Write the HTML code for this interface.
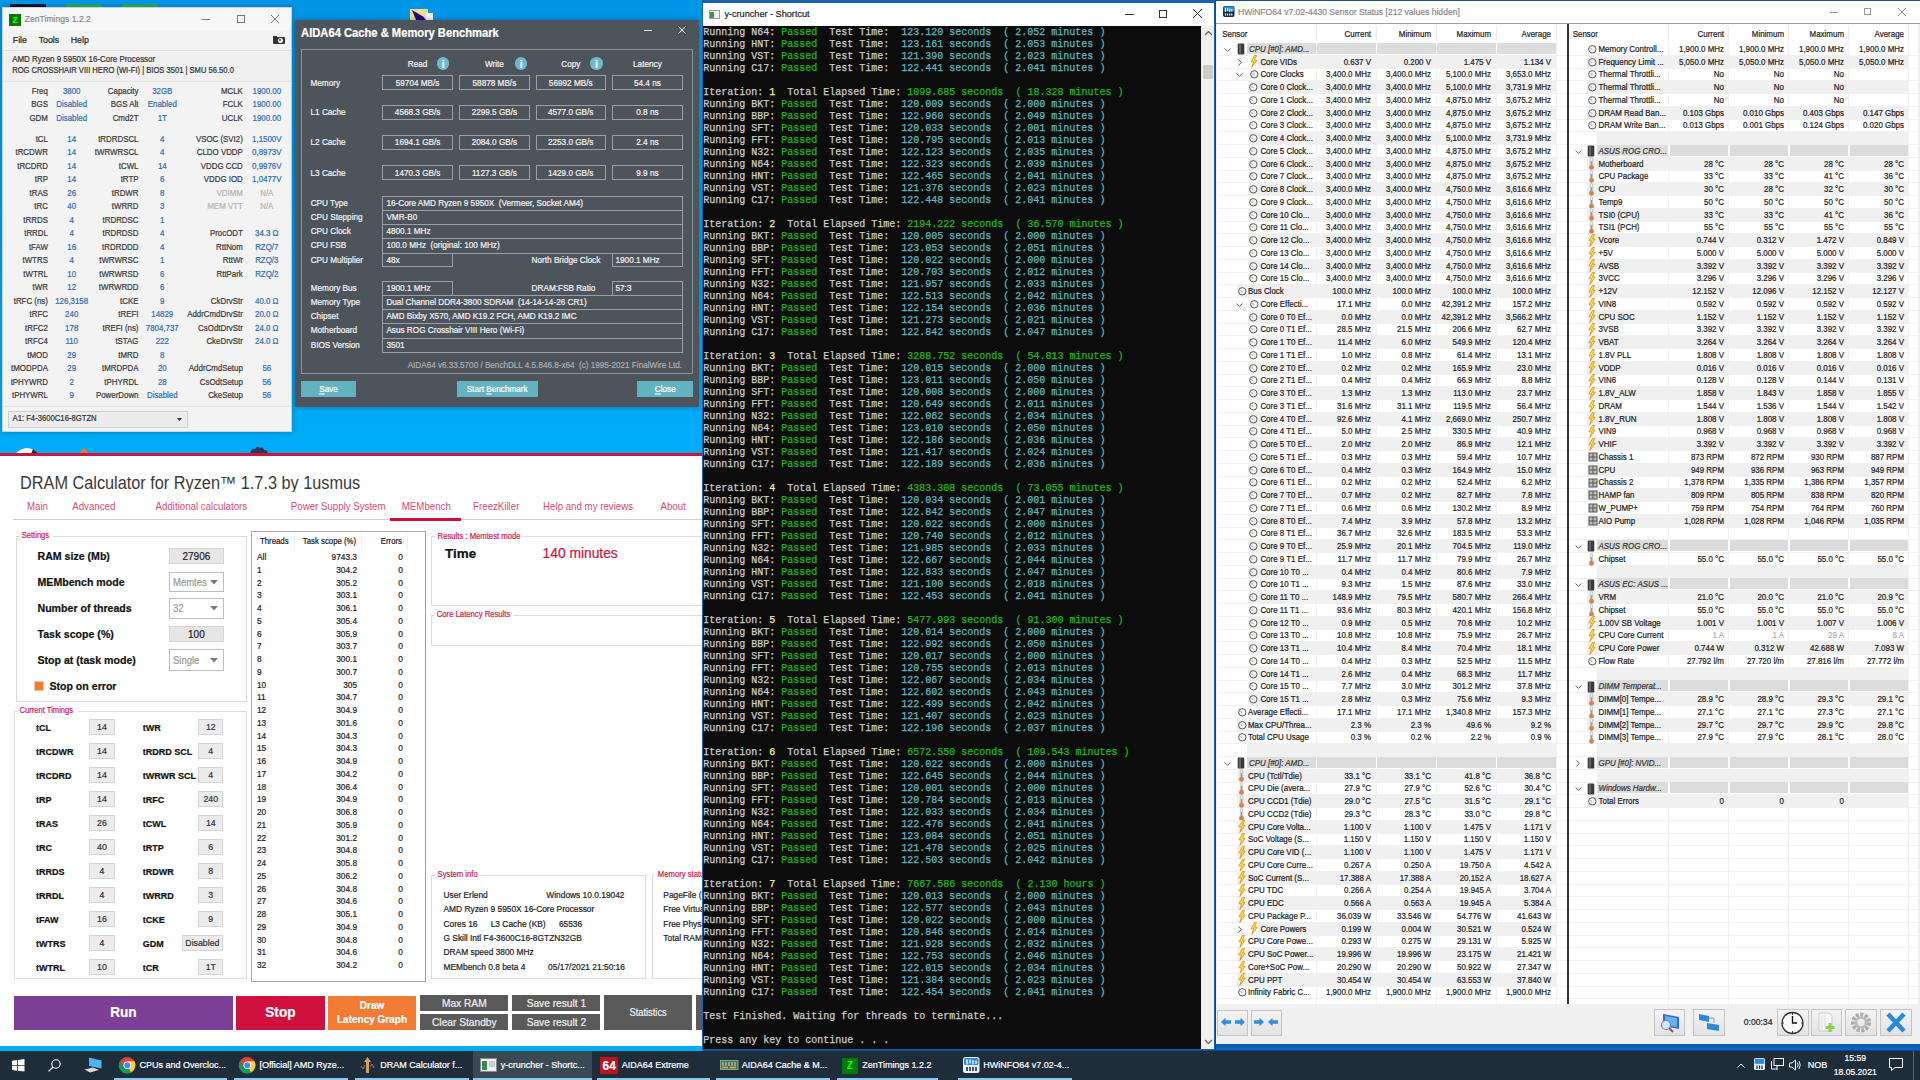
<!DOCTYPE html>
<html><head><meta charset="utf-8"><title>Desktop</title>
<style>
html,body{margin:0;padding:0;}
body{width:1920px;height:1080px;overflow:hidden;position:relative;background:#0a95e6;font-family:"Liberation Sans",sans-serif;}
.a{position:absolute;box-sizing:border-box;}
.t{position:absolute;white-space:pre;line-height:0;-webkit-text-stroke:0.2px currentColor;}
.m{-webkit-text-stroke:0.25px currentColor;}
.m{font-family:"Liberation Mono",monospace;}
svg{position:absolute;overflow:visible;}
</style></head><body>

<div class="a" style="left:0.00px;top:0.00px;width:1920.00px;height:1080.00px;background:#0b4a88;"></div>
<div class="a" style="left:0.00px;top:0.00px;width:702.50px;height:1080.00px;background:linear-gradient(180deg,#0096e8 0%,#00a2f2 25%,#00acf8 42%,#00acf8 100%);"></div>
<div class="a" style="left:1210.00px;top:0.00px;width:10.00px;height:1080.00px;background:#0a4a82;"></div>
<div class="a" style="left:9.50px;top:4.30px;width:36.30px;height:2.30px;background:#0a1838;"></div>
<div class="a" style="left:66.00px;top:4.00px;width:36.00px;height:2.60px;background:#22b060;"></div>
<div class="a" style="left:122.00px;top:4.00px;width:36.00px;height:2.60px;background:#22b060;"></div>
<svg style="left:410px;top:9px" width="23" height="11"><rect x="0" y="0" width="18" height="11" fill="#f6dc8c"/><rect x="16" y="4" width="7" height="7" fill="#f2f6fa"/><path d="M2 1L13 7.5L16 11H6Z" fill="#1a0a8a"/></svg>
<svg style="left:15px;top:446px" width="24" height="8"><path d="M0 8Q12 -4 24 8Z" fill="#ffffff"/><path d="M18 3L24 8H16Z" fill="#223"/></svg>
<svg style="left:79px;top:447px" width="10" height="7"><path d="M5 0L10 7H0Z" fill="#e07a30"/></svg>
<svg style="left:250px;top:445px" width="18" height="9"><path d="M0 9Q1 3 5 4Q7 0 10 3Q13 1 14 5Q18 5 18 9Z" fill="#2a3a5a"/></svg>
<div class="a" style="left:2.00px;top:7.00px;width:290.00px;height:425.00px;background:#f3f3f3;border:1px solid #c9d3dc;box-shadow:0 0 6px rgba(0,0,0,0.25);"></div>
<div class="a" style="left:3.00px;top:8.00px;width:288.00px;height:22.00px;background:#f7f7f7;"></div>
<div class="a" style="left:9.00px;top:13.50px;width:12.00px;height:12.00px;background:#037a03;"></div>
<div class="t" style="top:19.60px;font-size:8.5px;color:#22f022;left:15.00px;transform:translateX(-50%) scaleY(1.13);font-weight:bold;">Z</div>
<div class="t" style="top:19.30px;font-size:8.6px;color:#8a8a8a;left:24.80px;transform:scaleY(1.13);">ZenTimings 1.2.2</div>
<div class="a" style="left:202.00px;top:18.50px;width:8.00px;height:0.80px;background:#777;"></div>
<div class="a" style="left:237.00px;top:15.00px;width:7.50px;height:7.50px;border:1px solid #777;"></div>
<svg style="left:271px;top:15px" width="8" height="8"><path d="M0 0L8 8M8 0L0 8" stroke="#666" stroke-width="0.9"/></svg>
<div class="t" style="top:40.30px;font-size:8.8px;color:#222;left:12.80px;transform:scaleY(1.13);">File</div>
<div class="t" style="top:40.30px;font-size:8.8px;color:#222;left:38.70px;transform:scaleY(1.13);">Tools</div>
<div class="t" style="top:40.30px;font-size:8.8px;color:#222;left:70.70px;transform:scaleY(1.13);">Help</div>
<div class="a" style="left:273.00px;top:36.50px;width:12.00px;height:7.50px;background:#333;border-radius:1px;"></div>
<div class="a" style="left:277.50px;top:37.50px;width:5.00px;height:5.00px;background:#fff;border-radius:50%;"></div>
<div class="a" style="left:278.80px;top:38.80px;width:2.50px;height:2.50px;background:#333;border-radius:50%;"></div>
<div class="a" style="left:273.00px;top:36.00px;width:4.00px;height:1.50px;background:#333;"></div>
<div class="a" style="left:3.00px;top:49.50px;width:288.00px;height:1.00px;background:#e2e2e2;"></div>
<div class="a" style="left:3.00px;top:50.50px;width:288.00px;height:30.00px;background:#f0f0f0;"></div>
<div class="a" style="left:3.00px;top:80.50px;width:288.00px;height:1.00px;background:#e4e4e4;"></div>
<div class="t" style="top:59.50px;font-size:7.95px;color:#333;left:12.20px;transform:scaleY(1.13);">AMD Ryzen 9 5950X 16-Core Processor</div>
<div class="t" style="top:70.80px;font-size:7.6px;color:#333;left:12.20px;transform:scaleY(1.13);">ROG CROSSHAIR VIII HERO (WI-FI) | BIOS 3501 | SMU 56.50.0</div>
<div class="t" style="top:91.60px;font-size:7.9px;color:#3a3a3a;right:1872.10px;transform:scaleY(1.13);">Freq</div>
<div class="t" style="top:91.60px;font-size:7.9px;color:#2f6eb5;left:71.70px;transform:translateX(-50%) scaleY(1.13);">3800</div>
<div class="t" style="top:91.60px;font-size:7.9px;color:#3a3a3a;right:1781.50px;transform:scaleY(1.13);">Capacity</div>
<div class="t" style="top:91.60px;font-size:7.9px;color:#2f6eb5;left:162.30px;transform:translateX(-50%) scaleY(1.13);">32GB</div>
<div class="t" style="top:91.60px;font-size:7.9px;color:#3a3a3a;right:1677.20px;transform:scaleY(1.13);">MCLK</div>
<div class="t" style="top:91.60px;font-size:7.9px;color:#2f6eb5;left:266.80px;transform:translateX(-50%) scaleY(1.13);">1900.00</div>
<div class="t" style="top:105.10px;font-size:7.9px;color:#3a3a3a;right:1872.10px;transform:scaleY(1.13);">BGS</div>
<div class="t" style="top:105.10px;font-size:7.9px;color:#2f6eb5;left:71.70px;transform:translateX(-50%) scaleY(1.13);">Disabled</div>
<div class="t" style="top:105.10px;font-size:7.9px;color:#3a3a3a;right:1781.50px;transform:scaleY(1.13);">BGS Alt</div>
<div class="t" style="top:105.10px;font-size:7.9px;color:#2f6eb5;left:162.30px;transform:translateX(-50%) scaleY(1.13);">Enabled</div>
<div class="t" style="top:105.10px;font-size:7.9px;color:#3a3a3a;right:1677.20px;transform:scaleY(1.13);">FCLK</div>
<div class="t" style="top:105.10px;font-size:7.9px;color:#2f6eb5;left:266.80px;transform:translateX(-50%) scaleY(1.13);">1900.00</div>
<div class="t" style="top:118.60px;font-size:7.9px;color:#3a3a3a;right:1872.10px;transform:scaleY(1.13);">GDM</div>
<div class="t" style="top:118.60px;font-size:7.9px;color:#2f6eb5;left:71.70px;transform:translateX(-50%) scaleY(1.13);">Disabled</div>
<div class="t" style="top:118.60px;font-size:7.9px;color:#3a3a3a;right:1781.50px;transform:scaleY(1.13);">Cmd2T</div>
<div class="t" style="top:118.60px;font-size:7.9px;color:#2f6eb5;left:162.30px;transform:translateX(-50%) scaleY(1.13);">1T</div>
<div class="t" style="top:118.60px;font-size:7.9px;color:#3a3a3a;right:1677.20px;transform:scaleY(1.13);">UCLK</div>
<div class="t" style="top:118.60px;font-size:7.9px;color:#2f6eb5;left:266.80px;transform:translateX(-50%) scaleY(1.13);">1900.00</div>
<div class="t" style="top:139.50px;font-size:7.9px;color:#3a3a3a;right:1872.10px;transform:scaleY(1.13);">tCL</div>
<div class="t" style="top:139.50px;font-size:7.9px;color:#2f6eb5;left:71.70px;transform:translateX(-50%) scaleY(1.13);">14</div>
<div class="t" style="top:139.50px;font-size:7.9px;color:#3a3a3a;right:1781.50px;transform:scaleY(1.13);">tRDRDSCL</div>
<div class="t" style="top:139.50px;font-size:7.9px;color:#2f6eb5;left:162.30px;transform:translateX(-50%) scaleY(1.13);">4</div>
<div class="t" style="top:139.50px;font-size:7.9px;color:#3a3a3a;right:1677.20px;transform:scaleY(1.13);">VSOC (SVI2)</div>
<div class="t" style="top:139.50px;font-size:7.9px;color:#2f6eb5;left:266.80px;transform:translateX(-50%) scaleY(1.13);">1,1500V</div>
<div class="t" style="top:153.00px;font-size:7.9px;color:#3a3a3a;right:1872.10px;transform:scaleY(1.13);">tRCDWR</div>
<div class="t" style="top:153.00px;font-size:7.9px;color:#2f6eb5;left:71.70px;transform:translateX(-50%) scaleY(1.13);">14</div>
<div class="t" style="top:153.00px;font-size:7.9px;color:#3a3a3a;right:1781.50px;transform:scaleY(1.13);">tWRWRSCL</div>
<div class="t" style="top:153.00px;font-size:7.9px;color:#2f6eb5;left:162.30px;transform:translateX(-50%) scaleY(1.13);">4</div>
<div class="t" style="top:153.00px;font-size:7.9px;color:#3a3a3a;right:1677.20px;transform:scaleY(1.13);">CLDO VDDP</div>
<div class="t" style="top:153.00px;font-size:7.9px;color:#2f6eb5;left:266.80px;transform:translateX(-50%) scaleY(1.13);">0,8973V</div>
<div class="t" style="top:166.50px;font-size:7.9px;color:#3a3a3a;right:1872.10px;transform:scaleY(1.13);">tRCDRD</div>
<div class="t" style="top:166.50px;font-size:7.9px;color:#2f6eb5;left:71.70px;transform:translateX(-50%) scaleY(1.13);">14</div>
<div class="t" style="top:166.50px;font-size:7.9px;color:#3a3a3a;right:1781.50px;transform:scaleY(1.13);">tCWL</div>
<div class="t" style="top:166.50px;font-size:7.9px;color:#2f6eb5;left:162.30px;transform:translateX(-50%) scaleY(1.13);">14</div>
<div class="t" style="top:166.50px;font-size:7.9px;color:#3a3a3a;right:1677.20px;transform:scaleY(1.13);">VDDG CCD</div>
<div class="t" style="top:166.50px;font-size:7.9px;color:#2f6eb5;left:266.80px;transform:translateX(-50%) scaleY(1.13);">0,9976V</div>
<div class="t" style="top:180.00px;font-size:7.9px;color:#3a3a3a;right:1872.10px;transform:scaleY(1.13);">tRP</div>
<div class="t" style="top:180.00px;font-size:7.9px;color:#2f6eb5;left:71.70px;transform:translateX(-50%) scaleY(1.13);">14</div>
<div class="t" style="top:180.00px;font-size:7.9px;color:#3a3a3a;right:1781.50px;transform:scaleY(1.13);">tRTP</div>
<div class="t" style="top:180.00px;font-size:7.9px;color:#2f6eb5;left:162.30px;transform:translateX(-50%) scaleY(1.13);">6</div>
<div class="t" style="top:180.00px;font-size:7.9px;color:#3a3a3a;right:1677.20px;transform:scaleY(1.13);">VDDG IOD</div>
<div class="t" style="top:180.00px;font-size:7.9px;color:#2f6eb5;left:266.80px;transform:translateX(-50%) scaleY(1.13);">1,0477V</div>
<div class="t" style="top:193.50px;font-size:7.9px;color:#3a3a3a;right:1872.10px;transform:scaleY(1.13);">tRAS</div>
<div class="t" style="top:193.50px;font-size:7.9px;color:#2f6eb5;left:71.70px;transform:translateX(-50%) scaleY(1.13);">26</div>
<div class="t" style="top:193.50px;font-size:7.9px;color:#3a3a3a;right:1781.50px;transform:scaleY(1.13);">tRDWR</div>
<div class="t" style="top:193.50px;font-size:7.9px;color:#2f6eb5;left:162.30px;transform:translateX(-50%) scaleY(1.13);">8</div>
<div class="t" style="top:193.50px;font-size:7.9px;color:#b4b4b4;right:1677.20px;transform:scaleY(1.13);">VDIMM</div>
<div class="t" style="top:193.50px;font-size:7.9px;color:#b4b4b4;left:266.80px;transform:translateX(-50%) scaleY(1.13);">N/A</div>
<div class="t" style="top:207.00px;font-size:7.9px;color:#3a3a3a;right:1872.10px;transform:scaleY(1.13);">tRC</div>
<div class="t" style="top:207.00px;font-size:7.9px;color:#2f6eb5;left:71.70px;transform:translateX(-50%) scaleY(1.13);">40</div>
<div class="t" style="top:207.00px;font-size:7.9px;color:#3a3a3a;right:1781.50px;transform:scaleY(1.13);">tWRRD</div>
<div class="t" style="top:207.00px;font-size:7.9px;color:#2f6eb5;left:162.30px;transform:translateX(-50%) scaleY(1.13);">3</div>
<div class="t" style="top:207.00px;font-size:7.9px;color:#b4b4b4;right:1677.20px;transform:scaleY(1.13);">MEM VTT</div>
<div class="t" style="top:207.00px;font-size:7.9px;color:#b4b4b4;left:266.80px;transform:translateX(-50%) scaleY(1.13);">N/A</div>
<div class="t" style="top:220.50px;font-size:7.9px;color:#3a3a3a;right:1872.10px;transform:scaleY(1.13);">tRRDS</div>
<div class="t" style="top:220.50px;font-size:7.9px;color:#2f6eb5;left:71.70px;transform:translateX(-50%) scaleY(1.13);">4</div>
<div class="t" style="top:220.50px;font-size:7.9px;color:#3a3a3a;right:1781.50px;transform:scaleY(1.13);">tRDRDSC</div>
<div class="t" style="top:220.50px;font-size:7.9px;color:#2f6eb5;left:162.30px;transform:translateX(-50%) scaleY(1.13);">1</div>
<div class="t" style="top:234.00px;font-size:7.9px;color:#3a3a3a;right:1872.10px;transform:scaleY(1.13);">tRRDL</div>
<div class="t" style="top:234.00px;font-size:7.9px;color:#2f6eb5;left:71.70px;transform:translateX(-50%) scaleY(1.13);">4</div>
<div class="t" style="top:234.00px;font-size:7.9px;color:#3a3a3a;right:1781.50px;transform:scaleY(1.13);">tRDRDSD</div>
<div class="t" style="top:234.00px;font-size:7.9px;color:#2f6eb5;left:162.30px;transform:translateX(-50%) scaleY(1.13);">4</div>
<div class="t" style="top:234.00px;font-size:7.9px;color:#3a3a3a;right:1677.20px;transform:scaleY(1.13);">ProcODT</div>
<div class="t" style="top:234.00px;font-size:7.9px;color:#2f6eb5;left:266.80px;transform:translateX(-50%) scaleY(1.13);">34.3 Ω</div>
<div class="t" style="top:247.50px;font-size:7.9px;color:#3a3a3a;right:1872.10px;transform:scaleY(1.13);">tFAW</div>
<div class="t" style="top:247.50px;font-size:7.9px;color:#2f6eb5;left:71.70px;transform:translateX(-50%) scaleY(1.13);">16</div>
<div class="t" style="top:247.50px;font-size:7.9px;color:#3a3a3a;right:1781.50px;transform:scaleY(1.13);">tRDRDDD</div>
<div class="t" style="top:247.50px;font-size:7.9px;color:#2f6eb5;left:162.30px;transform:translateX(-50%) scaleY(1.13);">4</div>
<div class="t" style="top:247.50px;font-size:7.9px;color:#3a3a3a;right:1677.20px;transform:scaleY(1.13);">RttNom</div>
<div class="t" style="top:247.50px;font-size:7.9px;color:#2f6eb5;left:266.80px;transform:translateX(-50%) scaleY(1.13);">RZQ/7</div>
<div class="t" style="top:261.00px;font-size:7.9px;color:#3a3a3a;right:1872.10px;transform:scaleY(1.13);">tWTRS</div>
<div class="t" style="top:261.00px;font-size:7.9px;color:#2f6eb5;left:71.70px;transform:translateX(-50%) scaleY(1.13);">4</div>
<div class="t" style="top:261.00px;font-size:7.9px;color:#3a3a3a;right:1781.50px;transform:scaleY(1.13);">tWRWRSC</div>
<div class="t" style="top:261.00px;font-size:7.9px;color:#2f6eb5;left:162.30px;transform:translateX(-50%) scaleY(1.13);">1</div>
<div class="t" style="top:261.00px;font-size:7.9px;color:#3a3a3a;right:1677.20px;transform:scaleY(1.13);">RttWr</div>
<div class="t" style="top:261.00px;font-size:7.9px;color:#2f6eb5;left:266.80px;transform:translateX(-50%) scaleY(1.13);">RZQ/3</div>
<div class="t" style="top:274.50px;font-size:7.9px;color:#3a3a3a;right:1872.10px;transform:scaleY(1.13);">tWTRL</div>
<div class="t" style="top:274.50px;font-size:7.9px;color:#2f6eb5;left:71.70px;transform:translateX(-50%) scaleY(1.13);">10</div>
<div class="t" style="top:274.50px;font-size:7.9px;color:#3a3a3a;right:1781.50px;transform:scaleY(1.13);">tWRWRSD</div>
<div class="t" style="top:274.50px;font-size:7.9px;color:#2f6eb5;left:162.30px;transform:translateX(-50%) scaleY(1.13);">6</div>
<div class="t" style="top:274.50px;font-size:7.9px;color:#3a3a3a;right:1677.20px;transform:scaleY(1.13);">RttPark</div>
<div class="t" style="top:274.50px;font-size:7.9px;color:#2f6eb5;left:266.80px;transform:translateX(-50%) scaleY(1.13);">RZQ/2</div>
<div class="t" style="top:288.00px;font-size:7.9px;color:#3a3a3a;right:1872.10px;transform:scaleY(1.13);">tWR</div>
<div class="t" style="top:288.00px;font-size:7.9px;color:#2f6eb5;left:71.70px;transform:translateX(-50%) scaleY(1.13);">12</div>
<div class="t" style="top:288.00px;font-size:7.9px;color:#3a3a3a;right:1781.50px;transform:scaleY(1.13);">tWRWRDD</div>
<div class="t" style="top:288.00px;font-size:7.9px;color:#2f6eb5;left:162.30px;transform:translateX(-50%) scaleY(1.13);">6</div>
<div class="t" style="top:301.50px;font-size:7.9px;color:#3a3a3a;right:1872.10px;transform:scaleY(1.13);">tRFC (ns)</div>
<div class="t" style="top:301.50px;font-size:7.9px;color:#2f6eb5;left:71.70px;transform:translateX(-50%) scaleY(1.13);">126,3158</div>
<div class="t" style="top:301.50px;font-size:7.9px;color:#3a3a3a;right:1781.50px;transform:scaleY(1.13);">tCKE</div>
<div class="t" style="top:301.50px;font-size:7.9px;color:#2f6eb5;left:162.30px;transform:translateX(-50%) scaleY(1.13);">9</div>
<div class="t" style="top:301.50px;font-size:7.9px;color:#3a3a3a;right:1677.20px;transform:scaleY(1.13);">CkDrvStr</div>
<div class="t" style="top:301.50px;font-size:7.9px;color:#2f6eb5;left:266.80px;transform:translateX(-50%) scaleY(1.13);">40.0 Ω</div>
<div class="t" style="top:315.00px;font-size:7.9px;color:#3a3a3a;right:1872.10px;transform:scaleY(1.13);">tRFC</div>
<div class="t" style="top:315.00px;font-size:7.9px;color:#2f6eb5;left:71.70px;transform:translateX(-50%) scaleY(1.13);">240</div>
<div class="t" style="top:315.00px;font-size:7.9px;color:#3a3a3a;right:1781.50px;transform:scaleY(1.13);">tREFI</div>
<div class="t" style="top:315.00px;font-size:7.9px;color:#2f6eb5;left:162.30px;transform:translateX(-50%) scaleY(1.13);">14829</div>
<div class="t" style="top:315.00px;font-size:7.9px;color:#3a3a3a;right:1677.20px;transform:scaleY(1.13);">AddrCmdDrvStr</div>
<div class="t" style="top:315.00px;font-size:7.9px;color:#2f6eb5;left:266.80px;transform:translateX(-50%) scaleY(1.13);">20.0 Ω</div>
<div class="t" style="top:328.50px;font-size:7.9px;color:#3a3a3a;right:1872.10px;transform:scaleY(1.13);">tRFC2</div>
<div class="t" style="top:328.50px;font-size:7.9px;color:#2f6eb5;left:71.70px;transform:translateX(-50%) scaleY(1.13);">178</div>
<div class="t" style="top:328.50px;font-size:7.9px;color:#3a3a3a;right:1781.50px;transform:scaleY(1.13);">tREFI (ns)</div>
<div class="t" style="top:328.50px;font-size:7.9px;color:#2f6eb5;left:162.30px;transform:translateX(-50%) scaleY(1.13);">7804,737</div>
<div class="t" style="top:328.50px;font-size:7.9px;color:#3a3a3a;right:1677.20px;transform:scaleY(1.13);">CsOdtDrvStr</div>
<div class="t" style="top:328.50px;font-size:7.9px;color:#2f6eb5;left:266.80px;transform:translateX(-50%) scaleY(1.13);">24.0 Ω</div>
<div class="t" style="top:342.00px;font-size:7.9px;color:#3a3a3a;right:1872.10px;transform:scaleY(1.13);">tRFC4</div>
<div class="t" style="top:342.00px;font-size:7.9px;color:#2f6eb5;left:71.70px;transform:translateX(-50%) scaleY(1.13);">110</div>
<div class="t" style="top:342.00px;font-size:7.9px;color:#3a3a3a;right:1781.50px;transform:scaleY(1.13);">tSTAG</div>
<div class="t" style="top:342.00px;font-size:7.9px;color:#2f6eb5;left:162.30px;transform:translateX(-50%) scaleY(1.13);">222</div>
<div class="t" style="top:342.00px;font-size:7.9px;color:#3a3a3a;right:1677.20px;transform:scaleY(1.13);">CkeDrvStr</div>
<div class="t" style="top:342.00px;font-size:7.9px;color:#2f6eb5;left:266.80px;transform:translateX(-50%) scaleY(1.13);">24.0 Ω</div>
<div class="t" style="top:355.50px;font-size:7.9px;color:#3a3a3a;right:1872.10px;transform:scaleY(1.13);">tMOD</div>
<div class="t" style="top:355.50px;font-size:7.9px;color:#2f6eb5;left:71.70px;transform:translateX(-50%) scaleY(1.13);">29</div>
<div class="t" style="top:355.50px;font-size:7.9px;color:#3a3a3a;right:1781.50px;transform:scaleY(1.13);">tMRD</div>
<div class="t" style="top:355.50px;font-size:7.9px;color:#2f6eb5;left:162.30px;transform:translateX(-50%) scaleY(1.13);">8</div>
<div class="t" style="top:369.00px;font-size:7.9px;color:#3a3a3a;right:1872.10px;transform:scaleY(1.13);">tMODPDA</div>
<div class="t" style="top:369.00px;font-size:7.9px;color:#2f6eb5;left:71.70px;transform:translateX(-50%) scaleY(1.13);">29</div>
<div class="t" style="top:369.00px;font-size:7.9px;color:#3a3a3a;right:1781.50px;transform:scaleY(1.13);">tMRDPDA</div>
<div class="t" style="top:369.00px;font-size:7.9px;color:#2f6eb5;left:162.30px;transform:translateX(-50%) scaleY(1.13);">20</div>
<div class="t" style="top:369.00px;font-size:7.9px;color:#3a3a3a;right:1677.20px;transform:scaleY(1.13);">AddrCmdSetup</div>
<div class="t" style="top:369.00px;font-size:7.9px;color:#2f6eb5;left:266.80px;transform:translateX(-50%) scaleY(1.13);">56</div>
<div class="t" style="top:382.50px;font-size:7.9px;color:#3a3a3a;right:1872.10px;transform:scaleY(1.13);">tPHYWRD</div>
<div class="t" style="top:382.50px;font-size:7.9px;color:#2f6eb5;left:71.70px;transform:translateX(-50%) scaleY(1.13);">2</div>
<div class="t" style="top:382.50px;font-size:7.9px;color:#3a3a3a;right:1781.50px;transform:scaleY(1.13);">tPHYRDL</div>
<div class="t" style="top:382.50px;font-size:7.9px;color:#2f6eb5;left:162.30px;transform:translateX(-50%) scaleY(1.13);">28</div>
<div class="t" style="top:382.50px;font-size:7.9px;color:#3a3a3a;right:1677.20px;transform:scaleY(1.13);">CsOdtSetup</div>
<div class="t" style="top:382.50px;font-size:7.9px;color:#2f6eb5;left:266.80px;transform:translateX(-50%) scaleY(1.13);">56</div>
<div class="t" style="top:396.00px;font-size:7.9px;color:#3a3a3a;right:1872.10px;transform:scaleY(1.13);">tPHYWRL</div>
<div class="t" style="top:396.00px;font-size:7.9px;color:#2f6eb5;left:71.70px;transform:translateX(-50%) scaleY(1.13);">9</div>
<div class="t" style="top:396.00px;font-size:7.9px;color:#3a3a3a;right:1781.50px;transform:scaleY(1.13);">PowerDown</div>
<div class="t" style="top:396.00px;font-size:7.9px;color:#2f6eb5;left:162.30px;transform:translateX(-50%) scaleY(1.13);">Disabled</div>
<div class="t" style="top:396.00px;font-size:7.9px;color:#3a3a3a;right:1677.20px;transform:scaleY(1.13);">CkeSetup</div>
<div class="t" style="top:396.00px;font-size:7.9px;color:#2f6eb5;left:266.80px;transform:translateX(-50%) scaleY(1.13);">56</div>
<div class="a" style="left:3.00px;top:405.50px;width:288.00px;height:1.00px;background:#e6e6e6;"></div>
<div class="a" style="left:7.50px;top:410.50px;width:180.00px;height:17.00px;background:#ececec;border:1px solid #cfcfcf;"></div>
<div class="t" style="top:419.20px;font-size:7.7px;color:#333;left:12.50px;transform:scaleY(1.13);">A1: F4-3600C16-8GTZN</div>
<svg style="left:177px;top:417.5px" width="5" height="3"><path d="M0 0H5L2.5 3Z" fill="#333"/></svg>
<div class="a" style="left:295.00px;top:19.50px;width:404.00px;height:387.40px;background:#4e545c;box-shadow:0 0 6px rgba(0,0,0,0.3);"></div>
<div class="t" style="top:32.90px;font-size:11.2px;color:#ffffff;left:301.10px;transform:scaleY(1.12);font-weight:bold;">AIDA64 Cache &amp; Memory Benchmark</div>
<div class="a" style="left:643.50px;top:30.00px;width:8.00px;height:1.00px;background:#e0e0e0;"></div>
<svg style="left:677.5px;top:26px" width="8" height="8"><path d="M0 0L8 8M8 0L0 8" stroke="#eee" stroke-width="1"/></svg>
<div class="a" style="left:301.30px;top:48.50px;width:391.50px;height:325.50px;border:1px solid #8d9399;"></div>
<div class="t" style="top:64.70px;font-size:8.2px;color:#f2f2f2;left:417.60px;transform:translateX(-50%) scaleY(1.12);">Read</div>
<div class="t" style="top:64.70px;font-size:8.2px;color:#f2f2f2;left:494.40px;transform:translateX(-50%) scaleY(1.12);">Write</div>
<div class="t" style="top:64.70px;font-size:8.2px;color:#f2f2f2;left:570.80px;transform:translateX(-50%) scaleY(1.12);">Copy</div>
<div class="t" style="top:64.70px;font-size:8.2px;color:#f2f2f2;left:647.40px;transform:translateX(-50%) scaleY(1.12);">Latency</div>
<div class="a" style="left:437.10px;top:57.40px;width:12.40px;height:12.40px;background:#6fb9c8;border-radius:50%;"></div>
<div class="t" style="top:65.20px;font-size:9px;color:#ffffff;left:443.30px;transform:translateX(-50%) scaleY(1.12);font-weight:bold;">i</div>
<div class="a" style="left:515.10px;top:57.40px;width:12.40px;height:12.40px;background:#6fb9c8;border-radius:50%;"></div>
<div class="t" style="top:65.20px;font-size:9px;color:#ffffff;left:521.30px;transform:translateX(-50%) scaleY(1.12);font-weight:bold;">i</div>
<div class="a" style="left:590.30px;top:57.40px;width:12.40px;height:12.40px;background:#6fb9c8;border-radius:50%;"></div>
<div class="t" style="top:65.20px;font-size:9px;color:#ffffff;left:596.50px;transform:translateX(-50%) scaleY(1.12);font-weight:bold;">i</div>
<div class="t" style="top:83.60px;font-size:8.2px;color:#f2f2f2;left:310.50px;transform:scaleY(1.12);">Memory</div>
<div class="a" style="left:382.30px;top:75.30px;width:70.60px;height:14.60px;border:1px solid #9aa0a6;"></div>
<div class="t" style="top:83.60px;font-size:8.2px;color:#f2f2f2;left:417.60px;transform:translateX(-50%) scaleY(1.12);">59704 MB/s</div>
<div class="a" style="left:459.10px;top:75.30px;width:70.60px;height:14.60px;border:1px solid #9aa0a6;"></div>
<div class="t" style="top:83.60px;font-size:8.2px;color:#f2f2f2;left:494.40px;transform:translateX(-50%) scaleY(1.12);">58878 MB/s</div>
<div class="a" style="left:535.50px;top:75.30px;width:70.40px;height:14.60px;border:1px solid #9aa0a6;"></div>
<div class="t" style="top:83.60px;font-size:8.2px;color:#f2f2f2;left:570.70px;transform:translateX(-50%) scaleY(1.12);">56992 MB/s</div>
<div class="a" style="left:612.10px;top:75.30px;width:70.60px;height:14.60px;border:1px solid #9aa0a6;"></div>
<div class="t" style="top:83.60px;font-size:8.2px;color:#f2f2f2;left:647.40px;transform:translateX(-50%) scaleY(1.12);">54.4 ns</div>
<div class="t" style="top:113.40px;font-size:8.2px;color:#f2f2f2;left:310.50px;transform:scaleY(1.12);">L1 Cache</div>
<div class="a" style="left:382.30px;top:105.10px;width:70.60px;height:14.60px;border:1px solid #9aa0a6;"></div>
<div class="t" style="top:113.40px;font-size:8.2px;color:#f2f2f2;left:417.60px;transform:translateX(-50%) scaleY(1.12);">4568.3 GB/s</div>
<div class="a" style="left:459.10px;top:105.10px;width:70.60px;height:14.60px;border:1px solid #9aa0a6;"></div>
<div class="t" style="top:113.40px;font-size:8.2px;color:#f2f2f2;left:494.40px;transform:translateX(-50%) scaleY(1.12);">2299.5 GB/s</div>
<div class="a" style="left:535.50px;top:105.10px;width:70.40px;height:14.60px;border:1px solid #9aa0a6;"></div>
<div class="t" style="top:113.40px;font-size:8.2px;color:#f2f2f2;left:570.70px;transform:translateX(-50%) scaleY(1.12);">4577.0 GB/s</div>
<div class="a" style="left:612.10px;top:105.10px;width:70.60px;height:14.60px;border:1px solid #9aa0a6;"></div>
<div class="t" style="top:113.40px;font-size:8.2px;color:#f2f2f2;left:647.40px;transform:translateX(-50%) scaleY(1.12);">0.8 ns</div>
<div class="t" style="top:143.40px;font-size:8.2px;color:#f2f2f2;left:310.50px;transform:scaleY(1.12);">L2 Cache</div>
<div class="a" style="left:382.30px;top:135.10px;width:70.60px;height:14.60px;border:1px solid #9aa0a6;"></div>
<div class="t" style="top:143.40px;font-size:8.2px;color:#f2f2f2;left:417.60px;transform:translateX(-50%) scaleY(1.12);">1694.1 GB/s</div>
<div class="a" style="left:459.10px;top:135.10px;width:70.60px;height:14.60px;border:1px solid #9aa0a6;"></div>
<div class="t" style="top:143.40px;font-size:8.2px;color:#f2f2f2;left:494.40px;transform:translateX(-50%) scaleY(1.12);">2084.0 GB/s</div>
<div class="a" style="left:535.50px;top:135.10px;width:70.40px;height:14.60px;border:1px solid #9aa0a6;"></div>
<div class="t" style="top:143.40px;font-size:8.2px;color:#f2f2f2;left:570.70px;transform:translateX(-50%) scaleY(1.12);">2253.0 GB/s</div>
<div class="a" style="left:612.10px;top:135.10px;width:70.60px;height:14.60px;border:1px solid #9aa0a6;"></div>
<div class="t" style="top:143.40px;font-size:8.2px;color:#f2f2f2;left:647.40px;transform:translateX(-50%) scaleY(1.12);">2.4 ns</div>
<div class="t" style="top:173.50px;font-size:8.2px;color:#f2f2f2;left:310.50px;transform:scaleY(1.12);">L3 Cache</div>
<div class="a" style="left:382.30px;top:165.20px;width:70.60px;height:14.60px;border:1px solid #9aa0a6;"></div>
<div class="t" style="top:173.50px;font-size:8.2px;color:#f2f2f2;left:417.60px;transform:translateX(-50%) scaleY(1.12);">1470.3 GB/s</div>
<div class="a" style="left:459.10px;top:165.20px;width:70.60px;height:14.60px;border:1px solid #9aa0a6;"></div>
<div class="t" style="top:173.50px;font-size:8.2px;color:#f2f2f2;left:494.40px;transform:translateX(-50%) scaleY(1.12);">1127.3 GB/s</div>
<div class="a" style="left:535.50px;top:165.20px;width:70.40px;height:14.60px;border:1px solid #9aa0a6;"></div>
<div class="t" style="top:173.50px;font-size:8.2px;color:#f2f2f2;left:570.70px;transform:translateX(-50%) scaleY(1.12);">1429.0 GB/s</div>
<div class="a" style="left:612.10px;top:165.20px;width:70.60px;height:14.60px;border:1px solid #9aa0a6;"></div>
<div class="t" style="top:173.50px;font-size:8.2px;color:#f2f2f2;left:647.40px;transform:translateX(-50%) scaleY(1.12);">9.9 ns</div>
<div class="t" style="top:203.72px;font-size:8.2px;color:#f2f2f2;left:310.70px;transform:scaleY(1.12);">CPU Type</div>
<div class="a" style="left:382.00px;top:195.60px;width:300.50px;height:15.25px;border:1px solid #9aa0a6;"></div>
<div class="t" style="top:203.72px;font-size:8.2px;color:#f2f2f2;left:386.40px;transform:scaleY(1.12);">16-Core AMD Ryzen 9 5950X  (Vermeer, Socket AM4)</div>
<div class="t" style="top:217.97px;font-size:8.2px;color:#f2f2f2;left:310.70px;transform:scaleY(1.12);">CPU Stepping</div>
<div class="a" style="left:382.00px;top:209.85px;width:300.50px;height:15.25px;border:1px solid #9aa0a6;"></div>
<div class="t" style="top:217.97px;font-size:8.2px;color:#f2f2f2;left:386.40px;transform:scaleY(1.12);">VMR-B0</div>
<div class="t" style="top:232.22px;font-size:8.2px;color:#f2f2f2;left:310.70px;transform:scaleY(1.12);">CPU Clock</div>
<div class="a" style="left:382.00px;top:224.10px;width:300.50px;height:15.25px;border:1px solid #9aa0a6;"></div>
<div class="t" style="top:232.22px;font-size:8.2px;color:#f2f2f2;left:386.40px;transform:scaleY(1.12);">4800.1 MHz</div>
<div class="t" style="top:246.47px;font-size:8.2px;color:#f2f2f2;left:310.70px;transform:scaleY(1.12);">CPU FSB</div>
<div class="a" style="left:382.00px;top:238.35px;width:300.50px;height:15.25px;border:1px solid #9aa0a6;"></div>
<div class="t" style="top:246.47px;font-size:8.2px;color:#f2f2f2;left:386.40px;transform:scaleY(1.12);">100.0 MHz  (original: 100 MHz)</div>
<div class="t" style="top:260.73px;font-size:8.2px;color:#f2f2f2;left:310.70px;transform:scaleY(1.12);">CPU Multiplier</div>
<div class="a" style="left:382.00px;top:252.60px;width:70.80px;height:14.25px;border:1px solid #9aa0a6;"></div>
<div class="a" style="left:612.00px;top:252.60px;width:70.50px;height:14.25px;border:1px solid #9aa0a6;"></div>
<div class="t" style="top:260.73px;font-size:8.2px;color:#f2f2f2;left:531.60px;transform:scaleY(1.12);">North Bridge Clock</div>
<div class="t" style="top:260.73px;font-size:8.2px;color:#f2f2f2;left:615.50px;transform:scaleY(1.12);">1900.1 MHz</div>
<div class="t" style="top:260.73px;font-size:8.2px;color:#f2f2f2;left:386.40px;transform:scaleY(1.12);">48x</div>
<div class="t" style="top:288.73px;font-size:8.2px;color:#f2f2f2;left:310.70px;transform:scaleY(1.12);">Memory Bus</div>
<div class="a" style="left:382.00px;top:280.60px;width:70.80px;height:15.25px;border:1px solid #9aa0a6;"></div>
<div class="a" style="left:612.00px;top:280.60px;width:70.50px;height:15.25px;border:1px solid #9aa0a6;"></div>
<div class="t" style="top:288.73px;font-size:8.2px;color:#f2f2f2;left:531.60px;transform:scaleY(1.12);">DRAM:FSB Ratio</div>
<div class="t" style="top:288.73px;font-size:8.2px;color:#f2f2f2;left:615.50px;transform:scaleY(1.12);">57:3</div>
<div class="t" style="top:288.73px;font-size:8.2px;color:#f2f2f2;left:386.40px;transform:scaleY(1.12);">1900.1 MHz</div>
<div class="t" style="top:302.98px;font-size:8.2px;color:#f2f2f2;left:310.70px;transform:scaleY(1.12);">Memory Type</div>
<div class="a" style="left:382.00px;top:294.85px;width:300.50px;height:15.25px;border:1px solid #9aa0a6;"></div>
<div class="t" style="top:302.98px;font-size:8.2px;color:#f2f2f2;left:386.40px;transform:scaleY(1.12);">Dual Channel DDR4-3800 SDRAM  (14-14-14-26 CR1)</div>
<div class="t" style="top:317.23px;font-size:8.2px;color:#f2f2f2;left:310.70px;transform:scaleY(1.12);">Chipset</div>
<div class="a" style="left:382.00px;top:309.10px;width:300.50px;height:15.25px;border:1px solid #9aa0a6;"></div>
<div class="t" style="top:317.23px;font-size:8.2px;color:#f2f2f2;left:386.40px;transform:scaleY(1.12);">AMD Bixby X570, AMD K19.2 FCH, AMD K19.2 IMC</div>
<div class="t" style="top:331.48px;font-size:8.2px;color:#f2f2f2;left:310.70px;transform:scaleY(1.12);">Motherboard</div>
<div class="a" style="left:382.00px;top:323.35px;width:300.50px;height:15.25px;border:1px solid #9aa0a6;"></div>
<div class="t" style="top:331.48px;font-size:8.2px;color:#f2f2f2;left:386.40px;transform:scaleY(1.12);">Asus ROG Crosshair VIII Hero (Wi-Fi)</div>
<div class="t" style="top:345.73px;font-size:8.2px;color:#f2f2f2;left:310.70px;transform:scaleY(1.12);">BIOS Version</div>
<div class="a" style="left:382.00px;top:337.60px;width:300.50px;height:15.25px;border:1px solid #9aa0a6;"></div>
<div class="t" style="top:345.73px;font-size:8.2px;color:#f2f2f2;left:386.40px;transform:scaleY(1.12);">3501</div>
<div class="t" style="top:365.60px;font-size:8.15px;color:#a9aeb3;right:1238.00px;transform:scaleY(1.12);">AIDA64 v6.33.5700 / BenchDLL 4.5.846.8-x64  (c) 1995-2021 FinalWire Ltd.</div>
<div class="a" style="left:300.90px;top:381.00px;width:55.20px;height:15.50px;background:#62b2c0;"></div>
<div class="t" style="top:389.90px;font-size:8.2px;color:#ffffff;left:328.50px;transform:translateX(-50%) scaleY(1.12);"><u>S</u>ave</div>
<div class="a" style="left:456.70px;top:381.00px;width:80.90px;height:15.50px;background:#62b2c0;"></div>
<div class="t" style="top:389.90px;font-size:8.2px;color:#ffffff;left:497.15px;transform:translateX(-50%) scaleY(1.12);">Start <u>B</u>enchmark</div>
<div class="a" style="left:637.40px;top:381.00px;width:55.80px;height:15.50px;background:#62b2c0;"></div>
<div class="t" style="top:389.90px;font-size:8.2px;color:#ffffff;left:665.30px;transform:translateX(-50%) scaleY(1.12);"><u>C</u>lose</div>
<div class="a" style="left:0.00px;top:456.00px;width:702.50px;height:590.00px;background:#ffffff;"></div>
<div class="a" style="left:0.00px;top:453.00px;width:702.50px;height:3.30px;background:#c8163f;"></div>
<div class="t" style="top:482.00px;font-size:16.3px;color:#3a3a3a;left:20.00px;transform:scaleY(1.1);-webkit-text-stroke:0;">DRAM Calculator for Ryzen™ 1.7.3 by 1usmus</div>
<div class="t" style="top:506.60px;font-size:9.7px;color:#dc4a78;left:27.00px;transform:scaleY(1.1);-webkit-text-stroke:0;">Main</div>
<div class="t" style="top:506.60px;font-size:9.7px;color:#dc4a78;left:72.20px;transform:scaleY(1.1);-webkit-text-stroke:0;">Advanced</div>
<div class="t" style="top:506.60px;font-size:9.7px;color:#dc4a78;left:155.60px;transform:scaleY(1.1);-webkit-text-stroke:0;">Additional calculators</div>
<div class="t" style="top:506.60px;font-size:9.7px;color:#dc4a78;left:290.80px;transform:scaleY(1.1);-webkit-text-stroke:0;">Power Supply System</div>
<div class="t" style="top:506.60px;font-size:9.7px;color:#dc4a78;left:401.80px;transform:scaleY(1.1);-webkit-text-stroke:0;">MEMbench</div>
<div class="t" style="top:506.60px;font-size:9.7px;color:#dc4a78;left:473.10px;transform:scaleY(1.1);-webkit-text-stroke:0;">FreezKiller</div>
<div class="t" style="top:506.60px;font-size:9.7px;color:#dc4a78;left:543.10px;transform:scaleY(1.1);-webkit-text-stroke:0;">Help and my reviews</div>
<div class="t" style="top:506.60px;font-size:9.7px;color:#dc4a78;left:660.50px;transform:scaleY(1.1);-webkit-text-stroke:0;">About</div>
<div class="a" style="left:13.30px;top:518.80px;width:689.00px;height:1.60px;background:#cfcfcf;"></div>
<div class="a" style="left:390.00px;top:518.20px;width:70.70px;height:2.80px;background:#d0103a;"></div>
<div class="a" style="left:15.80px;top:536.00px;width:231.40px;height:166.00px;border:1px solid #dcdcdc;"></div>
<div class="a" style="left:19.70px;top:533.00px;width:33.00px;height:6.00px;background:#ffffff;"></div>
<div class="t" style="top:536.30px;font-size:7.6px;color:#d2214f;left:21.70px;transform:scaleY(1.1);">Settings</div>
<div class="t" style="top:556.10px;font-size:10.6px;color:#111111;left:37.50px;transform:scaleY(1.1);font-weight:bold;">RAM size (Mb)</div>
<div class="t" style="top:582.20px;font-size:10.6px;color:#111111;left:37.50px;transform:scaleY(1.1);font-weight:bold;">MEMbench mode</div>
<div class="t" style="top:608.30px;font-size:10.6px;color:#111111;left:37.50px;transform:scaleY(1.1);font-weight:bold;">Number of threads</div>
<div class="t" style="top:634.20px;font-size:10.6px;color:#111111;left:37.50px;transform:scaleY(1.1);font-weight:bold;">Task scope (%)</div>
<div class="t" style="top:660.30px;font-size:10.6px;color:#111111;left:37.50px;transform:scaleY(1.1);font-weight:bold;">Stop at (task mode)</div>
<div class="a" style="left:168.90px;top:547.80px;width:55.00px;height:16.60px;background:#e6e6e6;border:1px solid #d6d6d6;"></div>
<div class="t" style="top:556.60px;font-size:10px;color:#222;left:196.40px;transform:translateX(-50%) scaleY(1.1);">27906</div>
<div class="a" style="left:168.90px;top:571.70px;width:55.00px;height:20.80px;background:#ffffff;border:1px solid #bdbdbd;"></div>
<div class="t" style="top:582.70px;font-size:9.5px;color:#9a9a9a;left:173.00px;transform:scaleY(1.1);">Memtes</div>
<div class="a" style="left:168.90px;top:597.80px;width:55.00px;height:21.60px;background:#ffffff;border:1px solid #bdbdbd;"></div>
<div class="t" style="top:608.80px;font-size:9.5px;color:#9a9a9a;left:173.00px;transform:scaleY(1.1);">32</div>
<div class="a" style="left:168.90px;top:625.60px;width:55.00px;height:16.60px;background:#e6e6e6;border:1px solid #d6d6d6;"></div>
<div class="t" style="top:634.60px;font-size:10px;color:#222;left:196.40px;transform:translateX(-50%) scaleY(1.1);">100</div>
<div class="a" style="left:168.90px;top:649.40px;width:55.00px;height:21.40px;background:#ffffff;border:1px solid #bdbdbd;"></div>
<div class="t" style="top:660.80px;font-size:9.5px;color:#9a9a9a;left:173.00px;transform:scaleY(1.1);">Single</div>
<svg style="left:210px;top:580.20px" width="8" height="5"><path d="M0 0H8L4 4.5Z" fill="#7a7a7a"/></svg>
<svg style="left:210px;top:606.30px" width="8" height="5"><path d="M0 0H8L4 4.5Z" fill="#7a7a7a"/></svg>
<svg style="left:210px;top:658.30px" width="8" height="5"><path d="M0 0H8L4 4.5Z" fill="#7a7a7a"/></svg>
<div class="a" style="left:34.20px;top:681.00px;width:10.20px;height:10.00px;background:#f07c30;border:1.5px solid #f2c7a8;"></div>
<div class="t" style="top:686.20px;font-size:10.6px;color:#111111;left:49.40px;transform:scaleY(1.1);font-weight:bold;">Stop on error</div>
<div class="a" style="left:13.50px;top:710.70px;width:233.50px;height:268.30px;border:1px solid #dcdcdc;"></div>
<div class="a" style="left:17.50px;top:707.70px;width:60.00px;height:6.00px;background:#ffffff;"></div>
<div class="t" style="top:711.00px;font-size:7.6px;color:#d2214f;left:19.50px;transform:scaleY(1.1);">Current Timings</div>
<div class="t" style="top:728.10px;font-size:9.0px;color:#111;left:35.90px;transform:scaleY(1.1);font-weight:bold;">tCL</div>
<div class="a" style="left:89.30px;top:719.30px;width:25.30px;height:16.00px;background:#ececec;border:1px solid #d4d4d4;"></div>
<div class="t" style="top:727.30px;font-size:8.8px;color:#333;left:102.00px;transform:translateX(-50%) scaleY(1.1);">14</div>
<div class="t" style="top:728.10px;font-size:9.0px;color:#111;left:142.70px;transform:scaleY(1.1);font-weight:bold;">tWR</div>
<div class="a" style="left:198.10px;top:719.30px;width:25.30px;height:16.00px;background:#ececec;border:1px solid #d4d4d4;"></div>
<div class="t" style="top:727.30px;font-size:8.8px;color:#333;left:210.80px;transform:translateX(-50%) scaleY(1.1);">12</div>
<div class="t" style="top:752.07px;font-size:9.0px;color:#111;left:35.90px;transform:scaleY(1.1);font-weight:bold;">tRCDWR</div>
<div class="a" style="left:89.30px;top:743.27px;width:25.30px;height:16.00px;background:#ececec;border:1px solid #d4d4d4;"></div>
<div class="t" style="top:751.27px;font-size:8.8px;color:#333;left:102.00px;transform:translateX(-50%) scaleY(1.1);">14</div>
<div class="t" style="top:752.07px;font-size:9.0px;color:#111;left:142.70px;transform:scaleY(1.1);font-weight:bold;">tRDRD SCL</div>
<div class="a" style="left:198.10px;top:743.27px;width:25.30px;height:16.00px;background:#ececec;border:1px solid #d4d4d4;"></div>
<div class="t" style="top:751.27px;font-size:8.8px;color:#333;left:210.80px;transform:translateX(-50%) scaleY(1.1);">4</div>
<div class="t" style="top:776.04px;font-size:9.0px;color:#111;left:35.90px;transform:scaleY(1.1);font-weight:bold;">tRCDRD</div>
<div class="a" style="left:89.30px;top:767.24px;width:25.30px;height:16.00px;background:#ececec;border:1px solid #d4d4d4;"></div>
<div class="t" style="top:775.24px;font-size:8.8px;color:#333;left:102.00px;transform:translateX(-50%) scaleY(1.1);">14</div>
<div class="t" style="top:776.04px;font-size:9.0px;color:#111;left:142.70px;transform:scaleY(1.1);font-weight:bold;">tWRWR SCL</div>
<div class="a" style="left:198.10px;top:767.24px;width:25.30px;height:16.00px;background:#ececec;border:1px solid #d4d4d4;"></div>
<div class="t" style="top:775.24px;font-size:8.8px;color:#333;left:210.80px;transform:translateX(-50%) scaleY(1.1);">4</div>
<div class="t" style="top:800.01px;font-size:9.0px;color:#111;left:35.90px;transform:scaleY(1.1);font-weight:bold;">tRP</div>
<div class="a" style="left:89.30px;top:791.21px;width:25.30px;height:16.00px;background:#ececec;border:1px solid #d4d4d4;"></div>
<div class="t" style="top:799.21px;font-size:8.8px;color:#333;left:102.00px;transform:translateX(-50%) scaleY(1.1);">14</div>
<div class="t" style="top:800.01px;font-size:9.0px;color:#111;left:142.70px;transform:scaleY(1.1);font-weight:bold;">tRFC</div>
<div class="a" style="left:198.10px;top:791.21px;width:25.30px;height:16.00px;background:#ececec;border:1px solid #d4d4d4;"></div>
<div class="t" style="top:799.21px;font-size:8.8px;color:#333;left:210.80px;transform:translateX(-50%) scaleY(1.1);">240</div>
<div class="t" style="top:823.98px;font-size:9.0px;color:#111;left:35.90px;transform:scaleY(1.1);font-weight:bold;">tRAS</div>
<div class="a" style="left:89.30px;top:815.18px;width:25.30px;height:16.00px;background:#ececec;border:1px solid #d4d4d4;"></div>
<div class="t" style="top:823.18px;font-size:8.8px;color:#333;left:102.00px;transform:translateX(-50%) scaleY(1.1);">26</div>
<div class="t" style="top:823.98px;font-size:9.0px;color:#111;left:142.70px;transform:scaleY(1.1);font-weight:bold;">tCWL</div>
<div class="a" style="left:198.10px;top:815.18px;width:25.30px;height:16.00px;background:#ececec;border:1px solid #d4d4d4;"></div>
<div class="t" style="top:823.18px;font-size:8.8px;color:#333;left:210.80px;transform:translateX(-50%) scaleY(1.1);">14</div>
<div class="t" style="top:847.95px;font-size:9.0px;color:#111;left:35.90px;transform:scaleY(1.1);font-weight:bold;">tRC</div>
<div class="a" style="left:89.30px;top:839.15px;width:25.30px;height:16.00px;background:#ececec;border:1px solid #d4d4d4;"></div>
<div class="t" style="top:847.15px;font-size:8.8px;color:#333;left:102.00px;transform:translateX(-50%) scaleY(1.1);">40</div>
<div class="t" style="top:847.95px;font-size:9.0px;color:#111;left:142.70px;transform:scaleY(1.1);font-weight:bold;">tRTP</div>
<div class="a" style="left:198.10px;top:839.15px;width:25.30px;height:16.00px;background:#ececec;border:1px solid #d4d4d4;"></div>
<div class="t" style="top:847.15px;font-size:8.8px;color:#333;left:210.80px;transform:translateX(-50%) scaleY(1.1);">6</div>
<div class="t" style="top:871.92px;font-size:9.0px;color:#111;left:35.90px;transform:scaleY(1.1);font-weight:bold;">tRRDS</div>
<div class="a" style="left:89.30px;top:863.12px;width:25.30px;height:16.00px;background:#ececec;border:1px solid #d4d4d4;"></div>
<div class="t" style="top:871.12px;font-size:8.8px;color:#333;left:102.00px;transform:translateX(-50%) scaleY(1.1);">4</div>
<div class="t" style="top:871.92px;font-size:9.0px;color:#111;left:142.70px;transform:scaleY(1.1);font-weight:bold;">tRDWR</div>
<div class="a" style="left:198.10px;top:863.12px;width:25.30px;height:16.00px;background:#ececec;border:1px solid #d4d4d4;"></div>
<div class="t" style="top:871.12px;font-size:8.8px;color:#333;left:210.80px;transform:translateX(-50%) scaleY(1.1);">8</div>
<div class="t" style="top:895.89px;font-size:9.0px;color:#111;left:35.90px;transform:scaleY(1.1);font-weight:bold;">tRRDL</div>
<div class="a" style="left:89.30px;top:887.09px;width:25.30px;height:16.00px;background:#ececec;border:1px solid #d4d4d4;"></div>
<div class="t" style="top:895.09px;font-size:8.8px;color:#333;left:102.00px;transform:translateX(-50%) scaleY(1.1);">4</div>
<div class="t" style="top:895.89px;font-size:9.0px;color:#111;left:142.70px;transform:scaleY(1.1);font-weight:bold;">tWRRD</div>
<div class="a" style="left:198.10px;top:887.09px;width:25.30px;height:16.00px;background:#ececec;border:1px solid #d4d4d4;"></div>
<div class="t" style="top:895.09px;font-size:8.8px;color:#333;left:210.80px;transform:translateX(-50%) scaleY(1.1);">3</div>
<div class="t" style="top:919.86px;font-size:9.0px;color:#111;left:35.90px;transform:scaleY(1.1);font-weight:bold;">tFAW</div>
<div class="a" style="left:89.30px;top:911.06px;width:25.30px;height:16.00px;background:#ececec;border:1px solid #d4d4d4;"></div>
<div class="t" style="top:919.06px;font-size:8.8px;color:#333;left:102.00px;transform:translateX(-50%) scaleY(1.1);">16</div>
<div class="t" style="top:919.86px;font-size:9.0px;color:#111;left:142.70px;transform:scaleY(1.1);font-weight:bold;">tCKE</div>
<div class="a" style="left:198.10px;top:911.06px;width:25.30px;height:16.00px;background:#ececec;border:1px solid #d4d4d4;"></div>
<div class="t" style="top:919.06px;font-size:8.8px;color:#333;left:210.80px;transform:translateX(-50%) scaleY(1.1);">9</div>
<div class="t" style="top:943.83px;font-size:9.0px;color:#111;left:35.90px;transform:scaleY(1.1);font-weight:bold;">tWTRS</div>
<div class="a" style="left:89.30px;top:935.03px;width:25.30px;height:16.00px;background:#ececec;border:1px solid #d4d4d4;"></div>
<div class="t" style="top:943.03px;font-size:8.8px;color:#333;left:102.00px;transform:translateX(-50%) scaleY(1.1);">4</div>
<div class="t" style="top:943.83px;font-size:9.0px;color:#111;left:142.70px;transform:scaleY(1.1);font-weight:bold;">GDM</div>
<div class="a" style="left:182.00px;top:935.03px;width:40.80px;height:16.00px;background:#ececec;border:1px solid #d4d4d4;"></div>
<div class="t" style="top:943.03px;font-size:8.8px;color:#333;left:202.40px;transform:translateX(-50%) scaleY(1.1);">Disabled</div>
<div class="t" style="top:967.80px;font-size:9.0px;color:#111;left:35.90px;transform:scaleY(1.1);font-weight:bold;">tWTRL</div>
<div class="a" style="left:89.30px;top:959.00px;width:25.30px;height:16.00px;background:#ececec;border:1px solid #d4d4d4;"></div>
<div class="t" style="top:967.00px;font-size:8.8px;color:#333;left:102.00px;transform:translateX(-50%) scaleY(1.1);">10</div>
<div class="t" style="top:967.80px;font-size:9.0px;color:#111;left:142.70px;transform:scaleY(1.1);font-weight:bold;">tCR</div>
<div class="a" style="left:198.10px;top:959.00px;width:25.30px;height:16.00px;background:#ececec;border:1px solid #d4d4d4;"></div>
<div class="t" style="top:967.00px;font-size:8.8px;color:#333;left:210.80px;transform:translateX(-50%) scaleY(1.1);">1T</div>
<div class="a" style="left:251.40px;top:531.40px;width:175.00px;height:451.00px;background:#ffffff;border:1px solid #a8a8a8;border-right:1.5px solid #a0a0a0;"></div>
<div class="t" style="top:541.90px;font-size:7.8px;color:#222;left:260.00px;transform:scaleY(1.1);">Threads</div>
<div class="t" style="top:541.90px;font-size:7.8px;color:#222;left:302.80px;transform:scaleY(1.1);">Task scope (%)</div>
<div class="t" style="top:541.90px;font-size:7.8px;color:#222;right:1518.00px;transform:scaleY(1.1);">Errors</div>
<div class="a" style="left:294.40px;top:533.00px;width:1.00px;height:17.00px;background:#f0f0f0;"></div>
<div class="a" style="left:361.00px;top:533.00px;width:1.00px;height:17.00px;background:#f0f0f0;"></div>
<div class="a" style="left:407.00px;top:533.00px;width:1.00px;height:17.00px;background:#f0f0f0;"></div>
<div class="t" style="top:557.00px;font-size:8.3px;color:#222;left:257.00px;transform:scaleY(1.1);">All</div>
<div class="t" style="top:557.00px;font-size:8.3px;color:#222;right:1563.00px;transform:scaleY(1.1);">9743.3</div>
<div class="t" style="top:557.00px;font-size:8.3px;color:#222;right:1517.20px;transform:scaleY(1.1);">0</div>
<div class="t" style="top:569.75px;font-size:8.3px;color:#222;left:257.00px;transform:scaleY(1.1);">1</div>
<div class="t" style="top:569.75px;font-size:8.3px;color:#222;right:1563.00px;transform:scaleY(1.1);">304.2</div>
<div class="t" style="top:569.75px;font-size:8.3px;color:#222;right:1517.20px;transform:scaleY(1.1);">0</div>
<div class="t" style="top:582.50px;font-size:8.3px;color:#222;left:257.00px;transform:scaleY(1.1);">2</div>
<div class="t" style="top:582.50px;font-size:8.3px;color:#222;right:1563.00px;transform:scaleY(1.1);">305.2</div>
<div class="t" style="top:582.50px;font-size:8.3px;color:#222;right:1517.20px;transform:scaleY(1.1);">0</div>
<div class="t" style="top:595.25px;font-size:8.3px;color:#222;left:257.00px;transform:scaleY(1.1);">3</div>
<div class="t" style="top:595.25px;font-size:8.3px;color:#222;right:1563.00px;transform:scaleY(1.1);">303.1</div>
<div class="t" style="top:595.25px;font-size:8.3px;color:#222;right:1517.20px;transform:scaleY(1.1);">0</div>
<div class="t" style="top:608.00px;font-size:8.3px;color:#222;left:257.00px;transform:scaleY(1.1);">4</div>
<div class="t" style="top:608.00px;font-size:8.3px;color:#222;right:1563.00px;transform:scaleY(1.1);">306.1</div>
<div class="t" style="top:608.00px;font-size:8.3px;color:#222;right:1517.20px;transform:scaleY(1.1);">0</div>
<div class="t" style="top:620.75px;font-size:8.3px;color:#222;left:257.00px;transform:scaleY(1.1);">5</div>
<div class="t" style="top:620.75px;font-size:8.3px;color:#222;right:1563.00px;transform:scaleY(1.1);">305.4</div>
<div class="t" style="top:620.75px;font-size:8.3px;color:#222;right:1517.20px;transform:scaleY(1.1);">0</div>
<div class="t" style="top:633.50px;font-size:8.3px;color:#222;left:257.00px;transform:scaleY(1.1);">6</div>
<div class="t" style="top:633.50px;font-size:8.3px;color:#222;right:1563.00px;transform:scaleY(1.1);">305.9</div>
<div class="t" style="top:633.50px;font-size:8.3px;color:#222;right:1517.20px;transform:scaleY(1.1);">0</div>
<div class="t" style="top:646.25px;font-size:8.3px;color:#222;left:257.00px;transform:scaleY(1.1);">7</div>
<div class="t" style="top:646.25px;font-size:8.3px;color:#222;right:1563.00px;transform:scaleY(1.1);">303.7</div>
<div class="t" style="top:646.25px;font-size:8.3px;color:#222;right:1517.20px;transform:scaleY(1.1);">0</div>
<div class="t" style="top:659.00px;font-size:8.3px;color:#222;left:257.00px;transform:scaleY(1.1);">8</div>
<div class="t" style="top:659.00px;font-size:8.3px;color:#222;right:1563.00px;transform:scaleY(1.1);">300.1</div>
<div class="t" style="top:659.00px;font-size:8.3px;color:#222;right:1517.20px;transform:scaleY(1.1);">0</div>
<div class="t" style="top:671.75px;font-size:8.3px;color:#222;left:257.00px;transform:scaleY(1.1);">9</div>
<div class="t" style="top:671.75px;font-size:8.3px;color:#222;right:1563.00px;transform:scaleY(1.1);">300.7</div>
<div class="t" style="top:671.75px;font-size:8.3px;color:#222;right:1517.20px;transform:scaleY(1.1);">0</div>
<div class="t" style="top:684.50px;font-size:8.3px;color:#222;left:257.00px;transform:scaleY(1.1);">10</div>
<div class="t" style="top:684.50px;font-size:8.3px;color:#222;right:1563.00px;transform:scaleY(1.1);">305</div>
<div class="t" style="top:684.50px;font-size:8.3px;color:#222;right:1517.20px;transform:scaleY(1.1);">0</div>
<div class="t" style="top:697.25px;font-size:8.3px;color:#222;left:257.00px;transform:scaleY(1.1);">11</div>
<div class="t" style="top:697.25px;font-size:8.3px;color:#222;right:1563.00px;transform:scaleY(1.1);">304.7</div>
<div class="t" style="top:697.25px;font-size:8.3px;color:#222;right:1517.20px;transform:scaleY(1.1);">0</div>
<div class="t" style="top:710.00px;font-size:8.3px;color:#222;left:257.00px;transform:scaleY(1.1);">12</div>
<div class="t" style="top:710.00px;font-size:8.3px;color:#222;right:1563.00px;transform:scaleY(1.1);">304.9</div>
<div class="t" style="top:710.00px;font-size:8.3px;color:#222;right:1517.20px;transform:scaleY(1.1);">0</div>
<div class="t" style="top:722.75px;font-size:8.3px;color:#222;left:257.00px;transform:scaleY(1.1);">13</div>
<div class="t" style="top:722.75px;font-size:8.3px;color:#222;right:1563.00px;transform:scaleY(1.1);">301.6</div>
<div class="t" style="top:722.75px;font-size:8.3px;color:#222;right:1517.20px;transform:scaleY(1.1);">0</div>
<div class="t" style="top:735.50px;font-size:8.3px;color:#222;left:257.00px;transform:scaleY(1.1);">14</div>
<div class="t" style="top:735.50px;font-size:8.3px;color:#222;right:1563.00px;transform:scaleY(1.1);">304.3</div>
<div class="t" style="top:735.50px;font-size:8.3px;color:#222;right:1517.20px;transform:scaleY(1.1);">0</div>
<div class="t" style="top:748.25px;font-size:8.3px;color:#222;left:257.00px;transform:scaleY(1.1);">15</div>
<div class="t" style="top:748.25px;font-size:8.3px;color:#222;right:1563.00px;transform:scaleY(1.1);">304.3</div>
<div class="t" style="top:748.25px;font-size:8.3px;color:#222;right:1517.20px;transform:scaleY(1.1);">0</div>
<div class="t" style="top:761.00px;font-size:8.3px;color:#222;left:257.00px;transform:scaleY(1.1);">16</div>
<div class="t" style="top:761.00px;font-size:8.3px;color:#222;right:1563.00px;transform:scaleY(1.1);">304.9</div>
<div class="t" style="top:761.00px;font-size:8.3px;color:#222;right:1517.20px;transform:scaleY(1.1);">0</div>
<div class="t" style="top:773.75px;font-size:8.3px;color:#222;left:257.00px;transform:scaleY(1.1);">17</div>
<div class="t" style="top:773.75px;font-size:8.3px;color:#222;right:1563.00px;transform:scaleY(1.1);">304.2</div>
<div class="t" style="top:773.75px;font-size:8.3px;color:#222;right:1517.20px;transform:scaleY(1.1);">0</div>
<div class="t" style="top:786.50px;font-size:8.3px;color:#222;left:257.00px;transform:scaleY(1.1);">18</div>
<div class="t" style="top:786.50px;font-size:8.3px;color:#222;right:1563.00px;transform:scaleY(1.1);">306.4</div>
<div class="t" style="top:786.50px;font-size:8.3px;color:#222;right:1517.20px;transform:scaleY(1.1);">0</div>
<div class="t" style="top:799.25px;font-size:8.3px;color:#222;left:257.00px;transform:scaleY(1.1);">19</div>
<div class="t" style="top:799.25px;font-size:8.3px;color:#222;right:1563.00px;transform:scaleY(1.1);">304.9</div>
<div class="t" style="top:799.25px;font-size:8.3px;color:#222;right:1517.20px;transform:scaleY(1.1);">0</div>
<div class="t" style="top:812.00px;font-size:8.3px;color:#222;left:257.00px;transform:scaleY(1.1);">20</div>
<div class="t" style="top:812.00px;font-size:8.3px;color:#222;right:1563.00px;transform:scaleY(1.1);">306.8</div>
<div class="t" style="top:812.00px;font-size:8.3px;color:#222;right:1517.20px;transform:scaleY(1.1);">0</div>
<div class="t" style="top:824.75px;font-size:8.3px;color:#222;left:257.00px;transform:scaleY(1.1);">21</div>
<div class="t" style="top:824.75px;font-size:8.3px;color:#222;right:1563.00px;transform:scaleY(1.1);">305.9</div>
<div class="t" style="top:824.75px;font-size:8.3px;color:#222;right:1517.20px;transform:scaleY(1.1);">0</div>
<div class="t" style="top:837.50px;font-size:8.3px;color:#222;left:257.00px;transform:scaleY(1.1);">22</div>
<div class="t" style="top:837.50px;font-size:8.3px;color:#222;right:1563.00px;transform:scaleY(1.1);">301.2</div>
<div class="t" style="top:837.50px;font-size:8.3px;color:#222;right:1517.20px;transform:scaleY(1.1);">0</div>
<div class="t" style="top:850.25px;font-size:8.3px;color:#222;left:257.00px;transform:scaleY(1.1);">23</div>
<div class="t" style="top:850.25px;font-size:8.3px;color:#222;right:1563.00px;transform:scaleY(1.1);">304.8</div>
<div class="t" style="top:850.25px;font-size:8.3px;color:#222;right:1517.20px;transform:scaleY(1.1);">0</div>
<div class="t" style="top:863.00px;font-size:8.3px;color:#222;left:257.00px;transform:scaleY(1.1);">24</div>
<div class="t" style="top:863.00px;font-size:8.3px;color:#222;right:1563.00px;transform:scaleY(1.1);">305.8</div>
<div class="t" style="top:863.00px;font-size:8.3px;color:#222;right:1517.20px;transform:scaleY(1.1);">0</div>
<div class="t" style="top:875.75px;font-size:8.3px;color:#222;left:257.00px;transform:scaleY(1.1);">25</div>
<div class="t" style="top:875.75px;font-size:8.3px;color:#222;right:1563.00px;transform:scaleY(1.1);">306.2</div>
<div class="t" style="top:875.75px;font-size:8.3px;color:#222;right:1517.20px;transform:scaleY(1.1);">0</div>
<div class="t" style="top:888.50px;font-size:8.3px;color:#222;left:257.00px;transform:scaleY(1.1);">26</div>
<div class="t" style="top:888.50px;font-size:8.3px;color:#222;right:1563.00px;transform:scaleY(1.1);">304.8</div>
<div class="t" style="top:888.50px;font-size:8.3px;color:#222;right:1517.20px;transform:scaleY(1.1);">0</div>
<div class="t" style="top:901.25px;font-size:8.3px;color:#222;left:257.00px;transform:scaleY(1.1);">27</div>
<div class="t" style="top:901.25px;font-size:8.3px;color:#222;right:1563.00px;transform:scaleY(1.1);">304.6</div>
<div class="t" style="top:901.25px;font-size:8.3px;color:#222;right:1517.20px;transform:scaleY(1.1);">0</div>
<div class="t" style="top:914.00px;font-size:8.3px;color:#222;left:257.00px;transform:scaleY(1.1);">28</div>
<div class="t" style="top:914.00px;font-size:8.3px;color:#222;right:1563.00px;transform:scaleY(1.1);">305.1</div>
<div class="t" style="top:914.00px;font-size:8.3px;color:#222;right:1517.20px;transform:scaleY(1.1);">0</div>
<div class="t" style="top:926.75px;font-size:8.3px;color:#222;left:257.00px;transform:scaleY(1.1);">29</div>
<div class="t" style="top:926.75px;font-size:8.3px;color:#222;right:1563.00px;transform:scaleY(1.1);">304.9</div>
<div class="t" style="top:926.75px;font-size:8.3px;color:#222;right:1517.20px;transform:scaleY(1.1);">0</div>
<div class="t" style="top:939.50px;font-size:8.3px;color:#222;left:257.00px;transform:scaleY(1.1);">30</div>
<div class="t" style="top:939.50px;font-size:8.3px;color:#222;right:1563.00px;transform:scaleY(1.1);">304.8</div>
<div class="t" style="top:939.50px;font-size:8.3px;color:#222;right:1517.20px;transform:scaleY(1.1);">0</div>
<div class="t" style="top:952.25px;font-size:8.3px;color:#222;left:257.00px;transform:scaleY(1.1);">31</div>
<div class="t" style="top:952.25px;font-size:8.3px;color:#222;right:1563.00px;transform:scaleY(1.1);">304.6</div>
<div class="t" style="top:952.25px;font-size:8.3px;color:#222;right:1517.20px;transform:scaleY(1.1);">0</div>
<div class="t" style="top:965.00px;font-size:8.3px;color:#222;left:257.00px;transform:scaleY(1.1);">32</div>
<div class="t" style="top:965.00px;font-size:8.3px;color:#222;right:1563.00px;transform:scaleY(1.1);">304.2</div>
<div class="t" style="top:965.00px;font-size:8.3px;color:#222;right:1517.20px;transform:scaleY(1.1);">0</div>
<div class="a" style="left:430.90px;top:536.40px;width:280.00px;height:69.50px;border:1px solid #dcdcdc;"></div>
<div class="a" style="left:435.00px;top:533.00px;width:88.00px;height:6.00px;background:#fff;"></div>
<div class="t" style="top:536.70px;font-size:7.7px;color:#d2214f;left:437.60px;transform:scaleY(1.1);">Results : Memtest mode</div>
<div class="t" style="top:553.50px;font-size:13.4px;color:#111;left:445.10px;font-weight:bold;">Time</div>
<div class="t" style="top:553.50px;font-size:13.8px;color:#c8163f;left:542.60px;">140 minutes</div>
<div class="a" style="left:430.90px;top:615.00px;width:280.00px;height:31.00px;border:1px solid #dcdcdc;"></div>
<div class="a" style="left:434.00px;top:612.00px;width:80.00px;height:6.00px;background:#fff;"></div>
<div class="t" style="top:615.30px;font-size:7.7px;color:#d2214f;left:436.80px;transform:scaleY(1.1);">Core Latency Results</div>
<div class="a" style="left:430.90px;top:875.00px;width:215.40px;height:104.30px;border:1px solid #dcdcdc;"></div>
<div class="a" style="left:435.00px;top:872.00px;width:44.00px;height:6.00px;background:#fff;"></div>
<div class="t" style="top:875.30px;font-size:7.7px;color:#d2214f;left:437.60px;transform:scaleY(1.1);">System info</div>
<div class="t" style="top:894.60px;font-size:8.4px;color:#222;left:443.50px;transform:scaleY(1.1);">User Erlend</div>
<div class="t" style="top:894.60px;font-size:8.4px;color:#222;left:546.30px;transform:scaleY(1.1);">Windows 10.0.19042</div>
<div class="t" style="top:909.05px;font-size:8.4px;color:#222;left:443.50px;transform:scaleY(1.1);">AMD Ryzen 9 5950X 16-Core Processor</div>
<div class="t" style="top:923.50px;font-size:8.4px;color:#222;left:443.50px;transform:scaleY(1.1);">Cores 16</div>
<div class="t" style="top:937.95px;font-size:8.4px;color:#222;left:443.50px;transform:scaleY(1.1);">G Skill Intl F4-3600C16-8GTZN32GB</div>
<div class="t" style="top:952.40px;font-size:8.4px;color:#222;left:443.50px;transform:scaleY(1.1);">DRAM speed 3800 MHz</div>
<div class="t" style="top:966.85px;font-size:8.4px;color:#222;left:443.50px;transform:scaleY(1.1);">MEMbench 0.8 beta 4</div>
<div class="t" style="top:966.85px;font-size:8.4px;color:#222;left:548.10px;transform:scaleY(1.1);">05/17/2021 21:50:16</div>
<div class="t" style="top:923.50px;font-size:8.4px;color:#222;left:490.70px;transform:scaleY(1.1);">L3 Cache (KB)</div>
<div class="t" style="top:923.50px;font-size:8.4px;color:#222;left:558.90px;transform:scaleY(1.1);">65536</div>
<div class="a" style="left:651.50px;top:875.00px;width:60.00px;height:104.30px;border:1px solid #dcdcdc;"></div>
<div class="a" style="left:655.00px;top:872.00px;width:60.00px;height:6.00px;background:#fff;"></div>
<div class="t" style="top:875.30px;font-size:7.7px;color:#d2214f;left:657.80px;transform:scaleY(1.1);">Memory status</div>
<div class="t" style="top:894.60px;font-size:8.4px;color:#222;left:663.30px;transform:scaleY(1.1);">PageFile (MB)</div>
<div class="t" style="top:909.05px;font-size:8.4px;color:#222;left:663.30px;transform:scaleY(1.1);">Free Virtual</div>
<div class="t" style="top:923.50px;font-size:8.4px;color:#222;left:663.30px;transform:scaleY(1.1);">Free Physical</div>
<div class="t" style="top:937.95px;font-size:8.4px;color:#222;left:663.30px;transform:scaleY(1.1);">Total RAM</div>
<div class="a" style="left:13.75px;top:995.50px;width:219.25px;height:34.00px;background:#7c3f98;"></div>
<div class="t" style="top:1013.00px;font-size:13.6px;color:#ffffff;left:123.40px;transform:translateX(-50%) scaleY(1.1);font-weight:bold;">Run</div>
<div class="a" style="left:236.25px;top:995.50px;width:88.25px;height:34.00px;background:#d0103d;"></div>
<div class="t" style="top:1013.00px;font-size:13.6px;color:#ffffff;left:280.40px;transform:translateX(-50%) scaleY(1.1);font-weight:bold;">Stop</div>
<div class="a" style="left:328.00px;top:995.50px;width:88.00px;height:34.00px;background:#f27c33;"></div>
<div class="t" style="top:1005.80px;font-size:10.0px;color:#ffffff;left:372.00px;transform:translateX(-50%) scaleY(1.1);font-weight:bold;">Draw</div>
<div class="t" style="top:1020.30px;font-size:10.0px;color:#ffffff;left:372.00px;transform:translateX(-50%) scaleY(1.1);font-weight:bold;">Latency Graph</div>
<div class="a" style="left:420.40px;top:995.40px;width:87.90px;height:15.70px;background:#5a5a5a;"></div>
<div class="t" style="top:1003.60px;font-size:10.2px;color:#f0f0f0;left:464.30px;transform:translateX(-50%) scaleY(1.1);">Max RAM</div>
<div class="a" style="left:420.40px;top:1014.40px;width:87.90px;height:15.60px;background:#5a5a5a;"></div>
<div class="t" style="top:1022.60px;font-size:10.2px;color:#f0f0f0;left:464.30px;transform:translateX(-50%) scaleY(1.1);">Clear Standby</div>
<div class="a" style="left:512.40px;top:995.40px;width:88.00px;height:15.70px;background:#5a5a5a;"></div>
<div class="t" style="top:1003.60px;font-size:10.2px;color:#f0f0f0;left:556.40px;transform:translateX(-50%) scaleY(1.1);">Save result 1</div>
<div class="a" style="left:512.40px;top:1014.40px;width:88.00px;height:15.60px;background:#5a5a5a;"></div>
<div class="t" style="top:1022.60px;font-size:10.2px;color:#f0f0f0;left:556.40px;transform:translateX(-50%) scaleY(1.1);">Save result 2</div>
<div class="a" style="left:604.30px;top:995.40px;width:87.70px;height:34.60px;background:#5a5a5a;"></div>
<div class="t" style="top:1013.00px;font-size:9.3px;color:#f0f0f0;left:648.10px;transform:translateX(-50%) scaleY(1.1);">Statistics</div>
<div class="a" style="left:696.30px;top:995.40px;width:6.20px;height:34.60px;background:#5a5a5a;"></div>
<div class="a" style="left:702.30px;top:0.00px;width:512.50px;height:1049.50px;background:#1a60b0;"></div>
<div class="a" style="left:703.20px;top:2.60px;width:510.80px;height:23.00px;background:#ffffff;"></div>
<div class="a" style="left:708.70px;top:9.50px;width:11.00px;height:9.50px;background:#f4f4f4;border:1px solid #9a9a9a;"></div>
<div class="a" style="left:710.00px;top:11.50px;width:3.50px;height:6.00px;background:#3a9a4a;"></div>
<div class="t" style="top:13.60px;font-size:9.15px;color:#222;left:724.40px;">y-cruncher - Shortcut</div>
<div class="a" style="left:1125.00px;top:13.60px;width:9.00px;height:0.90px;background:#333;"></div>
<div class="a" style="left:1158.50px;top:9.50px;width:8.00px;height:8.00px;border:1px solid #333;"></div>
<svg style="left:1192.5px;top:9px" width="9" height="9"><path d="M0 0L9 9M9 0L0 9" stroke="#333" stroke-width="1"/></svg>
<div class="a" style="left:703.20px;top:25.60px;width:498.00px;height:1023.50px;background:#0c0c0c;"></div>
<div class="a" style="left:1201.20px;top:25.60px;width:12.80px;height:1023.50px;background:#f0f0f0;"></div>
<div class="a" style="left:1202.70px;top:65.00px;width:10.80px;height:13.60px;background:#cdcdcd;"></div>
<svg style="left:1204.5px;top:30.5px" width="7" height="4"><path d="M0 4L3.5 0.5L7 4" stroke="#606060" fill="none" stroke-width="1.1"/></svg>
<svg style="left:1204.5px;top:1040px" width="7" height="4"><path d="M0 0L3.5 3.5L7 0" stroke="#606060" fill="none" stroke-width="1.1"/></svg>
<div class="a m" style="left:703.3px;top:25.6px;width:498px;height:1023px;overflow:hidden;font-size:10px;line-height:12px;white-space:pre;"><div style="height:1.9px"></div><span style="color:#cccccc">Running N64: </span><span style="color:#1cb818">Passed</span><span style="color:#cccccc">  Test Time:  </span><span style="color:#5cb8c0">123.120 seconds  ( 2.052 minutes )</span>
<span style="color:#cccccc">Running HNT: </span><span style="color:#1cb818">Passed</span><span style="color:#cccccc">  Test Time:  </span><span style="color:#5cb8c0">123.161 seconds  ( 2.053 minutes )</span>
<span style="color:#cccccc">Running VST: </span><span style="color:#1cb818">Passed</span><span style="color:#cccccc">  Test Time:  </span><span style="color:#5cb8c0">121.390 seconds  ( 2.023 minutes )</span>
<span style="color:#cccccc">Running C17: </span><span style="color:#1cb818">Passed</span><span style="color:#cccccc">  Test Time:  </span><span style="color:#5cb8c0">122.441 seconds  ( 2.041 minutes )</span>

<span style="color:#cccccc">Iteration: </span><span style="color:#f9f1a5">1</span><span style="color:#cccccc">  Total Elapsed Time: </span><span style="color:#1cb818">1099.685 seconds  ( 18.328 minutes )</span>
<span style="color:#cccccc">Running BKT: </span><span style="color:#1cb818">Passed</span><span style="color:#cccccc">  Test Time:  </span><span style="color:#5cb8c0">120.009 seconds  ( 2.000 minutes )</span>
<span style="color:#cccccc">Running BBP: </span><span style="color:#1cb818">Passed</span><span style="color:#cccccc">  Test Time:  </span><span style="color:#5cb8c0">122.960 seconds  ( 2.049 minutes )</span>
<span style="color:#cccccc">Running SFT: </span><span style="color:#1cb818">Passed</span><span style="color:#cccccc">  Test Time:  </span><span style="color:#5cb8c0">120.033 seconds  ( 2.001 minutes )</span>
<span style="color:#cccccc">Running FFT: </span><span style="color:#1cb818">Passed</span><span style="color:#cccccc">  Test Time:  </span><span style="color:#5cb8c0">120.795 seconds  ( 2.013 minutes )</span>
<span style="color:#cccccc">Running N32: </span><span style="color:#1cb818">Passed</span><span style="color:#cccccc">  Test Time:  </span><span style="color:#5cb8c0">122.123 seconds  ( 2.035 minutes )</span>
<span style="color:#cccccc">Running N64: </span><span style="color:#1cb818">Passed</span><span style="color:#cccccc">  Test Time:  </span><span style="color:#5cb8c0">122.323 seconds  ( 2.039 minutes )</span>
<span style="color:#cccccc">Running HNT: </span><span style="color:#1cb818">Passed</span><span style="color:#cccccc">  Test Time:  </span><span style="color:#5cb8c0">122.465 seconds  ( 2.041 minutes )</span>
<span style="color:#cccccc">Running VST: </span><span style="color:#1cb818">Passed</span><span style="color:#cccccc">  Test Time:  </span><span style="color:#5cb8c0">121.376 seconds  ( 2.023 minutes )</span>
<span style="color:#cccccc">Running C17: </span><span style="color:#1cb818">Passed</span><span style="color:#cccccc">  Test Time:  </span><span style="color:#5cb8c0">122.448 seconds  ( 2.041 minutes )</span>

<span style="color:#cccccc">Iteration: </span><span style="color:#f9f1a5">2</span><span style="color:#cccccc">  Total Elapsed Time: </span><span style="color:#1cb818">2194.222 seconds  ( 36.570 minutes )</span>
<span style="color:#cccccc">Running BKT: </span><span style="color:#1cb818">Passed</span><span style="color:#cccccc">  Test Time:  </span><span style="color:#5cb8c0">120.005 seconds  ( 2.000 minutes )</span>
<span style="color:#cccccc">Running BBP: </span><span style="color:#1cb818">Passed</span><span style="color:#cccccc">  Test Time:  </span><span style="color:#5cb8c0">123.053 seconds  ( 2.051 minutes )</span>
<span style="color:#cccccc">Running SFT: </span><span style="color:#1cb818">Passed</span><span style="color:#cccccc">  Test Time:  </span><span style="color:#5cb8c0">120.022 seconds  ( 2.000 minutes )</span>
<span style="color:#cccccc">Running FFT: </span><span style="color:#1cb818">Passed</span><span style="color:#cccccc">  Test Time:  </span><span style="color:#5cb8c0">120.703 seconds  ( 2.012 minutes )</span>
<span style="color:#cccccc">Running N32: </span><span style="color:#1cb818">Passed</span><span style="color:#cccccc">  Test Time:  </span><span style="color:#5cb8c0">121.957 seconds  ( 2.033 minutes )</span>
<span style="color:#cccccc">Running N64: </span><span style="color:#1cb818">Passed</span><span style="color:#cccccc">  Test Time:  </span><span style="color:#5cb8c0">122.513 seconds  ( 2.042 minutes )</span>
<span style="color:#cccccc">Running HNT: </span><span style="color:#1cb818">Passed</span><span style="color:#cccccc">  Test Time:  </span><span style="color:#5cb8c0">122.154 seconds  ( 2.036 minutes )</span>
<span style="color:#cccccc">Running VST: </span><span style="color:#1cb818">Passed</span><span style="color:#cccccc">  Test Time:  </span><span style="color:#5cb8c0">121.273 seconds  ( 2.021 minutes )</span>
<span style="color:#cccccc">Running C17: </span><span style="color:#1cb818">Passed</span><span style="color:#cccccc">  Test Time:  </span><span style="color:#5cb8c0">122.842 seconds  ( 2.047 minutes )</span>

<span style="color:#cccccc">Iteration: </span><span style="color:#f9f1a5">3</span><span style="color:#cccccc">  Total Elapsed Time: </span><span style="color:#1cb818">3288.752 seconds  ( 54.813 minutes )</span>
<span style="color:#cccccc">Running BKT: </span><span style="color:#1cb818">Passed</span><span style="color:#cccccc">  Test Time:  </span><span style="color:#5cb8c0">120.015 seconds  ( 2.000 minutes )</span>
<span style="color:#cccccc">Running BBP: </span><span style="color:#1cb818">Passed</span><span style="color:#cccccc">  Test Time:  </span><span style="color:#5cb8c0">123.011 seconds  ( 2.050 minutes )</span>
<span style="color:#cccccc">Running SFT: </span><span style="color:#1cb818">Passed</span><span style="color:#cccccc">  Test Time:  </span><span style="color:#5cb8c0">120.008 seconds  ( 2.000 minutes )</span>
<span style="color:#cccccc">Running FFT: </span><span style="color:#1cb818">Passed</span><span style="color:#cccccc">  Test Time:  </span><span style="color:#5cb8c0">120.649 seconds  ( 2.011 minutes )</span>
<span style="color:#cccccc">Running N32: </span><span style="color:#1cb818">Passed</span><span style="color:#cccccc">  Test Time:  </span><span style="color:#5cb8c0">122.062 seconds  ( 2.034 minutes )</span>
<span style="color:#cccccc">Running N64: </span><span style="color:#1cb818">Passed</span><span style="color:#cccccc">  Test Time:  </span><span style="color:#5cb8c0">123.010 seconds  ( 2.050 minutes )</span>
<span style="color:#cccccc">Running HNT: </span><span style="color:#1cb818">Passed</span><span style="color:#cccccc">  Test Time:  </span><span style="color:#5cb8c0">122.186 seconds  ( 2.036 minutes )</span>
<span style="color:#cccccc">Running VST: </span><span style="color:#1cb818">Passed</span><span style="color:#cccccc">  Test Time:  </span><span style="color:#5cb8c0">121.417 seconds  ( 2.024 minutes )</span>
<span style="color:#cccccc">Running C17: </span><span style="color:#1cb818">Passed</span><span style="color:#cccccc">  Test Time:  </span><span style="color:#5cb8c0">122.189 seconds  ( 2.036 minutes )</span>

<span style="color:#cccccc">Iteration: </span><span style="color:#f9f1a5">4</span><span style="color:#cccccc">  Total Elapsed Time: </span><span style="color:#1cb818">4383.308 seconds  ( 73.055 minutes )</span>
<span style="color:#cccccc">Running BKT: </span><span style="color:#1cb818">Passed</span><span style="color:#cccccc">  Test Time:  </span><span style="color:#5cb8c0">120.034 seconds  ( 2.001 minutes )</span>
<span style="color:#cccccc">Running BBP: </span><span style="color:#1cb818">Passed</span><span style="color:#cccccc">  Test Time:  </span><span style="color:#5cb8c0">122.842 seconds  ( 2.047 minutes )</span>
<span style="color:#cccccc">Running SFT: </span><span style="color:#1cb818">Passed</span><span style="color:#cccccc">  Test Time:  </span><span style="color:#5cb8c0">120.022 seconds  ( 2.000 minutes )</span>
<span style="color:#cccccc">Running FFT: </span><span style="color:#1cb818">Passed</span><span style="color:#cccccc">  Test Time:  </span><span style="color:#5cb8c0">120.740 seconds  ( 2.012 minutes )</span>
<span style="color:#cccccc">Running N32: </span><span style="color:#1cb818">Passed</span><span style="color:#cccccc">  Test Time:  </span><span style="color:#5cb8c0">121.985 seconds  ( 2.033 minutes )</span>
<span style="color:#cccccc">Running N64: </span><span style="color:#1cb818">Passed</span><span style="color:#cccccc">  Test Time:  </span><span style="color:#5cb8c0">122.667 seconds  ( 2.044 minutes )</span>
<span style="color:#cccccc">Running HNT: </span><span style="color:#1cb818">Passed</span><span style="color:#cccccc">  Test Time:  </span><span style="color:#5cb8c0">122.833 seconds  ( 2.047 minutes )</span>
<span style="color:#cccccc">Running VST: </span><span style="color:#1cb818">Passed</span><span style="color:#cccccc">  Test Time:  </span><span style="color:#5cb8c0">121.100 seconds  ( 2.018 minutes )</span>
<span style="color:#cccccc">Running C17: </span><span style="color:#1cb818">Passed</span><span style="color:#cccccc">  Test Time:  </span><span style="color:#5cb8c0">122.453 seconds  ( 2.041 minutes )</span>

<span style="color:#cccccc">Iteration: </span><span style="color:#f9f1a5">5</span><span style="color:#cccccc">  Total Elapsed Time: </span><span style="color:#1cb818">5477.993 seconds  ( 91.300 minutes )</span>
<span style="color:#cccccc">Running BKT: </span><span style="color:#1cb818">Passed</span><span style="color:#cccccc">  Test Time:  </span><span style="color:#5cb8c0">120.014 seconds  ( 2.000 minutes )</span>
<span style="color:#cccccc">Running BBP: </span><span style="color:#1cb818">Passed</span><span style="color:#cccccc">  Test Time:  </span><span style="color:#5cb8c0">122.992 seconds  ( 2.050 minutes )</span>
<span style="color:#cccccc">Running SFT: </span><span style="color:#1cb818">Passed</span><span style="color:#cccccc">  Test Time:  </span><span style="color:#5cb8c0">120.017 seconds  ( 2.000 minutes )</span>
<span style="color:#cccccc">Running FFT: </span><span style="color:#1cb818">Passed</span><span style="color:#cccccc">  Test Time:  </span><span style="color:#5cb8c0">120.755 seconds  ( 2.013 minutes )</span>
<span style="color:#cccccc">Running N32: </span><span style="color:#1cb818">Passed</span><span style="color:#cccccc">  Test Time:  </span><span style="color:#5cb8c0">122.067 seconds  ( 2.034 minutes )</span>
<span style="color:#cccccc">Running N64: </span><span style="color:#1cb818">Passed</span><span style="color:#cccccc">  Test Time:  </span><span style="color:#5cb8c0">122.602 seconds  ( 2.043 minutes )</span>
<span style="color:#cccccc">Running HNT: </span><span style="color:#1cb818">Passed</span><span style="color:#cccccc">  Test Time:  </span><span style="color:#5cb8c0">122.499 seconds  ( 2.042 minutes )</span>
<span style="color:#cccccc">Running VST: </span><span style="color:#1cb818">Passed</span><span style="color:#cccccc">  Test Time:  </span><span style="color:#5cb8c0">121.407 seconds  ( 2.023 minutes )</span>
<span style="color:#cccccc">Running C17: </span><span style="color:#1cb818">Passed</span><span style="color:#cccccc">  Test Time:  </span><span style="color:#5cb8c0">122.196 seconds  ( 2.037 minutes )</span>

<span style="color:#cccccc">Iteration: </span><span style="color:#f9f1a5">6</span><span style="color:#cccccc">  Total Elapsed Time: </span><span style="color:#1cb818">6572.550 seconds  ( 109.543 minutes )</span>
<span style="color:#cccccc">Running BKT: </span><span style="color:#1cb818">Passed</span><span style="color:#cccccc">  Test Time:  </span><span style="color:#5cb8c0">120.022 seconds  ( 2.000 minutes )</span>
<span style="color:#cccccc">Running BBP: </span><span style="color:#1cb818">Passed</span><span style="color:#cccccc">  Test Time:  </span><span style="color:#5cb8c0">122.645 seconds  ( 2.044 minutes )</span>
<span style="color:#cccccc">Running SFT: </span><span style="color:#1cb818">Passed</span><span style="color:#cccccc">  Test Time:  </span><span style="color:#5cb8c0">120.001 seconds  ( 2.000 minutes )</span>
<span style="color:#cccccc">Running FFT: </span><span style="color:#1cb818">Passed</span><span style="color:#cccccc">  Test Time:  </span><span style="color:#5cb8c0">120.784 seconds  ( 2.013 minutes )</span>
<span style="color:#cccccc">Running N32: </span><span style="color:#1cb818">Passed</span><span style="color:#cccccc">  Test Time:  </span><span style="color:#5cb8c0">122.033 seconds  ( 2.034 minutes )</span>
<span style="color:#cccccc">Running N64: </span><span style="color:#1cb818">Passed</span><span style="color:#cccccc">  Test Time:  </span><span style="color:#5cb8c0">122.476 seconds  ( 2.041 minutes )</span>
<span style="color:#cccccc">Running HNT: </span><span style="color:#1cb818">Passed</span><span style="color:#cccccc">  Test Time:  </span><span style="color:#5cb8c0">123.084 seconds  ( 2.051 minutes )</span>
<span style="color:#cccccc">Running VST: </span><span style="color:#1cb818">Passed</span><span style="color:#cccccc">  Test Time:  </span><span style="color:#5cb8c0">121.478 seconds  ( 2.025 minutes )</span>
<span style="color:#cccccc">Running C17: </span><span style="color:#1cb818">Passed</span><span style="color:#cccccc">  Test Time:  </span><span style="color:#5cb8c0">122.503 seconds  ( 2.042 minutes )</span>

<span style="color:#cccccc">Iteration: </span><span style="color:#f9f1a5">7</span><span style="color:#cccccc">  Total Elapsed Time: </span><span style="color:#1cb818">7667.586 seconds  ( 2.130 hours )</span>
<span style="color:#cccccc">Running BKT: </span><span style="color:#1cb818">Passed</span><span style="color:#cccccc">  Test Time:  </span><span style="color:#5cb8c0">120.013 seconds  ( 2.000 minutes )</span>
<span style="color:#cccccc">Running BBP: </span><span style="color:#1cb818">Passed</span><span style="color:#cccccc">  Test Time:  </span><span style="color:#5cb8c0">122.577 seconds  ( 2.043 minutes )</span>
<span style="color:#cccccc">Running SFT: </span><span style="color:#1cb818">Passed</span><span style="color:#cccccc">  Test Time:  </span><span style="color:#5cb8c0">120.022 seconds  ( 2.000 minutes )</span>
<span style="color:#cccccc">Running FFT: </span><span style="color:#1cb818">Passed</span><span style="color:#cccccc">  Test Time:  </span><span style="color:#5cb8c0">120.846 seconds  ( 2.014 minutes )</span>
<span style="color:#cccccc">Running N32: </span><span style="color:#1cb818">Passed</span><span style="color:#cccccc">  Test Time:  </span><span style="color:#5cb8c0">121.928 seconds  ( 2.032 minutes )</span>
<span style="color:#cccccc">Running N64: </span><span style="color:#1cb818">Passed</span><span style="color:#cccccc">  Test Time:  </span><span style="color:#5cb8c0">122.753 seconds  ( 2.046 minutes )</span>
<span style="color:#cccccc">Running HNT: </span><span style="color:#1cb818">Passed</span><span style="color:#cccccc">  Test Time:  </span><span style="color:#5cb8c0">122.015 seconds  ( 2.034 minutes )</span>
<span style="color:#cccccc">Running VST: </span><span style="color:#1cb818">Passed</span><span style="color:#cccccc">  Test Time:  </span><span style="color:#5cb8c0">121.384 seconds  ( 2.023 minutes )</span>
<span style="color:#cccccc">Running C17: </span><span style="color:#1cb818">Passed</span><span style="color:#cccccc">  Test Time:  </span><span style="color:#5cb8c0">122.454 seconds  ( 2.041 minutes )</span>

<span style="color:#cccccc">Test Finished. Waiting for threads to terminate...</span>

<span style="color:#cccccc">Press any key to continue . . .</span></div>
<div class="a" style="left:1216.40px;top:0.00px;width:703.60px;height:1046.00px;background:#f0f0f0;border-top:1px solid #1d4f8a;"></div>
<div class="a" style="left:1216.40px;top:1.00px;width:703.60px;height:22.30px;background:#ffffff;"></div>
<div class="a" style="left:1216.40px;top:23.30px;width:703.60px;height:0.80px;background:#a0a0a0;"></div>
<svg style="left:1222.7px;top:5.8px" width="11.5" height="11"><rect x="0" y="0" width="11.5" height="11" rx="2" fill="#1b2b3a"/><rect x="0.5" y="0.5" width="10.5" height="5" rx="1.5" fill="#2e8ee0"/><path d="M2.5 2V6M4.6 2V5M6.7 2.5V6M8.8 3V5.5" stroke="#e6f4ff" stroke-width="1.1"/><path d="M2.5 7.5V9.5M4.6 7.5V9.5M6.7 7.5V9.5M8.8 7.5V9.5" stroke="#fff" stroke-width="1.2"/></svg>
<div class="t" style="top:11.80px;font-size:8.57px;color:#8a8a8a;left:1238.00px;transform:scaleY(1.1);">HWiNFO64 v7.02-4430 Sensor Status [212 values hidden]</div>
<div class="a" style="left:1830.00px;top:11.60px;width:7.50px;height:0.90px;background:#999;"></div>
<div class="a" style="left:1863.50px;top:7.80px;width:7.50px;height:7.50px;border:1px solid #999;"></div>
<svg style="left:1898px;top:8px" width="8" height="8"><path d="M0 0L8 8M8 0L0 8" stroke="#888" stroke-width="0.9"/></svg>
<div class="a" style="left:1217.00px;top:24.00px;width:350.50px;height:979.75px;background:#ffffff;"></div>
<div class="t" style="top:35.10px;font-size:7.95px;color:#1c1c1c;left:1222.20px;transform:scaleY(1.1);">Sensor</div>
<div class="t" style="top:35.10px;font-size:7.95px;color:#1c1c1c;right:549.00px;transform:scaleY(1.1);">Current</div>
<div class="t" style="top:35.10px;font-size:7.95px;color:#1c1c1c;right:489.00px;transform:scaleY(1.1);">Minimum</div>
<div class="t" style="top:35.10px;font-size:7.95px;color:#1c1c1c;right:429.00px;transform:scaleY(1.1);">Maximum</div>
<div class="t" style="top:35.10px;font-size:7.95px;color:#1c1c1c;right:369.00px;transform:scaleY(1.1);">Average</div>
<div class="a" style="left:1316.00px;top:26.00px;width:1.00px;height:15.00px;background:#ececec;"></div>
<div class="a" style="left:1376.00px;top:26.00px;width:1.00px;height:15.00px;background:#ececec;"></div>
<div class="a" style="left:1436.00px;top:26.00px;width:1.00px;height:15.00px;background:#ececec;"></div>
<div class="a" style="left:1496.00px;top:26.00px;width:1.00px;height:15.00px;background:#ececec;"></div>
<div class="a" style="left:1556.00px;top:26.00px;width:1.00px;height:15.00px;background:#ececec;"></div>
<div class="a" style="left:1218.00px;top:54.75px;width:349.50px;height:0.60px;background:#f1f1f1;"></div>
<div class="a" style="left:1218.00px;top:67.50px;width:349.50px;height:0.60px;background:#f1f1f1;"></div>
<div class="a" style="left:1218.00px;top:80.25px;width:349.50px;height:0.60px;background:#f1f1f1;"></div>
<div class="a" style="left:1218.00px;top:93.00px;width:349.50px;height:0.60px;background:#f1f1f1;"></div>
<div class="a" style="left:1218.00px;top:105.75px;width:349.50px;height:0.60px;background:#f1f1f1;"></div>
<div class="a" style="left:1218.00px;top:118.50px;width:349.50px;height:0.60px;background:#f1f1f1;"></div>
<div class="a" style="left:1218.00px;top:131.25px;width:349.50px;height:0.60px;background:#f1f1f1;"></div>
<div class="a" style="left:1218.00px;top:144.00px;width:349.50px;height:0.60px;background:#f1f1f1;"></div>
<div class="a" style="left:1218.00px;top:156.75px;width:349.50px;height:0.60px;background:#f1f1f1;"></div>
<div class="a" style="left:1218.00px;top:169.50px;width:349.50px;height:0.60px;background:#f1f1f1;"></div>
<div class="a" style="left:1218.00px;top:182.25px;width:349.50px;height:0.60px;background:#f1f1f1;"></div>
<div class="a" style="left:1218.00px;top:195.00px;width:349.50px;height:0.60px;background:#f1f1f1;"></div>
<div class="a" style="left:1218.00px;top:207.75px;width:349.50px;height:0.60px;background:#f1f1f1;"></div>
<div class="a" style="left:1218.00px;top:220.50px;width:349.50px;height:0.60px;background:#f1f1f1;"></div>
<div class="a" style="left:1218.00px;top:233.25px;width:349.50px;height:0.60px;background:#f1f1f1;"></div>
<div class="a" style="left:1218.00px;top:246.00px;width:349.50px;height:0.60px;background:#f1f1f1;"></div>
<div class="a" style="left:1218.00px;top:258.75px;width:349.50px;height:0.60px;background:#f1f1f1;"></div>
<div class="a" style="left:1218.00px;top:271.50px;width:349.50px;height:0.60px;background:#f1f1f1;"></div>
<div class="a" style="left:1218.00px;top:284.25px;width:349.50px;height:0.60px;background:#f1f1f1;"></div>
<div class="a" style="left:1218.00px;top:297.00px;width:349.50px;height:0.60px;background:#f1f1f1;"></div>
<div class="a" style="left:1218.00px;top:309.75px;width:349.50px;height:0.60px;background:#f1f1f1;"></div>
<div class="a" style="left:1218.00px;top:322.50px;width:349.50px;height:0.60px;background:#f1f1f1;"></div>
<div class="a" style="left:1218.00px;top:335.25px;width:349.50px;height:0.60px;background:#f1f1f1;"></div>
<div class="a" style="left:1218.00px;top:348.00px;width:349.50px;height:0.60px;background:#f1f1f1;"></div>
<div class="a" style="left:1218.00px;top:360.75px;width:349.50px;height:0.60px;background:#f1f1f1;"></div>
<div class="a" style="left:1218.00px;top:373.50px;width:349.50px;height:0.60px;background:#f1f1f1;"></div>
<div class="a" style="left:1218.00px;top:386.25px;width:349.50px;height:0.60px;background:#f1f1f1;"></div>
<div class="a" style="left:1218.00px;top:399.00px;width:349.50px;height:0.60px;background:#f1f1f1;"></div>
<div class="a" style="left:1218.00px;top:411.75px;width:349.50px;height:0.60px;background:#f1f1f1;"></div>
<div class="a" style="left:1218.00px;top:424.50px;width:349.50px;height:0.60px;background:#f1f1f1;"></div>
<div class="a" style="left:1218.00px;top:437.25px;width:349.50px;height:0.60px;background:#f1f1f1;"></div>
<div class="a" style="left:1218.00px;top:450.00px;width:349.50px;height:0.60px;background:#f1f1f1;"></div>
<div class="a" style="left:1218.00px;top:462.75px;width:349.50px;height:0.60px;background:#f1f1f1;"></div>
<div class="a" style="left:1218.00px;top:475.50px;width:349.50px;height:0.60px;background:#f1f1f1;"></div>
<div class="a" style="left:1218.00px;top:488.25px;width:349.50px;height:0.60px;background:#f1f1f1;"></div>
<div class="a" style="left:1218.00px;top:501.00px;width:349.50px;height:0.60px;background:#f1f1f1;"></div>
<div class="a" style="left:1218.00px;top:513.75px;width:349.50px;height:0.60px;background:#f1f1f1;"></div>
<div class="a" style="left:1218.00px;top:526.50px;width:349.50px;height:0.60px;background:#f1f1f1;"></div>
<div class="a" style="left:1218.00px;top:539.25px;width:349.50px;height:0.60px;background:#f1f1f1;"></div>
<div class="a" style="left:1218.00px;top:552.00px;width:349.50px;height:0.60px;background:#f1f1f1;"></div>
<div class="a" style="left:1218.00px;top:564.75px;width:349.50px;height:0.60px;background:#f1f1f1;"></div>
<div class="a" style="left:1218.00px;top:577.50px;width:349.50px;height:0.60px;background:#f1f1f1;"></div>
<div class="a" style="left:1218.00px;top:590.25px;width:349.50px;height:0.60px;background:#f1f1f1;"></div>
<div class="a" style="left:1218.00px;top:603.00px;width:349.50px;height:0.60px;background:#f1f1f1;"></div>
<div class="a" style="left:1218.00px;top:615.75px;width:349.50px;height:0.60px;background:#f1f1f1;"></div>
<div class="a" style="left:1218.00px;top:628.50px;width:349.50px;height:0.60px;background:#f1f1f1;"></div>
<div class="a" style="left:1218.00px;top:641.25px;width:349.50px;height:0.60px;background:#f1f1f1;"></div>
<div class="a" style="left:1218.00px;top:654.00px;width:349.50px;height:0.60px;background:#f1f1f1;"></div>
<div class="a" style="left:1218.00px;top:666.75px;width:349.50px;height:0.60px;background:#f1f1f1;"></div>
<div class="a" style="left:1218.00px;top:679.50px;width:349.50px;height:0.60px;background:#f1f1f1;"></div>
<div class="a" style="left:1218.00px;top:692.25px;width:349.50px;height:0.60px;background:#f1f1f1;"></div>
<div class="a" style="left:1218.00px;top:705.00px;width:349.50px;height:0.60px;background:#f1f1f1;"></div>
<div class="a" style="left:1218.00px;top:717.75px;width:349.50px;height:0.60px;background:#f1f1f1;"></div>
<div class="a" style="left:1218.00px;top:730.50px;width:349.50px;height:0.60px;background:#f1f1f1;"></div>
<div class="a" style="left:1218.00px;top:743.25px;width:349.50px;height:0.60px;background:#f1f1f1;"></div>
<div class="a" style="left:1218.00px;top:756.00px;width:349.50px;height:0.60px;background:#f1f1f1;"></div>
<div class="a" style="left:1218.00px;top:768.75px;width:349.50px;height:0.60px;background:#f1f1f1;"></div>
<div class="a" style="left:1218.00px;top:781.50px;width:349.50px;height:0.60px;background:#f1f1f1;"></div>
<div class="a" style="left:1218.00px;top:794.25px;width:349.50px;height:0.60px;background:#f1f1f1;"></div>
<div class="a" style="left:1218.00px;top:807.00px;width:349.50px;height:0.60px;background:#f1f1f1;"></div>
<div class="a" style="left:1218.00px;top:819.75px;width:349.50px;height:0.60px;background:#f1f1f1;"></div>
<div class="a" style="left:1218.00px;top:832.50px;width:349.50px;height:0.60px;background:#f1f1f1;"></div>
<div class="a" style="left:1218.00px;top:845.25px;width:349.50px;height:0.60px;background:#f1f1f1;"></div>
<div class="a" style="left:1218.00px;top:858.00px;width:349.50px;height:0.60px;background:#f1f1f1;"></div>
<div class="a" style="left:1218.00px;top:870.75px;width:349.50px;height:0.60px;background:#f1f1f1;"></div>
<div class="a" style="left:1218.00px;top:883.50px;width:349.50px;height:0.60px;background:#f1f1f1;"></div>
<div class="a" style="left:1218.00px;top:896.25px;width:349.50px;height:0.60px;background:#f1f1f1;"></div>
<div class="a" style="left:1218.00px;top:909.00px;width:349.50px;height:0.60px;background:#f1f1f1;"></div>
<div class="a" style="left:1218.00px;top:921.75px;width:349.50px;height:0.60px;background:#f1f1f1;"></div>
<div class="a" style="left:1218.00px;top:934.50px;width:349.50px;height:0.60px;background:#f1f1f1;"></div>
<div class="a" style="left:1218.00px;top:947.25px;width:349.50px;height:0.60px;background:#f1f1f1;"></div>
<div class="a" style="left:1218.00px;top:960.00px;width:349.50px;height:0.60px;background:#f1f1f1;"></div>
<div class="a" style="left:1218.00px;top:972.75px;width:349.50px;height:0.60px;background:#f1f1f1;"></div>
<div class="a" style="left:1218.00px;top:985.50px;width:349.50px;height:0.60px;background:#f1f1f1;"></div>
<div class="a" style="left:1218.00px;top:998.25px;width:349.50px;height:0.60px;background:#f1f1f1;"></div>
<div class="a" style="left:1316.00px;top:42.60px;width:0.70px;height:961.15px;background:#f1f1f1;"></div>
<div class="a" style="left:1376.00px;top:42.60px;width:0.70px;height:961.15px;background:#f1f1f1;"></div>
<div class="a" style="left:1436.00px;top:42.60px;width:0.70px;height:961.15px;background:#f1f1f1;"></div>
<div class="a" style="left:1496.00px;top:42.60px;width:0.70px;height:961.15px;background:#f1f1f1;"></div>
<div class="a" style="left:1556.00px;top:42.60px;width:0.70px;height:961.15px;background:#f1f1f1;"></div>
<div class="a" style="left:1247.00px;top:42.60px;width:309.00px;height:11.25px;background:#dcdcdc;"></div>
<div class="a" style="left:1316.00px;top:42.60px;width:1.20px;height:11.25px;background:#ffffff;"></div>
<div class="a" style="left:1376.00px;top:42.60px;width:1.20px;height:11.25px;background:#ffffff;"></div>
<div class="a" style="left:1436.00px;top:42.60px;width:1.20px;height:11.25px;background:#ffffff;"></div>
<div class="a" style="left:1496.00px;top:42.60px;width:1.20px;height:11.25px;background:#ffffff;"></div>
<svg style="left:1224.00px;top:47.88px" width="7" height="4"><path d="M0.5 0.5L3.5 3.3L6.5 0.5" stroke="#555" fill="none" stroke-width="0.9"/></svg>
<svg style="left:1236.50px;top:43.08px" width="8" height="12"><rect x="1" y="0.5" width="6" height="11" rx="0.6" fill="#3a3a3a"/><rect x="2" y="1.2" width="2" height="9.5" fill="#666"/><path d="M0 2H1M0 4H1M0 6H1M0 8H1M0 10H1M7 2H8M7 4H8M7 6H8M7 8H8M7 10H8" stroke="#555" stroke-width="0.7"/></svg>
<div class="t" style="top:49.88px;font-size:7.95px;color:#333;left:1249.00px;transform:scaleY(1.1);font-style:italic;">CPU [#0]: AMD...</div>
<div class="a" style="left:1258.40px;top:55.35px;width:297.60px;height:12.75px;background:#f0f0f0;"></div>
<svg style="left:1237.50px;top:59.12px" width="4" height="7"><path d="M0.5 0.5L3.3 3.5L0.5 6.5" stroke="#555" fill="none" stroke-width="0.9"/></svg>
<svg style="left:1250.00px;top:55.33px" width="8" height="13"><path d="M4.5 0.5L1 6.8H3.6L1.8 12.5L7.2 5.2H4.6L6.5 0.5Z" fill="#ffe04a" stroke="#d88a10" stroke-width="0.8"/></svg>
<div class="t" style="top:62.62px;font-size:7.95px;color:#1c1c1c;left:1260.40px;transform:scaleY(1.1);">Core VIDs</div>
<div class="t" style="top:62.62px;font-size:7.95px;color:#222;right:549.00px;transform:scaleY(1.1);">0.637 V</div>
<div class="t" style="top:62.62px;font-size:7.95px;color:#222;right:489.00px;transform:scaleY(1.1);">0.200 V</div>
<div class="t" style="top:62.62px;font-size:7.95px;color:#222;right:429.00px;transform:scaleY(1.1);">1.475 V</div>
<div class="t" style="top:62.62px;font-size:7.95px;color:#222;right:369.00px;transform:scaleY(1.1);">1.134 V</div>
<svg style="left:1236.00px;top:73.38px" width="7" height="4"><path d="M0.5 0.5L3.5 3.3L6.5 0.5" stroke="#555" fill="none" stroke-width="0.9"/></svg>
<svg style="left:1250.00px;top:70.28px" width="9" height="9"><circle cx="4.3" cy="4.3" r="3.7" fill="#f4f4f4" stroke="#5a5a5a" stroke-width="1"/><path d="M2.6 3.6L4.3 4.6" stroke="#777" stroke-width="0.8"/></svg>
<div class="t" style="top:75.38px;font-size:7.95px;color:#1c1c1c;left:1260.40px;transform:scaleY(1.1);">Core Clocks</div>
<div class="t" style="top:75.38px;font-size:7.95px;color:#222;right:549.00px;transform:scaleY(1.1);">3,400.0 MHz</div>
<div class="t" style="top:75.38px;font-size:7.95px;color:#222;right:489.00px;transform:scaleY(1.1);">3,400.0 MHz</div>
<div class="t" style="top:75.38px;font-size:7.95px;color:#222;right:429.00px;transform:scaleY(1.1);">5,100.0 MHz</div>
<div class="t" style="top:75.38px;font-size:7.95px;color:#222;right:369.00px;transform:scaleY(1.1);">3,653.0 MHz</div>
<div class="a" style="left:1247.75px;top:80.85px;width:308.25px;height:12.75px;background:#f0f0f0;"></div>
<svg style="left:1248.75px;top:83.03px" width="9" height="9"><circle cx="4.3" cy="4.3" r="3.7" fill="#f4f4f4" stroke="#5a5a5a" stroke-width="1"/><path d="M2.6 3.6L4.3 4.6" stroke="#777" stroke-width="0.8"/></svg>
<div class="t" style="top:88.12px;font-size:7.95px;color:#1c1c1c;left:1260.40px;transform:scaleY(1.1);">Core 0 Clock...</div>
<div class="t" style="top:88.12px;font-size:7.95px;color:#1c1c1c;right:549.00px;transform:scaleY(1.1);">3,400.0 MHz</div>
<div class="t" style="top:88.12px;font-size:7.95px;color:#1c1c1c;right:489.00px;transform:scaleY(1.1);">3,400.0 MHz</div>
<div class="t" style="top:88.12px;font-size:7.95px;color:#1c1c1c;right:429.00px;transform:scaleY(1.1);">5,100.0 MHz</div>
<div class="t" style="top:88.12px;font-size:7.95px;color:#1c1c1c;right:369.00px;transform:scaleY(1.1);">3,731.9 MHz</div>
<svg style="left:1248.75px;top:95.78px" width="9" height="9"><circle cx="4.3" cy="4.3" r="3.7" fill="#f4f4f4" stroke="#5a5a5a" stroke-width="1"/><path d="M2.6 3.6L4.3 4.6" stroke="#777" stroke-width="0.8"/></svg>
<div class="t" style="top:100.88px;font-size:7.95px;color:#1c1c1c;left:1260.40px;transform:scaleY(1.1);">Core 1 Clock...</div>
<div class="t" style="top:100.88px;font-size:7.95px;color:#1c1c1c;right:549.00px;transform:scaleY(1.1);">3,400.0 MHz</div>
<div class="t" style="top:100.88px;font-size:7.95px;color:#1c1c1c;right:489.00px;transform:scaleY(1.1);">3,400.0 MHz</div>
<div class="t" style="top:100.88px;font-size:7.95px;color:#1c1c1c;right:429.00px;transform:scaleY(1.1);">4,875.0 MHz</div>
<div class="t" style="top:100.88px;font-size:7.95px;color:#1c1c1c;right:369.00px;transform:scaleY(1.1);">3,675.2 MHz</div>
<div class="a" style="left:1247.75px;top:106.35px;width:308.25px;height:12.75px;background:#f0f0f0;"></div>
<svg style="left:1248.75px;top:108.53px" width="9" height="9"><circle cx="4.3" cy="4.3" r="3.7" fill="#f4f4f4" stroke="#5a5a5a" stroke-width="1"/><path d="M2.6 3.6L4.3 4.6" stroke="#777" stroke-width="0.8"/></svg>
<div class="t" style="top:113.62px;font-size:7.95px;color:#1c1c1c;left:1260.40px;transform:scaleY(1.1);">Core 2 Clock...</div>
<div class="t" style="top:113.62px;font-size:7.95px;color:#1c1c1c;right:549.00px;transform:scaleY(1.1);">3,400.0 MHz</div>
<div class="t" style="top:113.62px;font-size:7.95px;color:#1c1c1c;right:489.00px;transform:scaleY(1.1);">3,400.0 MHz</div>
<div class="t" style="top:113.62px;font-size:7.95px;color:#1c1c1c;right:429.00px;transform:scaleY(1.1);">4,875.0 MHz</div>
<div class="t" style="top:113.62px;font-size:7.95px;color:#1c1c1c;right:369.00px;transform:scaleY(1.1);">3,675.2 MHz</div>
<svg style="left:1248.75px;top:121.28px" width="9" height="9"><circle cx="4.3" cy="4.3" r="3.7" fill="#f4f4f4" stroke="#5a5a5a" stroke-width="1"/><path d="M2.6 3.6L4.3 4.6" stroke="#777" stroke-width="0.8"/></svg>
<div class="t" style="top:126.38px;font-size:7.95px;color:#1c1c1c;left:1260.40px;transform:scaleY(1.1);">Core 3 Clock...</div>
<div class="t" style="top:126.38px;font-size:7.95px;color:#1c1c1c;right:549.00px;transform:scaleY(1.1);">3,400.0 MHz</div>
<div class="t" style="top:126.38px;font-size:7.95px;color:#1c1c1c;right:489.00px;transform:scaleY(1.1);">3,400.0 MHz</div>
<div class="t" style="top:126.38px;font-size:7.95px;color:#1c1c1c;right:429.00px;transform:scaleY(1.1);">4,875.0 MHz</div>
<div class="t" style="top:126.38px;font-size:7.95px;color:#1c1c1c;right:369.00px;transform:scaleY(1.1);">3,675.2 MHz</div>
<div class="a" style="left:1247.75px;top:131.85px;width:308.25px;height:12.75px;background:#f0f0f0;"></div>
<svg style="left:1248.75px;top:134.02px" width="9" height="9"><circle cx="4.3" cy="4.3" r="3.7" fill="#f4f4f4" stroke="#5a5a5a" stroke-width="1"/><path d="M2.6 3.6L4.3 4.6" stroke="#777" stroke-width="0.8"/></svg>
<div class="t" style="top:139.12px;font-size:7.95px;color:#1c1c1c;left:1260.40px;transform:scaleY(1.1);">Core 4 Clock...</div>
<div class="t" style="top:139.12px;font-size:7.95px;color:#1c1c1c;right:549.00px;transform:scaleY(1.1);">3,400.0 MHz</div>
<div class="t" style="top:139.12px;font-size:7.95px;color:#1c1c1c;right:489.00px;transform:scaleY(1.1);">3,400.0 MHz</div>
<div class="t" style="top:139.12px;font-size:7.95px;color:#1c1c1c;right:429.00px;transform:scaleY(1.1);">5,100.0 MHz</div>
<div class="t" style="top:139.12px;font-size:7.95px;color:#1c1c1c;right:369.00px;transform:scaleY(1.1);">3,731.9 MHz</div>
<svg style="left:1248.75px;top:146.77px" width="9" height="9"><circle cx="4.3" cy="4.3" r="3.7" fill="#f4f4f4" stroke="#5a5a5a" stroke-width="1"/><path d="M2.6 3.6L4.3 4.6" stroke="#777" stroke-width="0.8"/></svg>
<div class="t" style="top:151.88px;font-size:7.95px;color:#1c1c1c;left:1260.40px;transform:scaleY(1.1);">Core 5 Clock...</div>
<div class="t" style="top:151.88px;font-size:7.95px;color:#1c1c1c;right:549.00px;transform:scaleY(1.1);">3,400.0 MHz</div>
<div class="t" style="top:151.88px;font-size:7.95px;color:#1c1c1c;right:489.00px;transform:scaleY(1.1);">3,400.0 MHz</div>
<div class="t" style="top:151.88px;font-size:7.95px;color:#1c1c1c;right:429.00px;transform:scaleY(1.1);">4,875.0 MHz</div>
<div class="t" style="top:151.88px;font-size:7.95px;color:#1c1c1c;right:369.00px;transform:scaleY(1.1);">3,675.2 MHz</div>
<div class="a" style="left:1247.75px;top:157.35px;width:308.25px;height:12.75px;background:#f0f0f0;"></div>
<svg style="left:1248.75px;top:159.52px" width="9" height="9"><circle cx="4.3" cy="4.3" r="3.7" fill="#f4f4f4" stroke="#5a5a5a" stroke-width="1"/><path d="M2.6 3.6L4.3 4.6" stroke="#777" stroke-width="0.8"/></svg>
<div class="t" style="top:164.62px;font-size:7.95px;color:#1c1c1c;left:1260.40px;transform:scaleY(1.1);">Core 6 Clock...</div>
<div class="t" style="top:164.62px;font-size:7.95px;color:#1c1c1c;right:549.00px;transform:scaleY(1.1);">3,400.0 MHz</div>
<div class="t" style="top:164.62px;font-size:7.95px;color:#1c1c1c;right:489.00px;transform:scaleY(1.1);">3,400.0 MHz</div>
<div class="t" style="top:164.62px;font-size:7.95px;color:#1c1c1c;right:429.00px;transform:scaleY(1.1);">4,875.0 MHz</div>
<div class="t" style="top:164.62px;font-size:7.95px;color:#1c1c1c;right:369.00px;transform:scaleY(1.1);">3,675.2 MHz</div>
<svg style="left:1248.75px;top:172.27px" width="9" height="9"><circle cx="4.3" cy="4.3" r="3.7" fill="#f4f4f4" stroke="#5a5a5a" stroke-width="1"/><path d="M2.6 3.6L4.3 4.6" stroke="#777" stroke-width="0.8"/></svg>
<div class="t" style="top:177.38px;font-size:7.95px;color:#1c1c1c;left:1260.40px;transform:scaleY(1.1);">Core 7 Clock...</div>
<div class="t" style="top:177.38px;font-size:7.95px;color:#1c1c1c;right:549.00px;transform:scaleY(1.1);">3,400.0 MHz</div>
<div class="t" style="top:177.38px;font-size:7.95px;color:#1c1c1c;right:489.00px;transform:scaleY(1.1);">3,400.0 MHz</div>
<div class="t" style="top:177.38px;font-size:7.95px;color:#1c1c1c;right:429.00px;transform:scaleY(1.1);">4,875.0 MHz</div>
<div class="t" style="top:177.38px;font-size:7.95px;color:#1c1c1c;right:369.00px;transform:scaleY(1.1);">3,675.2 MHz</div>
<div class="a" style="left:1247.75px;top:182.85px;width:308.25px;height:12.75px;background:#f0f0f0;"></div>
<svg style="left:1248.75px;top:185.02px" width="9" height="9"><circle cx="4.3" cy="4.3" r="3.7" fill="#f4f4f4" stroke="#5a5a5a" stroke-width="1"/><path d="M2.6 3.6L4.3 4.6" stroke="#777" stroke-width="0.8"/></svg>
<div class="t" style="top:190.12px;font-size:7.95px;color:#1c1c1c;left:1260.40px;transform:scaleY(1.1);">Core 8 Clock...</div>
<div class="t" style="top:190.12px;font-size:7.95px;color:#1c1c1c;right:549.00px;transform:scaleY(1.1);">3,400.0 MHz</div>
<div class="t" style="top:190.12px;font-size:7.95px;color:#1c1c1c;right:489.00px;transform:scaleY(1.1);">3,400.0 MHz</div>
<div class="t" style="top:190.12px;font-size:7.95px;color:#1c1c1c;right:429.00px;transform:scaleY(1.1);">4,750.0 MHz</div>
<div class="t" style="top:190.12px;font-size:7.95px;color:#1c1c1c;right:369.00px;transform:scaleY(1.1);">3,616.6 MHz</div>
<svg style="left:1248.75px;top:197.77px" width="9" height="9"><circle cx="4.3" cy="4.3" r="3.7" fill="#f4f4f4" stroke="#5a5a5a" stroke-width="1"/><path d="M2.6 3.6L4.3 4.6" stroke="#777" stroke-width="0.8"/></svg>
<div class="t" style="top:202.88px;font-size:7.95px;color:#1c1c1c;left:1260.40px;transform:scaleY(1.1);">Core 9 Clock...</div>
<div class="t" style="top:202.88px;font-size:7.95px;color:#1c1c1c;right:549.00px;transform:scaleY(1.1);">3,400.0 MHz</div>
<div class="t" style="top:202.88px;font-size:7.95px;color:#1c1c1c;right:489.00px;transform:scaleY(1.1);">3,400.0 MHz</div>
<div class="t" style="top:202.88px;font-size:7.95px;color:#1c1c1c;right:429.00px;transform:scaleY(1.1);">4,750.0 MHz</div>
<div class="t" style="top:202.88px;font-size:7.95px;color:#1c1c1c;right:369.00px;transform:scaleY(1.1);">3,616.6 MHz</div>
<div class="a" style="left:1247.75px;top:208.35px;width:308.25px;height:12.75px;background:#f0f0f0;"></div>
<svg style="left:1248.75px;top:210.52px" width="9" height="9"><circle cx="4.3" cy="4.3" r="3.7" fill="#f4f4f4" stroke="#5a5a5a" stroke-width="1"/><path d="M2.6 3.6L4.3 4.6" stroke="#777" stroke-width="0.8"/></svg>
<div class="t" style="top:215.62px;font-size:7.95px;color:#1c1c1c;left:1260.40px;transform:scaleY(1.1);">Core 10 Clo...</div>
<div class="t" style="top:215.62px;font-size:7.95px;color:#1c1c1c;right:549.00px;transform:scaleY(1.1);">3,400.0 MHz</div>
<div class="t" style="top:215.62px;font-size:7.95px;color:#1c1c1c;right:489.00px;transform:scaleY(1.1);">3,400.0 MHz</div>
<div class="t" style="top:215.62px;font-size:7.95px;color:#1c1c1c;right:429.00px;transform:scaleY(1.1);">4,750.0 MHz</div>
<div class="t" style="top:215.62px;font-size:7.95px;color:#1c1c1c;right:369.00px;transform:scaleY(1.1);">3,616.6 MHz</div>
<svg style="left:1248.75px;top:223.27px" width="9" height="9"><circle cx="4.3" cy="4.3" r="3.7" fill="#f4f4f4" stroke="#5a5a5a" stroke-width="1"/><path d="M2.6 3.6L4.3 4.6" stroke="#777" stroke-width="0.8"/></svg>
<div class="t" style="top:228.38px;font-size:7.95px;color:#1c1c1c;left:1260.40px;transform:scaleY(1.1);">Core 11 Clo...</div>
<div class="t" style="top:228.38px;font-size:7.95px;color:#1c1c1c;right:549.00px;transform:scaleY(1.1);">3,400.0 MHz</div>
<div class="t" style="top:228.38px;font-size:7.95px;color:#1c1c1c;right:489.00px;transform:scaleY(1.1);">3,400.0 MHz</div>
<div class="t" style="top:228.38px;font-size:7.95px;color:#1c1c1c;right:429.00px;transform:scaleY(1.1);">4,750.0 MHz</div>
<div class="t" style="top:228.38px;font-size:7.95px;color:#1c1c1c;right:369.00px;transform:scaleY(1.1);">3,616.6 MHz</div>
<div class="a" style="left:1247.75px;top:233.85px;width:308.25px;height:12.75px;background:#f0f0f0;"></div>
<svg style="left:1248.75px;top:236.02px" width="9" height="9"><circle cx="4.3" cy="4.3" r="3.7" fill="#f4f4f4" stroke="#5a5a5a" stroke-width="1"/><path d="M2.6 3.6L4.3 4.6" stroke="#777" stroke-width="0.8"/></svg>
<div class="t" style="top:241.12px;font-size:7.95px;color:#1c1c1c;left:1260.40px;transform:scaleY(1.1);">Core 12 Clo...</div>
<div class="t" style="top:241.12px;font-size:7.95px;color:#1c1c1c;right:549.00px;transform:scaleY(1.1);">3,400.0 MHz</div>
<div class="t" style="top:241.12px;font-size:7.95px;color:#1c1c1c;right:489.00px;transform:scaleY(1.1);">3,400.0 MHz</div>
<div class="t" style="top:241.12px;font-size:7.95px;color:#1c1c1c;right:429.00px;transform:scaleY(1.1);">4,750.0 MHz</div>
<div class="t" style="top:241.12px;font-size:7.95px;color:#1c1c1c;right:369.00px;transform:scaleY(1.1);">3,616.6 MHz</div>
<svg style="left:1248.75px;top:248.77px" width="9" height="9"><circle cx="4.3" cy="4.3" r="3.7" fill="#f4f4f4" stroke="#5a5a5a" stroke-width="1"/><path d="M2.6 3.6L4.3 4.6" stroke="#777" stroke-width="0.8"/></svg>
<div class="t" style="top:253.88px;font-size:7.95px;color:#1c1c1c;left:1260.40px;transform:scaleY(1.1);">Core 13 Clo...</div>
<div class="t" style="top:253.88px;font-size:7.95px;color:#1c1c1c;right:549.00px;transform:scaleY(1.1);">3,400.0 MHz</div>
<div class="t" style="top:253.88px;font-size:7.95px;color:#1c1c1c;right:489.00px;transform:scaleY(1.1);">3,400.0 MHz</div>
<div class="t" style="top:253.88px;font-size:7.95px;color:#1c1c1c;right:429.00px;transform:scaleY(1.1);">4,750.0 MHz</div>
<div class="t" style="top:253.88px;font-size:7.95px;color:#1c1c1c;right:369.00px;transform:scaleY(1.1);">3,616.6 MHz</div>
<div class="a" style="left:1247.75px;top:259.35px;width:308.25px;height:12.75px;background:#f0f0f0;"></div>
<svg style="left:1248.75px;top:261.52px" width="9" height="9"><circle cx="4.3" cy="4.3" r="3.7" fill="#f4f4f4" stroke="#5a5a5a" stroke-width="1"/><path d="M2.6 3.6L4.3 4.6" stroke="#777" stroke-width="0.8"/></svg>
<div class="t" style="top:266.62px;font-size:7.95px;color:#1c1c1c;left:1260.40px;transform:scaleY(1.1);">Core 14 Clo...</div>
<div class="t" style="top:266.62px;font-size:7.95px;color:#1c1c1c;right:549.00px;transform:scaleY(1.1);">3,400.0 MHz</div>
<div class="t" style="top:266.62px;font-size:7.95px;color:#1c1c1c;right:489.00px;transform:scaleY(1.1);">3,400.0 MHz</div>
<div class="t" style="top:266.62px;font-size:7.95px;color:#1c1c1c;right:429.00px;transform:scaleY(1.1);">4,750.0 MHz</div>
<div class="t" style="top:266.62px;font-size:7.95px;color:#1c1c1c;right:369.00px;transform:scaleY(1.1);">3,616.6 MHz</div>
<svg style="left:1248.75px;top:274.27px" width="9" height="9"><circle cx="4.3" cy="4.3" r="3.7" fill="#f4f4f4" stroke="#5a5a5a" stroke-width="1"/><path d="M2.6 3.6L4.3 4.6" stroke="#777" stroke-width="0.8"/></svg>
<div class="t" style="top:279.38px;font-size:7.95px;color:#1c1c1c;left:1260.40px;transform:scaleY(1.1);">Core 15 Clo...</div>
<div class="t" style="top:279.38px;font-size:7.95px;color:#1c1c1c;right:549.00px;transform:scaleY(1.1);">3,400.0 MHz</div>
<div class="t" style="top:279.38px;font-size:7.95px;color:#1c1c1c;right:489.00px;transform:scaleY(1.1);">3,400.0 MHz</div>
<div class="t" style="top:279.38px;font-size:7.95px;color:#1c1c1c;right:429.00px;transform:scaleY(1.1);">4,750.0 MHz</div>
<div class="t" style="top:279.38px;font-size:7.95px;color:#1c1c1c;right:369.00px;transform:scaleY(1.1);">3,616.6 MHz</div>
<div class="a" style="left:1236.50px;top:284.85px;width:319.50px;height:12.75px;background:#f0f0f0;"></div>
<svg style="left:1237.50px;top:287.02px" width="9" height="9"><circle cx="4.3" cy="4.3" r="3.7" fill="#f4f4f4" stroke="#5a5a5a" stroke-width="1"/><path d="M2.6 3.6L4.3 4.6" stroke="#777" stroke-width="0.8"/></svg>
<div class="t" style="top:292.12px;font-size:7.95px;color:#1c1c1c;left:1248.00px;transform:scaleY(1.1);">Bus Clock</div>
<div class="t" style="top:292.12px;font-size:7.95px;color:#1c1c1c;right:549.00px;transform:scaleY(1.1);">100.0 MHz</div>
<div class="t" style="top:292.12px;font-size:7.95px;color:#1c1c1c;right:489.00px;transform:scaleY(1.1);">100.0 MHz</div>
<div class="t" style="top:292.12px;font-size:7.95px;color:#1c1c1c;right:429.00px;transform:scaleY(1.1);">100.0 MHz</div>
<div class="t" style="top:292.12px;font-size:7.95px;color:#1c1c1c;right:369.00px;transform:scaleY(1.1);">100.0 MHz</div>
<svg style="left:1236.00px;top:302.88px" width="7" height="4"><path d="M0.5 0.5L3.5 3.3L6.5 0.5" stroke="#555" fill="none" stroke-width="0.9"/></svg>
<svg style="left:1250.00px;top:299.77px" width="9" height="9"><circle cx="4.3" cy="4.3" r="3.7" fill="#f4f4f4" stroke="#5a5a5a" stroke-width="1"/><path d="M2.6 3.6L4.3 4.6" stroke="#777" stroke-width="0.8"/></svg>
<div class="t" style="top:304.88px;font-size:7.95px;color:#1c1c1c;left:1260.40px;transform:scaleY(1.1);">Core Effecti...</div>
<div class="t" style="top:304.88px;font-size:7.95px;color:#222;right:549.00px;transform:scaleY(1.1);">17.1 MHz</div>
<div class="t" style="top:304.88px;font-size:7.95px;color:#222;right:489.00px;transform:scaleY(1.1);">0.0 MHz</div>
<div class="t" style="top:304.88px;font-size:7.95px;color:#222;right:429.00px;transform:scaleY(1.1);">42,391.2 MHz</div>
<div class="t" style="top:304.88px;font-size:7.95px;color:#222;right:369.00px;transform:scaleY(1.1);">157.2 MHz</div>
<div class="a" style="left:1247.75px;top:310.35px;width:308.25px;height:12.75px;background:#f0f0f0;"></div>
<svg style="left:1248.75px;top:312.52px" width="9" height="9"><circle cx="4.3" cy="4.3" r="3.7" fill="#f4f4f4" stroke="#5a5a5a" stroke-width="1"/><path d="M2.6 3.6L4.3 4.6" stroke="#777" stroke-width="0.8"/></svg>
<div class="t" style="top:317.62px;font-size:7.95px;color:#1c1c1c;left:1260.40px;transform:scaleY(1.1);">Core 0 T0 Ef...</div>
<div class="t" style="top:317.62px;font-size:7.95px;color:#1c1c1c;right:549.00px;transform:scaleY(1.1);">0.0 MHz</div>
<div class="t" style="top:317.62px;font-size:7.95px;color:#1c1c1c;right:489.00px;transform:scaleY(1.1);">0.0 MHz</div>
<div class="t" style="top:317.62px;font-size:7.95px;color:#1c1c1c;right:429.00px;transform:scaleY(1.1);">42,391.2 MHz</div>
<div class="t" style="top:317.62px;font-size:7.95px;color:#1c1c1c;right:369.00px;transform:scaleY(1.1);">3,566.2 MHz</div>
<svg style="left:1248.75px;top:325.27px" width="9" height="9"><circle cx="4.3" cy="4.3" r="3.7" fill="#f4f4f4" stroke="#5a5a5a" stroke-width="1"/><path d="M2.6 3.6L4.3 4.6" stroke="#777" stroke-width="0.8"/></svg>
<div class="t" style="top:330.38px;font-size:7.95px;color:#1c1c1c;left:1260.40px;transform:scaleY(1.1);">Core 0 T1 Ef...</div>
<div class="t" style="top:330.38px;font-size:7.95px;color:#1c1c1c;right:549.00px;transform:scaleY(1.1);">28.5 MHz</div>
<div class="t" style="top:330.38px;font-size:7.95px;color:#1c1c1c;right:489.00px;transform:scaleY(1.1);">21.5 MHz</div>
<div class="t" style="top:330.38px;font-size:7.95px;color:#1c1c1c;right:429.00px;transform:scaleY(1.1);">206.6 MHz</div>
<div class="t" style="top:330.38px;font-size:7.95px;color:#1c1c1c;right:369.00px;transform:scaleY(1.1);">62.7 MHz</div>
<div class="a" style="left:1247.75px;top:335.85px;width:308.25px;height:12.75px;background:#f0f0f0;"></div>
<svg style="left:1248.75px;top:338.02px" width="9" height="9"><circle cx="4.3" cy="4.3" r="3.7" fill="#f4f4f4" stroke="#5a5a5a" stroke-width="1"/><path d="M2.6 3.6L4.3 4.6" stroke="#777" stroke-width="0.8"/></svg>
<div class="t" style="top:343.12px;font-size:7.95px;color:#1c1c1c;left:1260.40px;transform:scaleY(1.1);">Core 1 T0 Ef...</div>
<div class="t" style="top:343.12px;font-size:7.95px;color:#1c1c1c;right:549.00px;transform:scaleY(1.1);">11.4 MHz</div>
<div class="t" style="top:343.12px;font-size:7.95px;color:#1c1c1c;right:489.00px;transform:scaleY(1.1);">6.0 MHz</div>
<div class="t" style="top:343.12px;font-size:7.95px;color:#1c1c1c;right:429.00px;transform:scaleY(1.1);">549.9 MHz</div>
<div class="t" style="top:343.12px;font-size:7.95px;color:#1c1c1c;right:369.00px;transform:scaleY(1.1);">120.4 MHz</div>
<svg style="left:1248.75px;top:350.77px" width="9" height="9"><circle cx="4.3" cy="4.3" r="3.7" fill="#f4f4f4" stroke="#5a5a5a" stroke-width="1"/><path d="M2.6 3.6L4.3 4.6" stroke="#777" stroke-width="0.8"/></svg>
<div class="t" style="top:355.88px;font-size:7.95px;color:#1c1c1c;left:1260.40px;transform:scaleY(1.1);">Core 1 T1 Ef...</div>
<div class="t" style="top:355.88px;font-size:7.95px;color:#1c1c1c;right:549.00px;transform:scaleY(1.1);">1.0 MHz</div>
<div class="t" style="top:355.88px;font-size:7.95px;color:#1c1c1c;right:489.00px;transform:scaleY(1.1);">0.8 MHz</div>
<div class="t" style="top:355.88px;font-size:7.95px;color:#1c1c1c;right:429.00px;transform:scaleY(1.1);">61.4 MHz</div>
<div class="t" style="top:355.88px;font-size:7.95px;color:#1c1c1c;right:369.00px;transform:scaleY(1.1);">13.1 MHz</div>
<div class="a" style="left:1247.75px;top:361.35px;width:308.25px;height:12.75px;background:#f0f0f0;"></div>
<svg style="left:1248.75px;top:363.52px" width="9" height="9"><circle cx="4.3" cy="4.3" r="3.7" fill="#f4f4f4" stroke="#5a5a5a" stroke-width="1"/><path d="M2.6 3.6L4.3 4.6" stroke="#777" stroke-width="0.8"/></svg>
<div class="t" style="top:368.62px;font-size:7.95px;color:#1c1c1c;left:1260.40px;transform:scaleY(1.1);">Core 2 T0 Ef...</div>
<div class="t" style="top:368.62px;font-size:7.95px;color:#1c1c1c;right:549.00px;transform:scaleY(1.1);">0.2 MHz</div>
<div class="t" style="top:368.62px;font-size:7.95px;color:#1c1c1c;right:489.00px;transform:scaleY(1.1);">0.2 MHz</div>
<div class="t" style="top:368.62px;font-size:7.95px;color:#1c1c1c;right:429.00px;transform:scaleY(1.1);">165.9 MHz</div>
<div class="t" style="top:368.62px;font-size:7.95px;color:#1c1c1c;right:369.00px;transform:scaleY(1.1);">23.0 MHz</div>
<svg style="left:1248.75px;top:376.27px" width="9" height="9"><circle cx="4.3" cy="4.3" r="3.7" fill="#f4f4f4" stroke="#5a5a5a" stroke-width="1"/><path d="M2.6 3.6L4.3 4.6" stroke="#777" stroke-width="0.8"/></svg>
<div class="t" style="top:381.38px;font-size:7.95px;color:#1c1c1c;left:1260.40px;transform:scaleY(1.1);">Core 2 T1 Ef...</div>
<div class="t" style="top:381.38px;font-size:7.95px;color:#1c1c1c;right:549.00px;transform:scaleY(1.1);">0.4 MHz</div>
<div class="t" style="top:381.38px;font-size:7.95px;color:#1c1c1c;right:489.00px;transform:scaleY(1.1);">0.4 MHz</div>
<div class="t" style="top:381.38px;font-size:7.95px;color:#1c1c1c;right:429.00px;transform:scaleY(1.1);">66.9 MHz</div>
<div class="t" style="top:381.38px;font-size:7.95px;color:#1c1c1c;right:369.00px;transform:scaleY(1.1);">8.8 MHz</div>
<div class="a" style="left:1247.75px;top:386.85px;width:308.25px;height:12.75px;background:#f0f0f0;"></div>
<svg style="left:1248.75px;top:389.02px" width="9" height="9"><circle cx="4.3" cy="4.3" r="3.7" fill="#f4f4f4" stroke="#5a5a5a" stroke-width="1"/><path d="M2.6 3.6L4.3 4.6" stroke="#777" stroke-width="0.8"/></svg>
<div class="t" style="top:394.12px;font-size:7.95px;color:#1c1c1c;left:1260.40px;transform:scaleY(1.1);">Core 3 T0 Ef...</div>
<div class="t" style="top:394.12px;font-size:7.95px;color:#1c1c1c;right:549.00px;transform:scaleY(1.1);">1.3 MHz</div>
<div class="t" style="top:394.12px;font-size:7.95px;color:#1c1c1c;right:489.00px;transform:scaleY(1.1);">1.3 MHz</div>
<div class="t" style="top:394.12px;font-size:7.95px;color:#1c1c1c;right:429.00px;transform:scaleY(1.1);">113.0 MHz</div>
<div class="t" style="top:394.12px;font-size:7.95px;color:#1c1c1c;right:369.00px;transform:scaleY(1.1);">23.7 MHz</div>
<svg style="left:1248.75px;top:401.77px" width="9" height="9"><circle cx="4.3" cy="4.3" r="3.7" fill="#f4f4f4" stroke="#5a5a5a" stroke-width="1"/><path d="M2.6 3.6L4.3 4.6" stroke="#777" stroke-width="0.8"/></svg>
<div class="t" style="top:406.88px;font-size:7.95px;color:#1c1c1c;left:1260.40px;transform:scaleY(1.1);">Core 3 T1 Ef...</div>
<div class="t" style="top:406.88px;font-size:7.95px;color:#1c1c1c;right:549.00px;transform:scaleY(1.1);">31.6 MHz</div>
<div class="t" style="top:406.88px;font-size:7.95px;color:#1c1c1c;right:489.00px;transform:scaleY(1.1);">31.1 MHz</div>
<div class="t" style="top:406.88px;font-size:7.95px;color:#1c1c1c;right:429.00px;transform:scaleY(1.1);">119.5 MHz</div>
<div class="t" style="top:406.88px;font-size:7.95px;color:#1c1c1c;right:369.00px;transform:scaleY(1.1);">56.4 MHz</div>
<div class="a" style="left:1247.75px;top:412.35px;width:308.25px;height:12.75px;background:#f0f0f0;"></div>
<svg style="left:1248.75px;top:414.52px" width="9" height="9"><circle cx="4.3" cy="4.3" r="3.7" fill="#f4f4f4" stroke="#5a5a5a" stroke-width="1"/><path d="M2.6 3.6L4.3 4.6" stroke="#777" stroke-width="0.8"/></svg>
<div class="t" style="top:419.62px;font-size:7.95px;color:#1c1c1c;left:1260.40px;transform:scaleY(1.1);">Core 4 T0 Ef...</div>
<div class="t" style="top:419.62px;font-size:7.95px;color:#1c1c1c;right:549.00px;transform:scaleY(1.1);">92.6 MHz</div>
<div class="t" style="top:419.62px;font-size:7.95px;color:#1c1c1c;right:489.00px;transform:scaleY(1.1);">4.1 MHz</div>
<div class="t" style="top:419.62px;font-size:7.95px;color:#1c1c1c;right:429.00px;transform:scaleY(1.1);">2,669.0 MHz</div>
<div class="t" style="top:419.62px;font-size:7.95px;color:#1c1c1c;right:369.00px;transform:scaleY(1.1);">250.7 MHz</div>
<svg style="left:1248.75px;top:427.27px" width="9" height="9"><circle cx="4.3" cy="4.3" r="3.7" fill="#f4f4f4" stroke="#5a5a5a" stroke-width="1"/><path d="M2.6 3.6L4.3 4.6" stroke="#777" stroke-width="0.8"/></svg>
<div class="t" style="top:432.38px;font-size:7.95px;color:#1c1c1c;left:1260.40px;transform:scaleY(1.1);">Core 4 T1 Ef...</div>
<div class="t" style="top:432.38px;font-size:7.95px;color:#1c1c1c;right:549.00px;transform:scaleY(1.1);">5.0 MHz</div>
<div class="t" style="top:432.38px;font-size:7.95px;color:#1c1c1c;right:489.00px;transform:scaleY(1.1);">2.5 MHz</div>
<div class="t" style="top:432.38px;font-size:7.95px;color:#1c1c1c;right:429.00px;transform:scaleY(1.1);">330.5 MHz</div>
<div class="t" style="top:432.38px;font-size:7.95px;color:#1c1c1c;right:369.00px;transform:scaleY(1.1);">40.9 MHz</div>
<div class="a" style="left:1247.75px;top:437.85px;width:308.25px;height:12.75px;background:#f0f0f0;"></div>
<svg style="left:1248.75px;top:440.02px" width="9" height="9"><circle cx="4.3" cy="4.3" r="3.7" fill="#f4f4f4" stroke="#5a5a5a" stroke-width="1"/><path d="M2.6 3.6L4.3 4.6" stroke="#777" stroke-width="0.8"/></svg>
<div class="t" style="top:445.12px;font-size:7.95px;color:#1c1c1c;left:1260.40px;transform:scaleY(1.1);">Core 5 T0 Ef...</div>
<div class="t" style="top:445.12px;font-size:7.95px;color:#1c1c1c;right:549.00px;transform:scaleY(1.1);">2.0 MHz</div>
<div class="t" style="top:445.12px;font-size:7.95px;color:#1c1c1c;right:489.00px;transform:scaleY(1.1);">2.0 MHz</div>
<div class="t" style="top:445.12px;font-size:7.95px;color:#1c1c1c;right:429.00px;transform:scaleY(1.1);">86.9 MHz</div>
<div class="t" style="top:445.12px;font-size:7.95px;color:#1c1c1c;right:369.00px;transform:scaleY(1.1);">12.1 MHz</div>
<svg style="left:1248.75px;top:452.77px" width="9" height="9"><circle cx="4.3" cy="4.3" r="3.7" fill="#f4f4f4" stroke="#5a5a5a" stroke-width="1"/><path d="M2.6 3.6L4.3 4.6" stroke="#777" stroke-width="0.8"/></svg>
<div class="t" style="top:457.88px;font-size:7.95px;color:#1c1c1c;left:1260.40px;transform:scaleY(1.1);">Core 5 T1 Ef...</div>
<div class="t" style="top:457.88px;font-size:7.95px;color:#1c1c1c;right:549.00px;transform:scaleY(1.1);">0.3 MHz</div>
<div class="t" style="top:457.88px;font-size:7.95px;color:#1c1c1c;right:489.00px;transform:scaleY(1.1);">0.3 MHz</div>
<div class="t" style="top:457.88px;font-size:7.95px;color:#1c1c1c;right:429.00px;transform:scaleY(1.1);">59.4 MHz</div>
<div class="t" style="top:457.88px;font-size:7.95px;color:#1c1c1c;right:369.00px;transform:scaleY(1.1);">10.7 MHz</div>
<div class="a" style="left:1247.75px;top:463.35px;width:308.25px;height:12.75px;background:#f0f0f0;"></div>
<svg style="left:1248.75px;top:465.52px" width="9" height="9"><circle cx="4.3" cy="4.3" r="3.7" fill="#f4f4f4" stroke="#5a5a5a" stroke-width="1"/><path d="M2.6 3.6L4.3 4.6" stroke="#777" stroke-width="0.8"/></svg>
<div class="t" style="top:470.62px;font-size:7.95px;color:#1c1c1c;left:1260.40px;transform:scaleY(1.1);">Core 6 T0 Ef...</div>
<div class="t" style="top:470.62px;font-size:7.95px;color:#1c1c1c;right:549.00px;transform:scaleY(1.1);">0.4 MHz</div>
<div class="t" style="top:470.62px;font-size:7.95px;color:#1c1c1c;right:489.00px;transform:scaleY(1.1);">0.3 MHz</div>
<div class="t" style="top:470.62px;font-size:7.95px;color:#1c1c1c;right:429.00px;transform:scaleY(1.1);">164.9 MHz</div>
<div class="t" style="top:470.62px;font-size:7.95px;color:#1c1c1c;right:369.00px;transform:scaleY(1.1);">15.0 MHz</div>
<svg style="left:1248.75px;top:478.27px" width="9" height="9"><circle cx="4.3" cy="4.3" r="3.7" fill="#f4f4f4" stroke="#5a5a5a" stroke-width="1"/><path d="M2.6 3.6L4.3 4.6" stroke="#777" stroke-width="0.8"/></svg>
<div class="t" style="top:483.38px;font-size:7.95px;color:#1c1c1c;left:1260.40px;transform:scaleY(1.1);">Core 6 T1 Ef...</div>
<div class="t" style="top:483.38px;font-size:7.95px;color:#1c1c1c;right:549.00px;transform:scaleY(1.1);">0.2 MHz</div>
<div class="t" style="top:483.38px;font-size:7.95px;color:#1c1c1c;right:489.00px;transform:scaleY(1.1);">0.2 MHz</div>
<div class="t" style="top:483.38px;font-size:7.95px;color:#1c1c1c;right:429.00px;transform:scaleY(1.1);">52.4 MHz</div>
<div class="t" style="top:483.38px;font-size:7.95px;color:#1c1c1c;right:369.00px;transform:scaleY(1.1);">6.2 MHz</div>
<div class="a" style="left:1247.75px;top:488.85px;width:308.25px;height:12.75px;background:#f0f0f0;"></div>
<svg style="left:1248.75px;top:491.02px" width="9" height="9"><circle cx="4.3" cy="4.3" r="3.7" fill="#f4f4f4" stroke="#5a5a5a" stroke-width="1"/><path d="M2.6 3.6L4.3 4.6" stroke="#777" stroke-width="0.8"/></svg>
<div class="t" style="top:496.12px;font-size:7.95px;color:#1c1c1c;left:1260.40px;transform:scaleY(1.1);">Core 7 T0 Ef...</div>
<div class="t" style="top:496.12px;font-size:7.95px;color:#1c1c1c;right:549.00px;transform:scaleY(1.1);">0.7 MHz</div>
<div class="t" style="top:496.12px;font-size:7.95px;color:#1c1c1c;right:489.00px;transform:scaleY(1.1);">0.2 MHz</div>
<div class="t" style="top:496.12px;font-size:7.95px;color:#1c1c1c;right:429.00px;transform:scaleY(1.1);">82.7 MHz</div>
<div class="t" style="top:496.12px;font-size:7.95px;color:#1c1c1c;right:369.00px;transform:scaleY(1.1);">7.8 MHz</div>
<svg style="left:1248.75px;top:503.77px" width="9" height="9"><circle cx="4.3" cy="4.3" r="3.7" fill="#f4f4f4" stroke="#5a5a5a" stroke-width="1"/><path d="M2.6 3.6L4.3 4.6" stroke="#777" stroke-width="0.8"/></svg>
<div class="t" style="top:508.88px;font-size:7.95px;color:#1c1c1c;left:1260.40px;transform:scaleY(1.1);">Core 7 T1 Ef...</div>
<div class="t" style="top:508.88px;font-size:7.95px;color:#1c1c1c;right:549.00px;transform:scaleY(1.1);">0.6 MHz</div>
<div class="t" style="top:508.88px;font-size:7.95px;color:#1c1c1c;right:489.00px;transform:scaleY(1.1);">0.6 MHz</div>
<div class="t" style="top:508.88px;font-size:7.95px;color:#1c1c1c;right:429.00px;transform:scaleY(1.1);">130.2 MHz</div>
<div class="t" style="top:508.88px;font-size:7.95px;color:#1c1c1c;right:369.00px;transform:scaleY(1.1);">8.9 MHz</div>
<div class="a" style="left:1247.75px;top:514.35px;width:308.25px;height:12.75px;background:#f0f0f0;"></div>
<svg style="left:1248.75px;top:516.53px" width="9" height="9"><circle cx="4.3" cy="4.3" r="3.7" fill="#f4f4f4" stroke="#5a5a5a" stroke-width="1"/><path d="M2.6 3.6L4.3 4.6" stroke="#777" stroke-width="0.8"/></svg>
<div class="t" style="top:521.62px;font-size:7.95px;color:#1c1c1c;left:1260.40px;transform:scaleY(1.1);">Core 8 T0 Ef...</div>
<div class="t" style="top:521.62px;font-size:7.95px;color:#1c1c1c;right:549.00px;transform:scaleY(1.1);">7.4 MHz</div>
<div class="t" style="top:521.62px;font-size:7.95px;color:#1c1c1c;right:489.00px;transform:scaleY(1.1);">3.9 MHz</div>
<div class="t" style="top:521.62px;font-size:7.95px;color:#1c1c1c;right:429.00px;transform:scaleY(1.1);">57.8 MHz</div>
<div class="t" style="top:521.62px;font-size:7.95px;color:#1c1c1c;right:369.00px;transform:scaleY(1.1);">13.2 MHz</div>
<svg style="left:1248.75px;top:529.28px" width="9" height="9"><circle cx="4.3" cy="4.3" r="3.7" fill="#f4f4f4" stroke="#5a5a5a" stroke-width="1"/><path d="M2.6 3.6L4.3 4.6" stroke="#777" stroke-width="0.8"/></svg>
<div class="t" style="top:534.38px;font-size:7.95px;color:#1c1c1c;left:1260.40px;transform:scaleY(1.1);">Core 8 T1 Ef...</div>
<div class="t" style="top:534.38px;font-size:7.95px;color:#1c1c1c;right:549.00px;transform:scaleY(1.1);">36.7 MHz</div>
<div class="t" style="top:534.38px;font-size:7.95px;color:#1c1c1c;right:489.00px;transform:scaleY(1.1);">32.6 MHz</div>
<div class="t" style="top:534.38px;font-size:7.95px;color:#1c1c1c;right:429.00px;transform:scaleY(1.1);">183.5 MHz</div>
<div class="t" style="top:534.38px;font-size:7.95px;color:#1c1c1c;right:369.00px;transform:scaleY(1.1);">53.3 MHz</div>
<div class="a" style="left:1247.75px;top:539.85px;width:308.25px;height:12.75px;background:#f0f0f0;"></div>
<svg style="left:1248.75px;top:542.03px" width="9" height="9"><circle cx="4.3" cy="4.3" r="3.7" fill="#f4f4f4" stroke="#5a5a5a" stroke-width="1"/><path d="M2.6 3.6L4.3 4.6" stroke="#777" stroke-width="0.8"/></svg>
<div class="t" style="top:547.12px;font-size:7.95px;color:#1c1c1c;left:1260.40px;transform:scaleY(1.1);">Core 9 T0 Ef...</div>
<div class="t" style="top:547.12px;font-size:7.95px;color:#1c1c1c;right:549.00px;transform:scaleY(1.1);">25.9 MHz</div>
<div class="t" style="top:547.12px;font-size:7.95px;color:#1c1c1c;right:489.00px;transform:scaleY(1.1);">20.1 MHz</div>
<div class="t" style="top:547.12px;font-size:7.95px;color:#1c1c1c;right:429.00px;transform:scaleY(1.1);">704.5 MHz</div>
<div class="t" style="top:547.12px;font-size:7.95px;color:#1c1c1c;right:369.00px;transform:scaleY(1.1);">119.0 MHz</div>
<svg style="left:1248.75px;top:554.78px" width="9" height="9"><circle cx="4.3" cy="4.3" r="3.7" fill="#f4f4f4" stroke="#5a5a5a" stroke-width="1"/><path d="M2.6 3.6L4.3 4.6" stroke="#777" stroke-width="0.8"/></svg>
<div class="t" style="top:559.88px;font-size:7.95px;color:#1c1c1c;left:1260.40px;transform:scaleY(1.1);">Core 9 T1 Ef...</div>
<div class="t" style="top:559.88px;font-size:7.95px;color:#1c1c1c;right:549.00px;transform:scaleY(1.1);">11.7 MHz</div>
<div class="t" style="top:559.88px;font-size:7.95px;color:#1c1c1c;right:489.00px;transform:scaleY(1.1);">11.7 MHz</div>
<div class="t" style="top:559.88px;font-size:7.95px;color:#1c1c1c;right:429.00px;transform:scaleY(1.1);">79.9 MHz</div>
<div class="t" style="top:559.88px;font-size:7.95px;color:#1c1c1c;right:369.00px;transform:scaleY(1.1);">26.7 MHz</div>
<div class="a" style="left:1247.75px;top:565.35px;width:308.25px;height:12.75px;background:#f0f0f0;"></div>
<svg style="left:1248.75px;top:567.53px" width="9" height="9"><circle cx="4.3" cy="4.3" r="3.7" fill="#f4f4f4" stroke="#5a5a5a" stroke-width="1"/><path d="M2.6 3.6L4.3 4.6" stroke="#777" stroke-width="0.8"/></svg>
<div class="t" style="top:572.62px;font-size:7.95px;color:#1c1c1c;left:1260.40px;transform:scaleY(1.1);">Core 10 T0 ...</div>
<div class="t" style="top:572.62px;font-size:7.95px;color:#1c1c1c;right:549.00px;transform:scaleY(1.1);">0.4 MHz</div>
<div class="t" style="top:572.62px;font-size:7.95px;color:#1c1c1c;right:489.00px;transform:scaleY(1.1);">0.4 MHz</div>
<div class="t" style="top:572.62px;font-size:7.95px;color:#1c1c1c;right:429.00px;transform:scaleY(1.1);">80.6 MHz</div>
<div class="t" style="top:572.62px;font-size:7.95px;color:#1c1c1c;right:369.00px;transform:scaleY(1.1);">7.9 MHz</div>
<svg style="left:1248.75px;top:580.28px" width="9" height="9"><circle cx="4.3" cy="4.3" r="3.7" fill="#f4f4f4" stroke="#5a5a5a" stroke-width="1"/><path d="M2.6 3.6L4.3 4.6" stroke="#777" stroke-width="0.8"/></svg>
<div class="t" style="top:585.38px;font-size:7.95px;color:#1c1c1c;left:1260.40px;transform:scaleY(1.1);">Core 10 T1 ...</div>
<div class="t" style="top:585.38px;font-size:7.95px;color:#1c1c1c;right:549.00px;transform:scaleY(1.1);">9.3 MHz</div>
<div class="t" style="top:585.38px;font-size:7.95px;color:#1c1c1c;right:489.00px;transform:scaleY(1.1);">1.5 MHz</div>
<div class="t" style="top:585.38px;font-size:7.95px;color:#1c1c1c;right:429.00px;transform:scaleY(1.1);">87.6 MHz</div>
<div class="t" style="top:585.38px;font-size:7.95px;color:#1c1c1c;right:369.00px;transform:scaleY(1.1);">33.0 MHz</div>
<div class="a" style="left:1247.75px;top:590.85px;width:308.25px;height:12.75px;background:#f0f0f0;"></div>
<svg style="left:1248.75px;top:593.03px" width="9" height="9"><circle cx="4.3" cy="4.3" r="3.7" fill="#f4f4f4" stroke="#5a5a5a" stroke-width="1"/><path d="M2.6 3.6L4.3 4.6" stroke="#777" stroke-width="0.8"/></svg>
<div class="t" style="top:598.12px;font-size:7.95px;color:#1c1c1c;left:1260.40px;transform:scaleY(1.1);">Core 11 T0 ...</div>
<div class="t" style="top:598.12px;font-size:7.95px;color:#1c1c1c;right:549.00px;transform:scaleY(1.1);">148.9 MHz</div>
<div class="t" style="top:598.12px;font-size:7.95px;color:#1c1c1c;right:489.00px;transform:scaleY(1.1);">79.5 MHz</div>
<div class="t" style="top:598.12px;font-size:7.95px;color:#1c1c1c;right:429.00px;transform:scaleY(1.1);">580.7 MHz</div>
<div class="t" style="top:598.12px;font-size:7.95px;color:#1c1c1c;right:369.00px;transform:scaleY(1.1);">266.4 MHz</div>
<svg style="left:1248.75px;top:605.78px" width="9" height="9"><circle cx="4.3" cy="4.3" r="3.7" fill="#f4f4f4" stroke="#5a5a5a" stroke-width="1"/><path d="M2.6 3.6L4.3 4.6" stroke="#777" stroke-width="0.8"/></svg>
<div class="t" style="top:610.88px;font-size:7.95px;color:#1c1c1c;left:1260.40px;transform:scaleY(1.1);">Core 11 T1 ...</div>
<div class="t" style="top:610.88px;font-size:7.95px;color:#1c1c1c;right:549.00px;transform:scaleY(1.1);">93.6 MHz</div>
<div class="t" style="top:610.88px;font-size:7.95px;color:#1c1c1c;right:489.00px;transform:scaleY(1.1);">80.3 MHz</div>
<div class="t" style="top:610.88px;font-size:7.95px;color:#1c1c1c;right:429.00px;transform:scaleY(1.1);">420.1 MHz</div>
<div class="t" style="top:610.88px;font-size:7.95px;color:#1c1c1c;right:369.00px;transform:scaleY(1.1);">156.8 MHz</div>
<div class="a" style="left:1247.75px;top:616.35px;width:308.25px;height:12.75px;background:#f0f0f0;"></div>
<svg style="left:1248.75px;top:618.53px" width="9" height="9"><circle cx="4.3" cy="4.3" r="3.7" fill="#f4f4f4" stroke="#5a5a5a" stroke-width="1"/><path d="M2.6 3.6L4.3 4.6" stroke="#777" stroke-width="0.8"/></svg>
<div class="t" style="top:623.62px;font-size:7.95px;color:#1c1c1c;left:1260.40px;transform:scaleY(1.1);">Core 12 T0 ...</div>
<div class="t" style="top:623.62px;font-size:7.95px;color:#1c1c1c;right:549.00px;transform:scaleY(1.1);">0.9 MHz</div>
<div class="t" style="top:623.62px;font-size:7.95px;color:#1c1c1c;right:489.00px;transform:scaleY(1.1);">0.5 MHz</div>
<div class="t" style="top:623.62px;font-size:7.95px;color:#1c1c1c;right:429.00px;transform:scaleY(1.1);">70.6 MHz</div>
<div class="t" style="top:623.62px;font-size:7.95px;color:#1c1c1c;right:369.00px;transform:scaleY(1.1);">10.2 MHz</div>
<svg style="left:1248.75px;top:631.28px" width="9" height="9"><circle cx="4.3" cy="4.3" r="3.7" fill="#f4f4f4" stroke="#5a5a5a" stroke-width="1"/><path d="M2.6 3.6L4.3 4.6" stroke="#777" stroke-width="0.8"/></svg>
<div class="t" style="top:636.38px;font-size:7.95px;color:#1c1c1c;left:1260.40px;transform:scaleY(1.1);">Core 13 T0 ...</div>
<div class="t" style="top:636.38px;font-size:7.95px;color:#1c1c1c;right:549.00px;transform:scaleY(1.1);">10.8 MHz</div>
<div class="t" style="top:636.38px;font-size:7.95px;color:#1c1c1c;right:489.00px;transform:scaleY(1.1);">10.8 MHz</div>
<div class="t" style="top:636.38px;font-size:7.95px;color:#1c1c1c;right:429.00px;transform:scaleY(1.1);">75.9 MHz</div>
<div class="t" style="top:636.38px;font-size:7.95px;color:#1c1c1c;right:369.00px;transform:scaleY(1.1);">26.7 MHz</div>
<div class="a" style="left:1247.75px;top:641.85px;width:308.25px;height:12.75px;background:#f0f0f0;"></div>
<svg style="left:1248.75px;top:644.03px" width="9" height="9"><circle cx="4.3" cy="4.3" r="3.7" fill="#f4f4f4" stroke="#5a5a5a" stroke-width="1"/><path d="M2.6 3.6L4.3 4.6" stroke="#777" stroke-width="0.8"/></svg>
<div class="t" style="top:649.12px;font-size:7.95px;color:#1c1c1c;left:1260.40px;transform:scaleY(1.1);">Core 13 T1 ...</div>
<div class="t" style="top:649.12px;font-size:7.95px;color:#1c1c1c;right:549.00px;transform:scaleY(1.1);">10.4 MHz</div>
<div class="t" style="top:649.12px;font-size:7.95px;color:#1c1c1c;right:489.00px;transform:scaleY(1.1);">8.4 MHz</div>
<div class="t" style="top:649.12px;font-size:7.95px;color:#1c1c1c;right:429.00px;transform:scaleY(1.1);">70.4 MHz</div>
<div class="t" style="top:649.12px;font-size:7.95px;color:#1c1c1c;right:369.00px;transform:scaleY(1.1);">18.1 MHz</div>
<svg style="left:1248.75px;top:656.78px" width="9" height="9"><circle cx="4.3" cy="4.3" r="3.7" fill="#f4f4f4" stroke="#5a5a5a" stroke-width="1"/><path d="M2.6 3.6L4.3 4.6" stroke="#777" stroke-width="0.8"/></svg>
<div class="t" style="top:661.88px;font-size:7.95px;color:#1c1c1c;left:1260.40px;transform:scaleY(1.1);">Core 14 T0 ...</div>
<div class="t" style="top:661.88px;font-size:7.95px;color:#1c1c1c;right:549.00px;transform:scaleY(1.1);">0.4 MHz</div>
<div class="t" style="top:661.88px;font-size:7.95px;color:#1c1c1c;right:489.00px;transform:scaleY(1.1);">0.3 MHz</div>
<div class="t" style="top:661.88px;font-size:7.95px;color:#1c1c1c;right:429.00px;transform:scaleY(1.1);">52.5 MHz</div>
<div class="t" style="top:661.88px;font-size:7.95px;color:#1c1c1c;right:369.00px;transform:scaleY(1.1);">11.5 MHz</div>
<div class="a" style="left:1247.75px;top:667.35px;width:308.25px;height:12.75px;background:#f0f0f0;"></div>
<svg style="left:1248.75px;top:669.53px" width="9" height="9"><circle cx="4.3" cy="4.3" r="3.7" fill="#f4f4f4" stroke="#5a5a5a" stroke-width="1"/><path d="M2.6 3.6L4.3 4.6" stroke="#777" stroke-width="0.8"/></svg>
<div class="t" style="top:674.62px;font-size:7.95px;color:#1c1c1c;left:1260.40px;transform:scaleY(1.1);">Core 14 T1 ...</div>
<div class="t" style="top:674.62px;font-size:7.95px;color:#1c1c1c;right:549.00px;transform:scaleY(1.1);">2.6 MHz</div>
<div class="t" style="top:674.62px;font-size:7.95px;color:#1c1c1c;right:489.00px;transform:scaleY(1.1);">0.4 MHz</div>
<div class="t" style="top:674.62px;font-size:7.95px;color:#1c1c1c;right:429.00px;transform:scaleY(1.1);">68.3 MHz</div>
<div class="t" style="top:674.62px;font-size:7.95px;color:#1c1c1c;right:369.00px;transform:scaleY(1.1);">11.7 MHz</div>
<svg style="left:1248.75px;top:682.28px" width="9" height="9"><circle cx="4.3" cy="4.3" r="3.7" fill="#f4f4f4" stroke="#5a5a5a" stroke-width="1"/><path d="M2.6 3.6L4.3 4.6" stroke="#777" stroke-width="0.8"/></svg>
<div class="t" style="top:687.38px;font-size:7.95px;color:#1c1c1c;left:1260.40px;transform:scaleY(1.1);">Core 15 T0 ...</div>
<div class="t" style="top:687.38px;font-size:7.95px;color:#1c1c1c;right:549.00px;transform:scaleY(1.1);">7.7 MHz</div>
<div class="t" style="top:687.38px;font-size:7.95px;color:#1c1c1c;right:489.00px;transform:scaleY(1.1);">3.0 MHz</div>
<div class="t" style="top:687.38px;font-size:7.95px;color:#1c1c1c;right:429.00px;transform:scaleY(1.1);">301.2 MHz</div>
<div class="t" style="top:687.38px;font-size:7.95px;color:#1c1c1c;right:369.00px;transform:scaleY(1.1);">37.8 MHz</div>
<div class="a" style="left:1247.75px;top:692.85px;width:308.25px;height:12.75px;background:#f0f0f0;"></div>
<svg style="left:1248.75px;top:695.03px" width="9" height="9"><circle cx="4.3" cy="4.3" r="3.7" fill="#f4f4f4" stroke="#5a5a5a" stroke-width="1"/><path d="M2.6 3.6L4.3 4.6" stroke="#777" stroke-width="0.8"/></svg>
<div class="t" style="top:700.12px;font-size:7.95px;color:#1c1c1c;left:1260.40px;transform:scaleY(1.1);">Core 15 T1 ...</div>
<div class="t" style="top:700.12px;font-size:7.95px;color:#1c1c1c;right:549.00px;transform:scaleY(1.1);">2.8 MHz</div>
<div class="t" style="top:700.12px;font-size:7.95px;color:#1c1c1c;right:489.00px;transform:scaleY(1.1);">0.3 MHz</div>
<div class="t" style="top:700.12px;font-size:7.95px;color:#1c1c1c;right:429.00px;transform:scaleY(1.1);">75.6 MHz</div>
<div class="t" style="top:700.12px;font-size:7.95px;color:#1c1c1c;right:369.00px;transform:scaleY(1.1);">9.3 MHz</div>
<svg style="left:1237.50px;top:707.78px" width="9" height="9"><circle cx="4.3" cy="4.3" r="3.7" fill="#f4f4f4" stroke="#5a5a5a" stroke-width="1"/><path d="M2.6 3.6L4.3 4.6" stroke="#777" stroke-width="0.8"/></svg>
<div class="t" style="top:712.88px;font-size:7.95px;color:#1c1c1c;left:1248.00px;transform:scaleY(1.1);">Average Effecti...</div>
<div class="t" style="top:712.88px;font-size:7.95px;color:#1c1c1c;right:549.00px;transform:scaleY(1.1);">17.1 MHz</div>
<div class="t" style="top:712.88px;font-size:7.95px;color:#1c1c1c;right:489.00px;transform:scaleY(1.1);">17.1 MHz</div>
<div class="t" style="top:712.88px;font-size:7.95px;color:#1c1c1c;right:429.00px;transform:scaleY(1.1);">1,340.8 MHz</div>
<div class="t" style="top:712.88px;font-size:7.95px;color:#1c1c1c;right:369.00px;transform:scaleY(1.1);">157.3 MHz</div>
<div class="a" style="left:1236.50px;top:718.35px;width:319.50px;height:12.75px;background:#f0f0f0;"></div>
<svg style="left:1237.50px;top:720.53px" width="9" height="9"><circle cx="4.3" cy="4.3" r="3.7" fill="#f4f4f4" stroke="#5a5a5a" stroke-width="1"/><path d="M2.6 3.6L4.3 4.6" stroke="#777" stroke-width="0.8"/></svg>
<div class="t" style="top:725.62px;font-size:7.95px;color:#1c1c1c;left:1248.00px;transform:scaleY(1.1);">Max CPU/Threa...</div>
<div class="t" style="top:725.62px;font-size:7.95px;color:#1c1c1c;right:549.00px;transform:scaleY(1.1);">2.3 %</div>
<div class="t" style="top:725.62px;font-size:7.95px;color:#1c1c1c;right:489.00px;transform:scaleY(1.1);">2.3 %</div>
<div class="t" style="top:725.62px;font-size:7.95px;color:#1c1c1c;right:429.00px;transform:scaleY(1.1);">49.6 %</div>
<div class="t" style="top:725.62px;font-size:7.95px;color:#1c1c1c;right:369.00px;transform:scaleY(1.1);">9.2 %</div>
<svg style="left:1237.50px;top:733.28px" width="9" height="9"><circle cx="4.3" cy="4.3" r="3.7" fill="#f4f4f4" stroke="#5a5a5a" stroke-width="1"/><path d="M2.6 3.6L4.3 4.6" stroke="#777" stroke-width="0.8"/></svg>
<div class="t" style="top:738.38px;font-size:7.95px;color:#1c1c1c;left:1248.00px;transform:scaleY(1.1);">Total CPU Usage</div>
<div class="t" style="top:738.38px;font-size:7.95px;color:#1c1c1c;right:549.00px;transform:scaleY(1.1);">0.3 %</div>
<div class="t" style="top:738.38px;font-size:7.95px;color:#1c1c1c;right:489.00px;transform:scaleY(1.1);">0.2 %</div>
<div class="t" style="top:738.38px;font-size:7.95px;color:#1c1c1c;right:429.00px;transform:scaleY(1.1);">2.2 %</div>
<div class="t" style="top:738.38px;font-size:7.95px;color:#1c1c1c;right:369.00px;transform:scaleY(1.1);">0.9 %</div>
<div class="a" style="left:1247.00px;top:743.85px;width:309.00px;height:12.75px;background:#f0f0f0;"></div>
<div class="a" style="left:1247.00px;top:756.60px;width:309.00px;height:11.25px;background:#dcdcdc;"></div>
<div class="a" style="left:1316.00px;top:756.60px;width:1.20px;height:11.25px;background:#ffffff;"></div>
<div class="a" style="left:1376.00px;top:756.60px;width:1.20px;height:11.25px;background:#ffffff;"></div>
<div class="a" style="left:1436.00px;top:756.60px;width:1.20px;height:11.25px;background:#ffffff;"></div>
<div class="a" style="left:1496.00px;top:756.60px;width:1.20px;height:11.25px;background:#ffffff;"></div>
<svg style="left:1224.00px;top:761.88px" width="7" height="4"><path d="M0.5 0.5L3.5 3.3L6.5 0.5" stroke="#555" fill="none" stroke-width="0.9"/></svg>
<svg style="left:1236.50px;top:757.08px" width="8" height="12"><rect x="1" y="0.5" width="6" height="11" rx="0.6" fill="#3a3a3a"/><rect x="2" y="1.2" width="2" height="9.5" fill="#666"/><path d="M0 2H1M0 4H1M0 6H1M0 8H1M0 10H1M7 2H8M7 4H8M7 6H8M7 8H8M7 10H8" stroke="#555" stroke-width="0.7"/></svg>
<div class="t" style="top:763.88px;font-size:7.95px;color:#333;left:1249.00px;transform:scaleY(1.1);font-style:italic;">CPU [#0]: AMD...</div>
<div class="a" style="left:1236.50px;top:769.35px;width:319.50px;height:12.75px;background:#f0f0f0;"></div>
<svg style="left:1237.50px;top:769.33px" width="7" height="13"><rect x="2.3" y="0.5" width="2.4" height="9" rx="1.2" fill="#f2f2f2" stroke="#9aa" stroke-width="0.6"/><rect x="2.9" y="4" width="1.2" height="6" fill="#f08040"/><circle cx="3.5" cy="10.3" r="2.2" fill="#f07838" stroke="#8aa0b8" stroke-width="0.6"/></svg>
<div class="t" style="top:776.62px;font-size:7.95px;color:#1c1c1c;left:1248.00px;transform:scaleY(1.1);">CPU (Tctl/Tdie)</div>
<div class="t" style="top:776.62px;font-size:7.95px;color:#1c1c1c;right:549.00px;transform:scaleY(1.1);">33.1 °C</div>
<div class="t" style="top:776.62px;font-size:7.95px;color:#1c1c1c;right:489.00px;transform:scaleY(1.1);">33.1 °C</div>
<div class="t" style="top:776.62px;font-size:7.95px;color:#1c1c1c;right:429.00px;transform:scaleY(1.1);">41.8 °C</div>
<div class="t" style="top:776.62px;font-size:7.95px;color:#1c1c1c;right:369.00px;transform:scaleY(1.1);">36.8 °C</div>
<svg style="left:1237.50px;top:782.08px" width="7" height="13"><rect x="2.3" y="0.5" width="2.4" height="9" rx="1.2" fill="#f2f2f2" stroke="#9aa" stroke-width="0.6"/><rect x="2.9" y="4" width="1.2" height="6" fill="#f08040"/><circle cx="3.5" cy="10.3" r="2.2" fill="#f07838" stroke="#8aa0b8" stroke-width="0.6"/></svg>
<div class="t" style="top:789.38px;font-size:7.95px;color:#1c1c1c;left:1248.00px;transform:scaleY(1.1);">CPU Die (avera...</div>
<div class="t" style="top:789.38px;font-size:7.95px;color:#1c1c1c;right:549.00px;transform:scaleY(1.1);">27.9 °C</div>
<div class="t" style="top:789.38px;font-size:7.95px;color:#1c1c1c;right:489.00px;transform:scaleY(1.1);">27.9 °C</div>
<div class="t" style="top:789.38px;font-size:7.95px;color:#1c1c1c;right:429.00px;transform:scaleY(1.1);">52.6 °C</div>
<div class="t" style="top:789.38px;font-size:7.95px;color:#1c1c1c;right:369.00px;transform:scaleY(1.1);">30.4 °C</div>
<div class="a" style="left:1236.50px;top:794.85px;width:319.50px;height:12.75px;background:#f0f0f0;"></div>
<svg style="left:1237.50px;top:794.83px" width="7" height="13"><rect x="2.3" y="0.5" width="2.4" height="9" rx="1.2" fill="#f2f2f2" stroke="#9aa" stroke-width="0.6"/><rect x="2.9" y="4" width="1.2" height="6" fill="#f08040"/><circle cx="3.5" cy="10.3" r="2.2" fill="#f07838" stroke="#8aa0b8" stroke-width="0.6"/></svg>
<div class="t" style="top:802.12px;font-size:7.95px;color:#1c1c1c;left:1248.00px;transform:scaleY(1.1);">CPU CCD1 (Tdie)</div>
<div class="t" style="top:802.12px;font-size:7.95px;color:#1c1c1c;right:549.00px;transform:scaleY(1.1);">29.0 °C</div>
<div class="t" style="top:802.12px;font-size:7.95px;color:#1c1c1c;right:489.00px;transform:scaleY(1.1);">27.5 °C</div>
<div class="t" style="top:802.12px;font-size:7.95px;color:#1c1c1c;right:429.00px;transform:scaleY(1.1);">31.5 °C</div>
<div class="t" style="top:802.12px;font-size:7.95px;color:#1c1c1c;right:369.00px;transform:scaleY(1.1);">29.1 °C</div>
<svg style="left:1237.50px;top:807.58px" width="7" height="13"><rect x="2.3" y="0.5" width="2.4" height="9" rx="1.2" fill="#f2f2f2" stroke="#9aa" stroke-width="0.6"/><rect x="2.9" y="4" width="1.2" height="6" fill="#f08040"/><circle cx="3.5" cy="10.3" r="2.2" fill="#f07838" stroke="#8aa0b8" stroke-width="0.6"/></svg>
<div class="t" style="top:814.88px;font-size:7.95px;color:#1c1c1c;left:1248.00px;transform:scaleY(1.1);">CPU CCD2 (Tdie)</div>
<div class="t" style="top:814.88px;font-size:7.95px;color:#1c1c1c;right:549.00px;transform:scaleY(1.1);">29.3 °C</div>
<div class="t" style="top:814.88px;font-size:7.95px;color:#1c1c1c;right:489.00px;transform:scaleY(1.1);">28.3 °C</div>
<div class="t" style="top:814.88px;font-size:7.95px;color:#1c1c1c;right:429.00px;transform:scaleY(1.1);">33.0 °C</div>
<div class="t" style="top:814.88px;font-size:7.95px;color:#1c1c1c;right:369.00px;transform:scaleY(1.1);">29.8 °C</div>
<div class="a" style="left:1236.50px;top:820.35px;width:319.50px;height:12.75px;background:#f0f0f0;"></div>
<svg style="left:1237.50px;top:820.33px" width="8" height="13"><path d="M4.5 0.5L1 6.8H3.6L1.8 12.5L7.2 5.2H4.6L6.5 0.5Z" fill="#ffe04a" stroke="#d88a10" stroke-width="0.8"/></svg>
<div class="t" style="top:827.62px;font-size:7.95px;color:#1c1c1c;left:1248.00px;transform:scaleY(1.1);">CPU Core Volta...</div>
<div class="t" style="top:827.62px;font-size:7.95px;color:#1c1c1c;right:549.00px;transform:scaleY(1.1);">1.100 V</div>
<div class="t" style="top:827.62px;font-size:7.95px;color:#1c1c1c;right:489.00px;transform:scaleY(1.1);">1.100 V</div>
<div class="t" style="top:827.62px;font-size:7.95px;color:#1c1c1c;right:429.00px;transform:scaleY(1.1);">1.475 V</div>
<div class="t" style="top:827.62px;font-size:7.95px;color:#1c1c1c;right:369.00px;transform:scaleY(1.1);">1.171 V</div>
<svg style="left:1237.50px;top:833.08px" width="8" height="13"><path d="M4.5 0.5L1 6.8H3.6L1.8 12.5L7.2 5.2H4.6L6.5 0.5Z" fill="#ffe04a" stroke="#d88a10" stroke-width="0.8"/></svg>
<div class="t" style="top:840.38px;font-size:7.95px;color:#1c1c1c;left:1248.00px;transform:scaleY(1.1);">SoC Voltage (S...</div>
<div class="t" style="top:840.38px;font-size:7.95px;color:#1c1c1c;right:549.00px;transform:scaleY(1.1);">1.150 V</div>
<div class="t" style="top:840.38px;font-size:7.95px;color:#1c1c1c;right:489.00px;transform:scaleY(1.1);">1.150 V</div>
<div class="t" style="top:840.38px;font-size:7.95px;color:#1c1c1c;right:429.00px;transform:scaleY(1.1);">1.150 V</div>
<div class="t" style="top:840.38px;font-size:7.95px;color:#1c1c1c;right:369.00px;transform:scaleY(1.1);">1.150 V</div>
<div class="a" style="left:1236.50px;top:845.85px;width:319.50px;height:12.75px;background:#f0f0f0;"></div>
<svg style="left:1237.50px;top:845.83px" width="8" height="13"><path d="M4.5 0.5L1 6.8H3.6L1.8 12.5L7.2 5.2H4.6L6.5 0.5Z" fill="#ffe04a" stroke="#d88a10" stroke-width="0.8"/></svg>
<div class="t" style="top:853.12px;font-size:7.95px;color:#1c1c1c;left:1248.00px;transform:scaleY(1.1);">CPU Core VID (...</div>
<div class="t" style="top:853.12px;font-size:7.95px;color:#1c1c1c;right:549.00px;transform:scaleY(1.1);">1.100 V</div>
<div class="t" style="top:853.12px;font-size:7.95px;color:#1c1c1c;right:489.00px;transform:scaleY(1.1);">1.100 V</div>
<div class="t" style="top:853.12px;font-size:7.95px;color:#1c1c1c;right:429.00px;transform:scaleY(1.1);">1.475 V</div>
<div class="t" style="top:853.12px;font-size:7.95px;color:#1c1c1c;right:369.00px;transform:scaleY(1.1);">1.171 V</div>
<svg style="left:1237.50px;top:858.58px" width="8" height="13"><path d="M4.5 0.5L1 6.8H3.6L1.8 12.5L7.2 5.2H4.6L6.5 0.5Z" fill="#ffe04a" stroke="#d88a10" stroke-width="0.8"/></svg>
<div class="t" style="top:865.88px;font-size:7.95px;color:#1c1c1c;left:1248.00px;transform:scaleY(1.1);">CPU Core Curre...</div>
<div class="t" style="top:865.88px;font-size:7.95px;color:#1c1c1c;right:549.00px;transform:scaleY(1.1);">0.267 A</div>
<div class="t" style="top:865.88px;font-size:7.95px;color:#1c1c1c;right:489.00px;transform:scaleY(1.1);">0.250 A</div>
<div class="t" style="top:865.88px;font-size:7.95px;color:#1c1c1c;right:429.00px;transform:scaleY(1.1);">19.750 A</div>
<div class="t" style="top:865.88px;font-size:7.95px;color:#1c1c1c;right:369.00px;transform:scaleY(1.1);">4.542 A</div>
<div class="a" style="left:1236.50px;top:871.35px;width:319.50px;height:12.75px;background:#f0f0f0;"></div>
<svg style="left:1237.50px;top:871.33px" width="8" height="13"><path d="M4.5 0.5L1 6.8H3.6L1.8 12.5L7.2 5.2H4.6L6.5 0.5Z" fill="#ffe04a" stroke="#d88a10" stroke-width="0.8"/></svg>
<div class="t" style="top:878.62px;font-size:7.95px;color:#1c1c1c;left:1248.00px;transform:scaleY(1.1);">SoC Current (S...</div>
<div class="t" style="top:878.62px;font-size:7.95px;color:#1c1c1c;right:549.00px;transform:scaleY(1.1);">17.388 A</div>
<div class="t" style="top:878.62px;font-size:7.95px;color:#1c1c1c;right:489.00px;transform:scaleY(1.1);">17.388 A</div>
<div class="t" style="top:878.62px;font-size:7.95px;color:#1c1c1c;right:429.00px;transform:scaleY(1.1);">20.152 A</div>
<div class="t" style="top:878.62px;font-size:7.95px;color:#1c1c1c;right:369.00px;transform:scaleY(1.1);">18.627 A</div>
<svg style="left:1237.50px;top:884.08px" width="8" height="13"><path d="M4.5 0.5L1 6.8H3.6L1.8 12.5L7.2 5.2H4.6L6.5 0.5Z" fill="#ffe04a" stroke="#d88a10" stroke-width="0.8"/></svg>
<div class="t" style="top:891.38px;font-size:7.95px;color:#1c1c1c;left:1248.00px;transform:scaleY(1.1);">CPU TDC</div>
<div class="t" style="top:891.38px;font-size:7.95px;color:#1c1c1c;right:549.00px;transform:scaleY(1.1);">0.266 A</div>
<div class="t" style="top:891.38px;font-size:7.95px;color:#1c1c1c;right:489.00px;transform:scaleY(1.1);">0.254 A</div>
<div class="t" style="top:891.38px;font-size:7.95px;color:#1c1c1c;right:429.00px;transform:scaleY(1.1);">19.945 A</div>
<div class="t" style="top:891.38px;font-size:7.95px;color:#1c1c1c;right:369.00px;transform:scaleY(1.1);">3.704 A</div>
<div class="a" style="left:1236.50px;top:896.85px;width:319.50px;height:12.75px;background:#f0f0f0;"></div>
<svg style="left:1237.50px;top:896.83px" width="8" height="13"><path d="M4.5 0.5L1 6.8H3.6L1.8 12.5L7.2 5.2H4.6L6.5 0.5Z" fill="#ffe04a" stroke="#d88a10" stroke-width="0.8"/></svg>
<div class="t" style="top:904.12px;font-size:7.95px;color:#1c1c1c;left:1248.00px;transform:scaleY(1.1);">CPU EDC</div>
<div class="t" style="top:904.12px;font-size:7.95px;color:#1c1c1c;right:549.00px;transform:scaleY(1.1);">0.566 A</div>
<div class="t" style="top:904.12px;font-size:7.95px;color:#1c1c1c;right:489.00px;transform:scaleY(1.1);">0.563 A</div>
<div class="t" style="top:904.12px;font-size:7.95px;color:#1c1c1c;right:429.00px;transform:scaleY(1.1);">19.945 A</div>
<div class="t" style="top:904.12px;font-size:7.95px;color:#1c1c1c;right:369.00px;transform:scaleY(1.1);">5.384 A</div>
<svg style="left:1237.50px;top:909.58px" width="8" height="13"><path d="M4.5 0.5L1 6.8H3.6L1.8 12.5L7.2 5.2H4.6L6.5 0.5Z" fill="#ffe04a" stroke="#d88a10" stroke-width="0.8"/></svg>
<div class="t" style="top:916.88px;font-size:7.95px;color:#1c1c1c;left:1248.00px;transform:scaleY(1.1);">CPU Package P...</div>
<div class="t" style="top:916.88px;font-size:7.95px;color:#1c1c1c;right:549.00px;transform:scaleY(1.1);">36.039 W</div>
<div class="t" style="top:916.88px;font-size:7.95px;color:#1c1c1c;right:489.00px;transform:scaleY(1.1);">33.546 W</div>
<div class="t" style="top:916.88px;font-size:7.95px;color:#1c1c1c;right:429.00px;transform:scaleY(1.1);">54.776 W</div>
<div class="t" style="top:916.88px;font-size:7.95px;color:#1c1c1c;right:369.00px;transform:scaleY(1.1);">41.643 W</div>
<div class="a" style="left:1258.40px;top:922.35px;width:297.60px;height:12.75px;background:#f0f0f0;"></div>
<svg style="left:1237.50px;top:926.12px" width="4" height="7"><path d="M0.5 0.5L3.3 3.5L0.5 6.5" stroke="#555" fill="none" stroke-width="0.9"/></svg>
<svg style="left:1250.00px;top:922.33px" width="8" height="13"><path d="M4.5 0.5L1 6.8H3.6L1.8 12.5L7.2 5.2H4.6L6.5 0.5Z" fill="#ffe04a" stroke="#d88a10" stroke-width="0.8"/></svg>
<div class="t" style="top:929.62px;font-size:7.95px;color:#1c1c1c;left:1260.40px;transform:scaleY(1.1);">Core Powers</div>
<div class="t" style="top:929.62px;font-size:7.95px;color:#222;right:549.00px;transform:scaleY(1.1);">0.199 W</div>
<div class="t" style="top:929.62px;font-size:7.95px;color:#222;right:489.00px;transform:scaleY(1.1);">0.004 W</div>
<div class="t" style="top:929.62px;font-size:7.95px;color:#222;right:429.00px;transform:scaleY(1.1);">30.521 W</div>
<div class="t" style="top:929.62px;font-size:7.95px;color:#222;right:369.00px;transform:scaleY(1.1);">0.524 W</div>
<svg style="left:1237.50px;top:935.08px" width="8" height="13"><path d="M4.5 0.5L1 6.8H3.6L1.8 12.5L7.2 5.2H4.6L6.5 0.5Z" fill="#ffe04a" stroke="#d88a10" stroke-width="0.8"/></svg>
<div class="t" style="top:942.38px;font-size:7.95px;color:#1c1c1c;left:1248.00px;transform:scaleY(1.1);">CPU Core Powe...</div>
<div class="t" style="top:942.38px;font-size:7.95px;color:#1c1c1c;right:549.00px;transform:scaleY(1.1);">0.293 W</div>
<div class="t" style="top:942.38px;font-size:7.95px;color:#1c1c1c;right:489.00px;transform:scaleY(1.1);">0.275 W</div>
<div class="t" style="top:942.38px;font-size:7.95px;color:#1c1c1c;right:429.00px;transform:scaleY(1.1);">29.131 W</div>
<div class="t" style="top:942.38px;font-size:7.95px;color:#1c1c1c;right:369.00px;transform:scaleY(1.1);">5.925 W</div>
<div class="a" style="left:1236.50px;top:947.85px;width:319.50px;height:12.75px;background:#f0f0f0;"></div>
<svg style="left:1237.50px;top:947.83px" width="8" height="13"><path d="M4.5 0.5L1 6.8H3.6L1.8 12.5L7.2 5.2H4.6L6.5 0.5Z" fill="#ffe04a" stroke="#d88a10" stroke-width="0.8"/></svg>
<div class="t" style="top:955.12px;font-size:7.95px;color:#1c1c1c;left:1248.00px;transform:scaleY(1.1);">CPU SoC Power...</div>
<div class="t" style="top:955.12px;font-size:7.95px;color:#1c1c1c;right:549.00px;transform:scaleY(1.1);">19.996 W</div>
<div class="t" style="top:955.12px;font-size:7.95px;color:#1c1c1c;right:489.00px;transform:scaleY(1.1);">19.996 W</div>
<div class="t" style="top:955.12px;font-size:7.95px;color:#1c1c1c;right:429.00px;transform:scaleY(1.1);">23.175 W</div>
<div class="t" style="top:955.12px;font-size:7.95px;color:#1c1c1c;right:369.00px;transform:scaleY(1.1);">21.421 W</div>
<svg style="left:1237.50px;top:960.58px" width="8" height="13"><path d="M4.5 0.5L1 6.8H3.6L1.8 12.5L7.2 5.2H4.6L6.5 0.5Z" fill="#ffe04a" stroke="#d88a10" stroke-width="0.8"/></svg>
<div class="t" style="top:967.88px;font-size:7.95px;color:#1c1c1c;left:1248.00px;transform:scaleY(1.1);">Core+SoC Pow...</div>
<div class="t" style="top:967.88px;font-size:7.95px;color:#1c1c1c;right:549.00px;transform:scaleY(1.1);">20.290 W</div>
<div class="t" style="top:967.88px;font-size:7.95px;color:#1c1c1c;right:489.00px;transform:scaleY(1.1);">20.290 W</div>
<div class="t" style="top:967.88px;font-size:7.95px;color:#1c1c1c;right:429.00px;transform:scaleY(1.1);">50.922 W</div>
<div class="t" style="top:967.88px;font-size:7.95px;color:#1c1c1c;right:369.00px;transform:scaleY(1.1);">27.347 W</div>
<div class="a" style="left:1236.50px;top:973.35px;width:319.50px;height:12.75px;background:#f0f0f0;"></div>
<svg style="left:1237.50px;top:973.33px" width="8" height="13"><path d="M4.5 0.5L1 6.8H3.6L1.8 12.5L7.2 5.2H4.6L6.5 0.5Z" fill="#ffe04a" stroke="#d88a10" stroke-width="0.8"/></svg>
<div class="t" style="top:980.62px;font-size:7.95px;color:#1c1c1c;left:1248.00px;transform:scaleY(1.1);">CPU PPT</div>
<div class="t" style="top:980.62px;font-size:7.95px;color:#1c1c1c;right:549.00px;transform:scaleY(1.1);">30.454 W</div>
<div class="t" style="top:980.62px;font-size:7.95px;color:#1c1c1c;right:489.00px;transform:scaleY(1.1);">30.454 W</div>
<div class="t" style="top:980.62px;font-size:7.95px;color:#1c1c1c;right:429.00px;transform:scaleY(1.1);">63.553 W</div>
<div class="t" style="top:980.62px;font-size:7.95px;color:#1c1c1c;right:369.00px;transform:scaleY(1.1);">37.840 W</div>
<svg style="left:1237.50px;top:988.28px" width="9" height="9"><circle cx="4.3" cy="4.3" r="3.7" fill="#f4f4f4" stroke="#5a5a5a" stroke-width="1"/><path d="M2.6 3.6L4.3 4.6" stroke="#777" stroke-width="0.8"/></svg>
<div class="t" style="top:993.38px;font-size:7.95px;color:#1c1c1c;left:1248.00px;transform:scaleY(1.1);">Infinity Fabric C...</div>
<div class="t" style="top:993.38px;font-size:7.95px;color:#1c1c1c;right:549.00px;transform:scaleY(1.1);">1,900.0 MHz</div>
<div class="t" style="top:993.38px;font-size:7.95px;color:#1c1c1c;right:489.00px;transform:scaleY(1.1);">1,900.0 MHz</div>
<div class="t" style="top:993.38px;font-size:7.95px;color:#1c1c1c;right:429.00px;transform:scaleY(1.1);">1,900.0 MHz</div>
<div class="t" style="top:993.38px;font-size:7.95px;color:#1c1c1c;right:369.00px;transform:scaleY(1.1);">1,900.0 MHz</div>
<div class="a" style="left:1567.50px;top:24.00px;width:350.00px;height:979.75px;background:#ffffff;"></div>
<div class="a" style="left:1567.50px;top:24.00px;width:1.00px;height:979.75px;background:#333;"></div>
<div class="t" style="top:35.10px;font-size:7.95px;color:#1c1c1c;left:1572.70px;transform:scaleY(1.1);">Sensor</div>
<div class="t" style="top:35.10px;font-size:7.95px;color:#1c1c1c;right:196.00px;transform:scaleY(1.1);">Current</div>
<div class="t" style="top:35.10px;font-size:7.95px;color:#1c1c1c;right:136.00px;transform:scaleY(1.1);">Minimum</div>
<div class="t" style="top:35.10px;font-size:7.95px;color:#1c1c1c;right:76.00px;transform:scaleY(1.1);">Maximum</div>
<div class="t" style="top:35.10px;font-size:7.95px;color:#1c1c1c;right:16.00px;transform:scaleY(1.1);">Average</div>
<div class="a" style="left:1668.40px;top:26.00px;width:1.00px;height:15.00px;background:#ececec;"></div>
<div class="a" style="left:1728.40px;top:26.00px;width:1.00px;height:15.00px;background:#ececec;"></div>
<div class="a" style="left:1788.40px;top:26.00px;width:1.00px;height:15.00px;background:#ececec;"></div>
<div class="a" style="left:1848.40px;top:26.00px;width:1.00px;height:15.00px;background:#ececec;"></div>
<div class="a" style="left:1908.40px;top:26.00px;width:1.00px;height:15.00px;background:#ececec;"></div>
<div class="a" style="left:1568.50px;top:54.75px;width:349.00px;height:0.60px;background:#f1f1f1;"></div>
<div class="a" style="left:1568.50px;top:67.50px;width:349.00px;height:0.60px;background:#f1f1f1;"></div>
<div class="a" style="left:1568.50px;top:80.25px;width:349.00px;height:0.60px;background:#f1f1f1;"></div>
<div class="a" style="left:1568.50px;top:93.00px;width:349.00px;height:0.60px;background:#f1f1f1;"></div>
<div class="a" style="left:1568.50px;top:105.75px;width:349.00px;height:0.60px;background:#f1f1f1;"></div>
<div class="a" style="left:1568.50px;top:118.50px;width:349.00px;height:0.60px;background:#f1f1f1;"></div>
<div class="a" style="left:1568.50px;top:131.25px;width:349.00px;height:0.60px;background:#f1f1f1;"></div>
<div class="a" style="left:1568.50px;top:144.00px;width:349.00px;height:0.60px;background:#f1f1f1;"></div>
<div class="a" style="left:1568.50px;top:156.75px;width:349.00px;height:0.60px;background:#f1f1f1;"></div>
<div class="a" style="left:1568.50px;top:169.50px;width:349.00px;height:0.60px;background:#f1f1f1;"></div>
<div class="a" style="left:1568.50px;top:182.25px;width:349.00px;height:0.60px;background:#f1f1f1;"></div>
<div class="a" style="left:1568.50px;top:195.00px;width:349.00px;height:0.60px;background:#f1f1f1;"></div>
<div class="a" style="left:1568.50px;top:207.75px;width:349.00px;height:0.60px;background:#f1f1f1;"></div>
<div class="a" style="left:1568.50px;top:220.50px;width:349.00px;height:0.60px;background:#f1f1f1;"></div>
<div class="a" style="left:1568.50px;top:233.25px;width:349.00px;height:0.60px;background:#f1f1f1;"></div>
<div class="a" style="left:1568.50px;top:246.00px;width:349.00px;height:0.60px;background:#f1f1f1;"></div>
<div class="a" style="left:1568.50px;top:258.75px;width:349.00px;height:0.60px;background:#f1f1f1;"></div>
<div class="a" style="left:1568.50px;top:271.50px;width:349.00px;height:0.60px;background:#f1f1f1;"></div>
<div class="a" style="left:1568.50px;top:284.25px;width:349.00px;height:0.60px;background:#f1f1f1;"></div>
<div class="a" style="left:1568.50px;top:297.00px;width:349.00px;height:0.60px;background:#f1f1f1;"></div>
<div class="a" style="left:1568.50px;top:309.75px;width:349.00px;height:0.60px;background:#f1f1f1;"></div>
<div class="a" style="left:1568.50px;top:322.50px;width:349.00px;height:0.60px;background:#f1f1f1;"></div>
<div class="a" style="left:1568.50px;top:335.25px;width:349.00px;height:0.60px;background:#f1f1f1;"></div>
<div class="a" style="left:1568.50px;top:348.00px;width:349.00px;height:0.60px;background:#f1f1f1;"></div>
<div class="a" style="left:1568.50px;top:360.75px;width:349.00px;height:0.60px;background:#f1f1f1;"></div>
<div class="a" style="left:1568.50px;top:373.50px;width:349.00px;height:0.60px;background:#f1f1f1;"></div>
<div class="a" style="left:1568.50px;top:386.25px;width:349.00px;height:0.60px;background:#f1f1f1;"></div>
<div class="a" style="left:1568.50px;top:399.00px;width:349.00px;height:0.60px;background:#f1f1f1;"></div>
<div class="a" style="left:1568.50px;top:411.75px;width:349.00px;height:0.60px;background:#f1f1f1;"></div>
<div class="a" style="left:1568.50px;top:424.50px;width:349.00px;height:0.60px;background:#f1f1f1;"></div>
<div class="a" style="left:1568.50px;top:437.25px;width:349.00px;height:0.60px;background:#f1f1f1;"></div>
<div class="a" style="left:1568.50px;top:450.00px;width:349.00px;height:0.60px;background:#f1f1f1;"></div>
<div class="a" style="left:1568.50px;top:462.75px;width:349.00px;height:0.60px;background:#f1f1f1;"></div>
<div class="a" style="left:1568.50px;top:475.50px;width:349.00px;height:0.60px;background:#f1f1f1;"></div>
<div class="a" style="left:1568.50px;top:488.25px;width:349.00px;height:0.60px;background:#f1f1f1;"></div>
<div class="a" style="left:1568.50px;top:501.00px;width:349.00px;height:0.60px;background:#f1f1f1;"></div>
<div class="a" style="left:1568.50px;top:513.75px;width:349.00px;height:0.60px;background:#f1f1f1;"></div>
<div class="a" style="left:1568.50px;top:526.50px;width:349.00px;height:0.60px;background:#f1f1f1;"></div>
<div class="a" style="left:1568.50px;top:539.25px;width:349.00px;height:0.60px;background:#f1f1f1;"></div>
<div class="a" style="left:1568.50px;top:552.00px;width:349.00px;height:0.60px;background:#f1f1f1;"></div>
<div class="a" style="left:1568.50px;top:564.75px;width:349.00px;height:0.60px;background:#f1f1f1;"></div>
<div class="a" style="left:1568.50px;top:577.50px;width:349.00px;height:0.60px;background:#f1f1f1;"></div>
<div class="a" style="left:1568.50px;top:590.25px;width:349.00px;height:0.60px;background:#f1f1f1;"></div>
<div class="a" style="left:1568.50px;top:603.00px;width:349.00px;height:0.60px;background:#f1f1f1;"></div>
<div class="a" style="left:1568.50px;top:615.75px;width:349.00px;height:0.60px;background:#f1f1f1;"></div>
<div class="a" style="left:1568.50px;top:628.50px;width:349.00px;height:0.60px;background:#f1f1f1;"></div>
<div class="a" style="left:1568.50px;top:641.25px;width:349.00px;height:0.60px;background:#f1f1f1;"></div>
<div class="a" style="left:1568.50px;top:654.00px;width:349.00px;height:0.60px;background:#f1f1f1;"></div>
<div class="a" style="left:1568.50px;top:666.75px;width:349.00px;height:0.60px;background:#f1f1f1;"></div>
<div class="a" style="left:1568.50px;top:679.50px;width:349.00px;height:0.60px;background:#f1f1f1;"></div>
<div class="a" style="left:1568.50px;top:692.25px;width:349.00px;height:0.60px;background:#f1f1f1;"></div>
<div class="a" style="left:1568.50px;top:705.00px;width:349.00px;height:0.60px;background:#f1f1f1;"></div>
<div class="a" style="left:1568.50px;top:717.75px;width:349.00px;height:0.60px;background:#f1f1f1;"></div>
<div class="a" style="left:1568.50px;top:730.50px;width:349.00px;height:0.60px;background:#f1f1f1;"></div>
<div class="a" style="left:1568.50px;top:743.25px;width:349.00px;height:0.60px;background:#f1f1f1;"></div>
<div class="a" style="left:1568.50px;top:756.00px;width:349.00px;height:0.60px;background:#f1f1f1;"></div>
<div class="a" style="left:1568.50px;top:768.75px;width:349.00px;height:0.60px;background:#f1f1f1;"></div>
<div class="a" style="left:1568.50px;top:781.50px;width:349.00px;height:0.60px;background:#f1f1f1;"></div>
<div class="a" style="left:1568.50px;top:794.25px;width:349.00px;height:0.60px;background:#f1f1f1;"></div>
<div class="a" style="left:1568.50px;top:807.00px;width:349.00px;height:0.60px;background:#f1f1f1;"></div>
<div class="a" style="left:1568.50px;top:819.75px;width:349.00px;height:0.60px;background:#f1f1f1;"></div>
<div class="a" style="left:1568.50px;top:832.50px;width:349.00px;height:0.60px;background:#f1f1f1;"></div>
<div class="a" style="left:1568.50px;top:845.25px;width:349.00px;height:0.60px;background:#f1f1f1;"></div>
<div class="a" style="left:1568.50px;top:858.00px;width:349.00px;height:0.60px;background:#f1f1f1;"></div>
<div class="a" style="left:1568.50px;top:870.75px;width:349.00px;height:0.60px;background:#f1f1f1;"></div>
<div class="a" style="left:1568.50px;top:883.50px;width:349.00px;height:0.60px;background:#f1f1f1;"></div>
<div class="a" style="left:1568.50px;top:896.25px;width:349.00px;height:0.60px;background:#f1f1f1;"></div>
<div class="a" style="left:1568.50px;top:909.00px;width:349.00px;height:0.60px;background:#f1f1f1;"></div>
<div class="a" style="left:1568.50px;top:921.75px;width:349.00px;height:0.60px;background:#f1f1f1;"></div>
<div class="a" style="left:1568.50px;top:934.50px;width:349.00px;height:0.60px;background:#f1f1f1;"></div>
<div class="a" style="left:1568.50px;top:947.25px;width:349.00px;height:0.60px;background:#f1f1f1;"></div>
<div class="a" style="left:1568.50px;top:960.00px;width:349.00px;height:0.60px;background:#f1f1f1;"></div>
<div class="a" style="left:1568.50px;top:972.75px;width:349.00px;height:0.60px;background:#f1f1f1;"></div>
<div class="a" style="left:1568.50px;top:985.50px;width:349.00px;height:0.60px;background:#f1f1f1;"></div>
<div class="a" style="left:1568.50px;top:998.25px;width:349.00px;height:0.60px;background:#f1f1f1;"></div>
<div class="a" style="left:1668.40px;top:42.60px;width:0.70px;height:961.15px;background:#f1f1f1;"></div>
<div class="a" style="left:1728.40px;top:42.60px;width:0.70px;height:961.15px;background:#f1f1f1;"></div>
<div class="a" style="left:1788.40px;top:42.60px;width:0.70px;height:961.15px;background:#f1f1f1;"></div>
<div class="a" style="left:1848.40px;top:42.60px;width:0.70px;height:961.15px;background:#f1f1f1;"></div>
<div class="a" style="left:1908.40px;top:42.60px;width:0.70px;height:961.15px;background:#f1f1f1;"></div>
<svg style="left:1588.00px;top:44.78px" width="9" height="9"><circle cx="4.3" cy="4.3" r="3.7" fill="#f4f4f4" stroke="#5a5a5a" stroke-width="1"/><path d="M2.6 3.6L4.3 4.6" stroke="#777" stroke-width="0.8"/></svg>
<div class="t" style="top:49.88px;font-size:7.95px;color:#1c1c1c;left:1598.50px;transform:scaleY(1.1);">Memory Controll...</div>
<div class="t" style="top:49.88px;font-size:7.95px;color:#1c1c1c;right:196.00px;transform:scaleY(1.1);">1,900.0 MHz</div>
<div class="t" style="top:49.88px;font-size:7.95px;color:#1c1c1c;right:136.00px;transform:scaleY(1.1);">1,900.0 MHz</div>
<div class="t" style="top:49.88px;font-size:7.95px;color:#1c1c1c;right:76.00px;transform:scaleY(1.1);">1,900.0 MHz</div>
<div class="t" style="top:49.88px;font-size:7.95px;color:#1c1c1c;right:16.00px;transform:scaleY(1.1);">1,900.0 MHz</div>
<div class="a" style="left:1587.00px;top:55.35px;width:321.40px;height:12.75px;background:#f0f0f0;"></div>
<svg style="left:1588.00px;top:57.53px" width="9" height="9"><circle cx="4.3" cy="4.3" r="3.7" fill="#f4f4f4" stroke="#5a5a5a" stroke-width="1"/><path d="M2.6 3.6L4.3 4.6" stroke="#777" stroke-width="0.8"/></svg>
<div class="t" style="top:62.62px;font-size:7.95px;color:#1c1c1c;left:1598.50px;transform:scaleY(1.1);">Frequency Limit ...</div>
<div class="t" style="top:62.62px;font-size:7.95px;color:#1c1c1c;right:196.00px;transform:scaleY(1.1);">5,050.0 MHz</div>
<div class="t" style="top:62.62px;font-size:7.95px;color:#1c1c1c;right:136.00px;transform:scaleY(1.1);">5,050.0 MHz</div>
<div class="t" style="top:62.62px;font-size:7.95px;color:#1c1c1c;right:76.00px;transform:scaleY(1.1);">5,050.0 MHz</div>
<div class="t" style="top:62.62px;font-size:7.95px;color:#1c1c1c;right:16.00px;transform:scaleY(1.1);">5,050.0 MHz</div>
<svg style="left:1588.00px;top:70.28px" width="9" height="9"><circle cx="4.3" cy="4.3" r="3.7" fill="#f4f4f4" stroke="#5a5a5a" stroke-width="1"/><path d="M2.6 3.6L4.3 4.6" stroke="#777" stroke-width="0.8"/></svg>
<div class="t" style="top:75.38px;font-size:7.95px;color:#1c1c1c;left:1598.50px;transform:scaleY(1.1);">Thermal Throttli...</div>
<div class="t" style="top:75.38px;font-size:7.95px;color:#1c1c1c;right:196.00px;transform:scaleY(1.1);">No</div>
<div class="t" style="top:75.38px;font-size:7.95px;color:#1c1c1c;right:136.00px;transform:scaleY(1.1);">No</div>
<div class="t" style="top:75.38px;font-size:7.95px;color:#1c1c1c;right:76.00px;transform:scaleY(1.1);">No</div>
<div class="a" style="left:1587.00px;top:80.85px;width:321.40px;height:12.75px;background:#f0f0f0;"></div>
<svg style="left:1588.00px;top:83.03px" width="9" height="9"><circle cx="4.3" cy="4.3" r="3.7" fill="#f4f4f4" stroke="#5a5a5a" stroke-width="1"/><path d="M2.6 3.6L4.3 4.6" stroke="#777" stroke-width="0.8"/></svg>
<div class="t" style="top:88.12px;font-size:7.95px;color:#1c1c1c;left:1598.50px;transform:scaleY(1.1);">Thermal Throttli...</div>
<div class="t" style="top:88.12px;font-size:7.95px;color:#1c1c1c;right:196.00px;transform:scaleY(1.1);">No</div>
<div class="t" style="top:88.12px;font-size:7.95px;color:#1c1c1c;right:136.00px;transform:scaleY(1.1);">No</div>
<div class="t" style="top:88.12px;font-size:7.95px;color:#1c1c1c;right:76.00px;transform:scaleY(1.1);">No</div>
<svg style="left:1588.00px;top:95.78px" width="9" height="9"><circle cx="4.3" cy="4.3" r="3.7" fill="#f4f4f4" stroke="#5a5a5a" stroke-width="1"/><path d="M2.6 3.6L4.3 4.6" stroke="#777" stroke-width="0.8"/></svg>
<div class="t" style="top:100.88px;font-size:7.95px;color:#1c1c1c;left:1598.50px;transform:scaleY(1.1);">Thermal Throttli...</div>
<div class="t" style="top:100.88px;font-size:7.95px;color:#1c1c1c;right:196.00px;transform:scaleY(1.1);">No</div>
<div class="t" style="top:100.88px;font-size:7.95px;color:#1c1c1c;right:136.00px;transform:scaleY(1.1);">No</div>
<div class="t" style="top:100.88px;font-size:7.95px;color:#1c1c1c;right:76.00px;transform:scaleY(1.1);">No</div>
<div class="a" style="left:1587.00px;top:106.35px;width:321.40px;height:12.75px;background:#f0f0f0;"></div>
<svg style="left:1588.00px;top:108.53px" width="9" height="9"><circle cx="4.3" cy="4.3" r="3.7" fill="#f4f4f4" stroke="#5a5a5a" stroke-width="1"/><path d="M2.6 3.6L4.3 4.6" stroke="#777" stroke-width="0.8"/></svg>
<div class="t" style="top:113.62px;font-size:7.95px;color:#1c1c1c;left:1598.50px;transform:scaleY(1.1);">DRAM Read Ban...</div>
<div class="t" style="top:113.62px;font-size:7.95px;color:#1c1c1c;right:196.00px;transform:scaleY(1.1);">0.103 Gbps</div>
<div class="t" style="top:113.62px;font-size:7.95px;color:#1c1c1c;right:136.00px;transform:scaleY(1.1);">0.010 Gbps</div>
<div class="t" style="top:113.62px;font-size:7.95px;color:#1c1c1c;right:76.00px;transform:scaleY(1.1);">0.403 Gbps</div>
<div class="t" style="top:113.62px;font-size:7.95px;color:#1c1c1c;right:16.00px;transform:scaleY(1.1);">0.147 Gbps</div>
<svg style="left:1588.00px;top:121.28px" width="9" height="9"><circle cx="4.3" cy="4.3" r="3.7" fill="#f4f4f4" stroke="#5a5a5a" stroke-width="1"/><path d="M2.6 3.6L4.3 4.6" stroke="#777" stroke-width="0.8"/></svg>
<div class="t" style="top:126.38px;font-size:7.95px;color:#1c1c1c;left:1598.50px;transform:scaleY(1.1);">DRAM Write Ban...</div>
<div class="t" style="top:126.38px;font-size:7.95px;color:#1c1c1c;right:196.00px;transform:scaleY(1.1);">0.013 Gbps</div>
<div class="t" style="top:126.38px;font-size:7.95px;color:#1c1c1c;right:136.00px;transform:scaleY(1.1);">0.001 Gbps</div>
<div class="t" style="top:126.38px;font-size:7.95px;color:#1c1c1c;right:76.00px;transform:scaleY(1.1);">0.124 Gbps</div>
<div class="t" style="top:126.38px;font-size:7.95px;color:#1c1c1c;right:16.00px;transform:scaleY(1.1);">0.020 Gbps</div>
<div class="a" style="left:1596.50px;top:131.85px;width:311.90px;height:12.75px;background:#f0f0f0;"></div>
<div class="a" style="left:1596.50px;top:144.60px;width:311.90px;height:11.25px;background:#dcdcdc;"></div>
<div class="a" style="left:1668.40px;top:144.60px;width:1.20px;height:11.25px;background:#ffffff;"></div>
<div class="a" style="left:1728.40px;top:144.60px;width:1.20px;height:11.25px;background:#ffffff;"></div>
<div class="a" style="left:1788.40px;top:144.60px;width:1.20px;height:11.25px;background:#ffffff;"></div>
<div class="a" style="left:1848.40px;top:144.60px;width:1.20px;height:11.25px;background:#ffffff;"></div>
<svg style="left:1574.50px;top:149.88px" width="7" height="4"><path d="M0.5 0.5L3.5 3.3L6.5 0.5" stroke="#555" fill="none" stroke-width="0.9"/></svg>
<svg style="left:1587.00px;top:145.07px" width="8" height="12"><rect x="1" y="0.5" width="6" height="11" rx="0.6" fill="#3a3a3a"/><rect x="2" y="1.2" width="2" height="9.5" fill="#666"/><path d="M0 2H1M0 4H1M0 6H1M0 8H1M0 10H1M7 2H8M7 4H8M7 6H8M7 8H8M7 10H8" stroke="#555" stroke-width="0.7"/></svg>
<div class="t" style="top:151.88px;font-size:7.95px;color:#333;left:1598.50px;transform:scaleY(1.1);font-style:italic;">ASUS ROG CRO...</div>
<div class="a" style="left:1587.00px;top:157.35px;width:321.40px;height:12.75px;background:#f0f0f0;"></div>
<svg style="left:1588.00px;top:157.32px" width="7" height="13"><rect x="2.3" y="0.5" width="2.4" height="9" rx="1.2" fill="#f2f2f2" stroke="#9aa" stroke-width="0.6"/><rect x="2.9" y="4" width="1.2" height="6" fill="#f08040"/><circle cx="3.5" cy="10.3" r="2.2" fill="#f07838" stroke="#8aa0b8" stroke-width="0.6"/></svg>
<div class="t" style="top:164.62px;font-size:7.95px;color:#1c1c1c;left:1598.50px;transform:scaleY(1.1);">Motherboard</div>
<div class="t" style="top:164.62px;font-size:7.95px;color:#1c1c1c;right:196.00px;transform:scaleY(1.1);">28 °C</div>
<div class="t" style="top:164.62px;font-size:7.95px;color:#1c1c1c;right:136.00px;transform:scaleY(1.1);">28 °C</div>
<div class="t" style="top:164.62px;font-size:7.95px;color:#1c1c1c;right:76.00px;transform:scaleY(1.1);">28 °C</div>
<div class="t" style="top:164.62px;font-size:7.95px;color:#1c1c1c;right:16.00px;transform:scaleY(1.1);">28 °C</div>
<svg style="left:1588.00px;top:170.07px" width="7" height="13"><rect x="2.3" y="0.5" width="2.4" height="9" rx="1.2" fill="#f2f2f2" stroke="#9aa" stroke-width="0.6"/><rect x="2.9" y="4" width="1.2" height="6" fill="#f08040"/><circle cx="3.5" cy="10.3" r="2.2" fill="#f07838" stroke="#8aa0b8" stroke-width="0.6"/></svg>
<div class="t" style="top:177.38px;font-size:7.95px;color:#1c1c1c;left:1598.50px;transform:scaleY(1.1);">CPU Package</div>
<div class="t" style="top:177.38px;font-size:7.95px;color:#1c1c1c;right:196.00px;transform:scaleY(1.1);">33 °C</div>
<div class="t" style="top:177.38px;font-size:7.95px;color:#1c1c1c;right:136.00px;transform:scaleY(1.1);">33 °C</div>
<div class="t" style="top:177.38px;font-size:7.95px;color:#1c1c1c;right:76.00px;transform:scaleY(1.1);">41 °C</div>
<div class="t" style="top:177.38px;font-size:7.95px;color:#1c1c1c;right:16.00px;transform:scaleY(1.1);">36 °C</div>
<div class="a" style="left:1587.00px;top:182.85px;width:321.40px;height:12.75px;background:#f0f0f0;"></div>
<svg style="left:1588.00px;top:182.82px" width="7" height="13"><rect x="2.3" y="0.5" width="2.4" height="9" rx="1.2" fill="#f2f2f2" stroke="#9aa" stroke-width="0.6"/><rect x="2.9" y="4" width="1.2" height="6" fill="#f08040"/><circle cx="3.5" cy="10.3" r="2.2" fill="#f07838" stroke="#8aa0b8" stroke-width="0.6"/></svg>
<div class="t" style="top:190.12px;font-size:7.95px;color:#1c1c1c;left:1598.50px;transform:scaleY(1.1);">CPU</div>
<div class="t" style="top:190.12px;font-size:7.95px;color:#1c1c1c;right:196.00px;transform:scaleY(1.1);">30 °C</div>
<div class="t" style="top:190.12px;font-size:7.95px;color:#1c1c1c;right:136.00px;transform:scaleY(1.1);">28 °C</div>
<div class="t" style="top:190.12px;font-size:7.95px;color:#1c1c1c;right:76.00px;transform:scaleY(1.1);">32 °C</div>
<div class="t" style="top:190.12px;font-size:7.95px;color:#1c1c1c;right:16.00px;transform:scaleY(1.1);">30 °C</div>
<svg style="left:1588.00px;top:195.57px" width="7" height="13"><rect x="2.3" y="0.5" width="2.4" height="9" rx="1.2" fill="#f2f2f2" stroke="#9aa" stroke-width="0.6"/><rect x="2.9" y="4" width="1.2" height="6" fill="#f08040"/><circle cx="3.5" cy="10.3" r="2.2" fill="#f07838" stroke="#8aa0b8" stroke-width="0.6"/></svg>
<div class="t" style="top:202.88px;font-size:7.95px;color:#1c1c1c;left:1598.50px;transform:scaleY(1.1);">Temp9</div>
<div class="t" style="top:202.88px;font-size:7.95px;color:#1c1c1c;right:196.00px;transform:scaleY(1.1);">50 °C</div>
<div class="t" style="top:202.88px;font-size:7.95px;color:#1c1c1c;right:136.00px;transform:scaleY(1.1);">50 °C</div>
<div class="t" style="top:202.88px;font-size:7.95px;color:#1c1c1c;right:76.00px;transform:scaleY(1.1);">50 °C</div>
<div class="t" style="top:202.88px;font-size:7.95px;color:#1c1c1c;right:16.00px;transform:scaleY(1.1);">50 °C</div>
<div class="a" style="left:1587.00px;top:208.35px;width:321.40px;height:12.75px;background:#f0f0f0;"></div>
<svg style="left:1588.00px;top:208.32px" width="7" height="13"><rect x="2.3" y="0.5" width="2.4" height="9" rx="1.2" fill="#f2f2f2" stroke="#9aa" stroke-width="0.6"/><rect x="2.9" y="4" width="1.2" height="6" fill="#f08040"/><circle cx="3.5" cy="10.3" r="2.2" fill="#f07838" stroke="#8aa0b8" stroke-width="0.6"/></svg>
<div class="t" style="top:215.62px;font-size:7.95px;color:#1c1c1c;left:1598.50px;transform:scaleY(1.1);">TSI0 (CPU)</div>
<div class="t" style="top:215.62px;font-size:7.95px;color:#1c1c1c;right:196.00px;transform:scaleY(1.1);">33 °C</div>
<div class="t" style="top:215.62px;font-size:7.95px;color:#1c1c1c;right:136.00px;transform:scaleY(1.1);">33 °C</div>
<div class="t" style="top:215.62px;font-size:7.95px;color:#1c1c1c;right:76.00px;transform:scaleY(1.1);">41 °C</div>
<div class="t" style="top:215.62px;font-size:7.95px;color:#1c1c1c;right:16.00px;transform:scaleY(1.1);">36 °C</div>
<svg style="left:1588.00px;top:221.07px" width="7" height="13"><rect x="2.3" y="0.5" width="2.4" height="9" rx="1.2" fill="#f2f2f2" stroke="#9aa" stroke-width="0.6"/><rect x="2.9" y="4" width="1.2" height="6" fill="#f08040"/><circle cx="3.5" cy="10.3" r="2.2" fill="#f07838" stroke="#8aa0b8" stroke-width="0.6"/></svg>
<div class="t" style="top:228.38px;font-size:7.95px;color:#1c1c1c;left:1598.50px;transform:scaleY(1.1);">TSI1 (PCH)</div>
<div class="t" style="top:228.38px;font-size:7.95px;color:#1c1c1c;right:196.00px;transform:scaleY(1.1);">55 °C</div>
<div class="t" style="top:228.38px;font-size:7.95px;color:#1c1c1c;right:136.00px;transform:scaleY(1.1);">55 °C</div>
<div class="t" style="top:228.38px;font-size:7.95px;color:#1c1c1c;right:76.00px;transform:scaleY(1.1);">55 °C</div>
<div class="t" style="top:228.38px;font-size:7.95px;color:#1c1c1c;right:16.00px;transform:scaleY(1.1);">55 °C</div>
<div class="a" style="left:1587.00px;top:233.85px;width:321.40px;height:12.75px;background:#f0f0f0;"></div>
<svg style="left:1588.00px;top:233.82px" width="8" height="13"><path d="M4.5 0.5L1 6.8H3.6L1.8 12.5L7.2 5.2H4.6L6.5 0.5Z" fill="#ffe04a" stroke="#d88a10" stroke-width="0.8"/></svg>
<div class="t" style="top:241.12px;font-size:7.95px;color:#1c1c1c;left:1598.50px;transform:scaleY(1.1);">Vcore</div>
<div class="t" style="top:241.12px;font-size:7.95px;color:#1c1c1c;right:196.00px;transform:scaleY(1.1);">0.744 V</div>
<div class="t" style="top:241.12px;font-size:7.95px;color:#1c1c1c;right:136.00px;transform:scaleY(1.1);">0.312 V</div>
<div class="t" style="top:241.12px;font-size:7.95px;color:#1c1c1c;right:76.00px;transform:scaleY(1.1);">1.472 V</div>
<div class="t" style="top:241.12px;font-size:7.95px;color:#1c1c1c;right:16.00px;transform:scaleY(1.1);">0.849 V</div>
<svg style="left:1588.00px;top:246.57px" width="8" height="13"><path d="M4.5 0.5L1 6.8H3.6L1.8 12.5L7.2 5.2H4.6L6.5 0.5Z" fill="#ffe04a" stroke="#d88a10" stroke-width="0.8"/></svg>
<div class="t" style="top:253.88px;font-size:7.95px;color:#1c1c1c;left:1598.50px;transform:scaleY(1.1);">+5V</div>
<div class="t" style="top:253.88px;font-size:7.95px;color:#1c1c1c;right:196.00px;transform:scaleY(1.1);">5.000 V</div>
<div class="t" style="top:253.88px;font-size:7.95px;color:#1c1c1c;right:136.00px;transform:scaleY(1.1);">5.000 V</div>
<div class="t" style="top:253.88px;font-size:7.95px;color:#1c1c1c;right:76.00px;transform:scaleY(1.1);">5.000 V</div>
<div class="t" style="top:253.88px;font-size:7.95px;color:#1c1c1c;right:16.00px;transform:scaleY(1.1);">5.000 V</div>
<div class="a" style="left:1587.00px;top:259.35px;width:321.40px;height:12.75px;background:#f0f0f0;"></div>
<svg style="left:1588.00px;top:259.32px" width="8" height="13"><path d="M4.5 0.5L1 6.8H3.6L1.8 12.5L7.2 5.2H4.6L6.5 0.5Z" fill="#ffe04a" stroke="#d88a10" stroke-width="0.8"/></svg>
<div class="t" style="top:266.62px;font-size:7.95px;color:#1c1c1c;left:1598.50px;transform:scaleY(1.1);">AVSB</div>
<div class="t" style="top:266.62px;font-size:7.95px;color:#1c1c1c;right:196.00px;transform:scaleY(1.1);">3.392 V</div>
<div class="t" style="top:266.62px;font-size:7.95px;color:#1c1c1c;right:136.00px;transform:scaleY(1.1);">3.392 V</div>
<div class="t" style="top:266.62px;font-size:7.95px;color:#1c1c1c;right:76.00px;transform:scaleY(1.1);">3.392 V</div>
<div class="t" style="top:266.62px;font-size:7.95px;color:#1c1c1c;right:16.00px;transform:scaleY(1.1);">3.392 V</div>
<svg style="left:1588.00px;top:272.07px" width="8" height="13"><path d="M4.5 0.5L1 6.8H3.6L1.8 12.5L7.2 5.2H4.6L6.5 0.5Z" fill="#ffe04a" stroke="#d88a10" stroke-width="0.8"/></svg>
<div class="t" style="top:279.38px;font-size:7.95px;color:#1c1c1c;left:1598.50px;transform:scaleY(1.1);">3VCC</div>
<div class="t" style="top:279.38px;font-size:7.95px;color:#1c1c1c;right:196.00px;transform:scaleY(1.1);">3.296 V</div>
<div class="t" style="top:279.38px;font-size:7.95px;color:#1c1c1c;right:136.00px;transform:scaleY(1.1);">3.296 V</div>
<div class="t" style="top:279.38px;font-size:7.95px;color:#1c1c1c;right:76.00px;transform:scaleY(1.1);">3.296 V</div>
<div class="t" style="top:279.38px;font-size:7.95px;color:#1c1c1c;right:16.00px;transform:scaleY(1.1);">3.296 V</div>
<div class="a" style="left:1587.00px;top:284.85px;width:321.40px;height:12.75px;background:#f0f0f0;"></div>
<svg style="left:1588.00px;top:284.82px" width="8" height="13"><path d="M4.5 0.5L1 6.8H3.6L1.8 12.5L7.2 5.2H4.6L6.5 0.5Z" fill="#ffe04a" stroke="#d88a10" stroke-width="0.8"/></svg>
<div class="t" style="top:292.12px;font-size:7.95px;color:#1c1c1c;left:1598.50px;transform:scaleY(1.1);">+12V</div>
<div class="t" style="top:292.12px;font-size:7.95px;color:#1c1c1c;right:196.00px;transform:scaleY(1.1);">12.152 V</div>
<div class="t" style="top:292.12px;font-size:7.95px;color:#1c1c1c;right:136.00px;transform:scaleY(1.1);">12.096 V</div>
<div class="t" style="top:292.12px;font-size:7.95px;color:#1c1c1c;right:76.00px;transform:scaleY(1.1);">12.152 V</div>
<div class="t" style="top:292.12px;font-size:7.95px;color:#1c1c1c;right:16.00px;transform:scaleY(1.1);">12.127 V</div>
<svg style="left:1588.00px;top:297.57px" width="8" height="13"><path d="M4.5 0.5L1 6.8H3.6L1.8 12.5L7.2 5.2H4.6L6.5 0.5Z" fill="#ffe04a" stroke="#d88a10" stroke-width="0.8"/></svg>
<div class="t" style="top:304.88px;font-size:7.95px;color:#1c1c1c;left:1598.50px;transform:scaleY(1.1);">VIN8</div>
<div class="t" style="top:304.88px;font-size:7.95px;color:#1c1c1c;right:196.00px;transform:scaleY(1.1);">0.592 V</div>
<div class="t" style="top:304.88px;font-size:7.95px;color:#1c1c1c;right:136.00px;transform:scaleY(1.1);">0.592 V</div>
<div class="t" style="top:304.88px;font-size:7.95px;color:#1c1c1c;right:76.00px;transform:scaleY(1.1);">0.592 V</div>
<div class="t" style="top:304.88px;font-size:7.95px;color:#1c1c1c;right:16.00px;transform:scaleY(1.1);">0.592 V</div>
<div class="a" style="left:1587.00px;top:310.35px;width:321.40px;height:12.75px;background:#f0f0f0;"></div>
<svg style="left:1588.00px;top:310.32px" width="8" height="13"><path d="M4.5 0.5L1 6.8H3.6L1.8 12.5L7.2 5.2H4.6L6.5 0.5Z" fill="#ffe04a" stroke="#d88a10" stroke-width="0.8"/></svg>
<div class="t" style="top:317.62px;font-size:7.95px;color:#1c1c1c;left:1598.50px;transform:scaleY(1.1);">CPU SOC</div>
<div class="t" style="top:317.62px;font-size:7.95px;color:#1c1c1c;right:196.00px;transform:scaleY(1.1);">1.152 V</div>
<div class="t" style="top:317.62px;font-size:7.95px;color:#1c1c1c;right:136.00px;transform:scaleY(1.1);">1.152 V</div>
<div class="t" style="top:317.62px;font-size:7.95px;color:#1c1c1c;right:76.00px;transform:scaleY(1.1);">1.152 V</div>
<div class="t" style="top:317.62px;font-size:7.95px;color:#1c1c1c;right:16.00px;transform:scaleY(1.1);">1.152 V</div>
<svg style="left:1588.00px;top:323.07px" width="8" height="13"><path d="M4.5 0.5L1 6.8H3.6L1.8 12.5L7.2 5.2H4.6L6.5 0.5Z" fill="#ffe04a" stroke="#d88a10" stroke-width="0.8"/></svg>
<div class="t" style="top:330.38px;font-size:7.95px;color:#1c1c1c;left:1598.50px;transform:scaleY(1.1);">3VSB</div>
<div class="t" style="top:330.38px;font-size:7.95px;color:#1c1c1c;right:196.00px;transform:scaleY(1.1);">3.392 V</div>
<div class="t" style="top:330.38px;font-size:7.95px;color:#1c1c1c;right:136.00px;transform:scaleY(1.1);">3.392 V</div>
<div class="t" style="top:330.38px;font-size:7.95px;color:#1c1c1c;right:76.00px;transform:scaleY(1.1);">3.392 V</div>
<div class="t" style="top:330.38px;font-size:7.95px;color:#1c1c1c;right:16.00px;transform:scaleY(1.1);">3.392 V</div>
<div class="a" style="left:1587.00px;top:335.85px;width:321.40px;height:12.75px;background:#f0f0f0;"></div>
<svg style="left:1588.00px;top:335.82px" width="8" height="13"><path d="M4.5 0.5L1 6.8H3.6L1.8 12.5L7.2 5.2H4.6L6.5 0.5Z" fill="#ffe04a" stroke="#d88a10" stroke-width="0.8"/></svg>
<div class="t" style="top:343.12px;font-size:7.95px;color:#1c1c1c;left:1598.50px;transform:scaleY(1.1);">VBAT</div>
<div class="t" style="top:343.12px;font-size:7.95px;color:#1c1c1c;right:196.00px;transform:scaleY(1.1);">3.264 V</div>
<div class="t" style="top:343.12px;font-size:7.95px;color:#1c1c1c;right:136.00px;transform:scaleY(1.1);">3.264 V</div>
<div class="t" style="top:343.12px;font-size:7.95px;color:#1c1c1c;right:76.00px;transform:scaleY(1.1);">3.264 V</div>
<div class="t" style="top:343.12px;font-size:7.95px;color:#1c1c1c;right:16.00px;transform:scaleY(1.1);">3.264 V</div>
<svg style="left:1588.00px;top:348.57px" width="8" height="13"><path d="M4.5 0.5L1 6.8H3.6L1.8 12.5L7.2 5.2H4.6L6.5 0.5Z" fill="#ffe04a" stroke="#d88a10" stroke-width="0.8"/></svg>
<div class="t" style="top:355.88px;font-size:7.95px;color:#1c1c1c;left:1598.50px;transform:scaleY(1.1);">1.8V PLL</div>
<div class="t" style="top:355.88px;font-size:7.95px;color:#1c1c1c;right:196.00px;transform:scaleY(1.1);">1.808 V</div>
<div class="t" style="top:355.88px;font-size:7.95px;color:#1c1c1c;right:136.00px;transform:scaleY(1.1);">1.808 V</div>
<div class="t" style="top:355.88px;font-size:7.95px;color:#1c1c1c;right:76.00px;transform:scaleY(1.1);">1.808 V</div>
<div class="t" style="top:355.88px;font-size:7.95px;color:#1c1c1c;right:16.00px;transform:scaleY(1.1);">1.808 V</div>
<div class="a" style="left:1587.00px;top:361.35px;width:321.40px;height:12.75px;background:#f0f0f0;"></div>
<svg style="left:1588.00px;top:361.32px" width="8" height="13"><path d="M4.5 0.5L1 6.8H3.6L1.8 12.5L7.2 5.2H4.6L6.5 0.5Z" fill="#ffe04a" stroke="#d88a10" stroke-width="0.8"/></svg>
<div class="t" style="top:368.62px;font-size:7.95px;color:#1c1c1c;left:1598.50px;transform:scaleY(1.1);">VDDP</div>
<div class="t" style="top:368.62px;font-size:7.95px;color:#1c1c1c;right:196.00px;transform:scaleY(1.1);">0.016 V</div>
<div class="t" style="top:368.62px;font-size:7.95px;color:#1c1c1c;right:136.00px;transform:scaleY(1.1);">0.016 V</div>
<div class="t" style="top:368.62px;font-size:7.95px;color:#1c1c1c;right:76.00px;transform:scaleY(1.1);">0.016 V</div>
<div class="t" style="top:368.62px;font-size:7.95px;color:#1c1c1c;right:16.00px;transform:scaleY(1.1);">0.016 V</div>
<svg style="left:1588.00px;top:374.07px" width="8" height="13"><path d="M4.5 0.5L1 6.8H3.6L1.8 12.5L7.2 5.2H4.6L6.5 0.5Z" fill="#ffe04a" stroke="#d88a10" stroke-width="0.8"/></svg>
<div class="t" style="top:381.38px;font-size:7.95px;color:#1c1c1c;left:1598.50px;transform:scaleY(1.1);">VIN6</div>
<div class="t" style="top:381.38px;font-size:7.95px;color:#1c1c1c;right:196.00px;transform:scaleY(1.1);">0.128 V</div>
<div class="t" style="top:381.38px;font-size:7.95px;color:#1c1c1c;right:136.00px;transform:scaleY(1.1);">0.128 V</div>
<div class="t" style="top:381.38px;font-size:7.95px;color:#1c1c1c;right:76.00px;transform:scaleY(1.1);">0.144 V</div>
<div class="t" style="top:381.38px;font-size:7.95px;color:#1c1c1c;right:16.00px;transform:scaleY(1.1);">0.131 V</div>
<div class="a" style="left:1587.00px;top:386.85px;width:321.40px;height:12.75px;background:#f0f0f0;"></div>
<svg style="left:1588.00px;top:386.82px" width="8" height="13"><path d="M4.5 0.5L1 6.8H3.6L1.8 12.5L7.2 5.2H4.6L6.5 0.5Z" fill="#ffe04a" stroke="#d88a10" stroke-width="0.8"/></svg>
<div class="t" style="top:394.12px;font-size:7.95px;color:#1c1c1c;left:1598.50px;transform:scaleY(1.1);">1.8V_ALW</div>
<div class="t" style="top:394.12px;font-size:7.95px;color:#1c1c1c;right:196.00px;transform:scaleY(1.1);">1.858 V</div>
<div class="t" style="top:394.12px;font-size:7.95px;color:#1c1c1c;right:136.00px;transform:scaleY(1.1);">1.843 V</div>
<div class="t" style="top:394.12px;font-size:7.95px;color:#1c1c1c;right:76.00px;transform:scaleY(1.1);">1.858 V</div>
<div class="t" style="top:394.12px;font-size:7.95px;color:#1c1c1c;right:16.00px;transform:scaleY(1.1);">1.855 V</div>
<svg style="left:1588.00px;top:399.57px" width="8" height="13"><path d="M4.5 0.5L1 6.8H3.6L1.8 12.5L7.2 5.2H4.6L6.5 0.5Z" fill="#ffe04a" stroke="#d88a10" stroke-width="0.8"/></svg>
<div class="t" style="top:406.88px;font-size:7.95px;color:#1c1c1c;left:1598.50px;transform:scaleY(1.1);">DRAM</div>
<div class="t" style="top:406.88px;font-size:7.95px;color:#1c1c1c;right:196.00px;transform:scaleY(1.1);">1.544 V</div>
<div class="t" style="top:406.88px;font-size:7.95px;color:#1c1c1c;right:136.00px;transform:scaleY(1.1);">1.536 V</div>
<div class="t" style="top:406.88px;font-size:7.95px;color:#1c1c1c;right:76.00px;transform:scaleY(1.1);">1.544 V</div>
<div class="t" style="top:406.88px;font-size:7.95px;color:#1c1c1c;right:16.00px;transform:scaleY(1.1);">1.542 V</div>
<div class="a" style="left:1587.00px;top:412.35px;width:321.40px;height:12.75px;background:#f0f0f0;"></div>
<svg style="left:1588.00px;top:412.32px" width="8" height="13"><path d="M4.5 0.5L1 6.8H3.6L1.8 12.5L7.2 5.2H4.6L6.5 0.5Z" fill="#ffe04a" stroke="#d88a10" stroke-width="0.8"/></svg>
<div class="t" style="top:419.62px;font-size:7.95px;color:#1c1c1c;left:1598.50px;transform:scaleY(1.1);">1.8V_RUN</div>
<div class="t" style="top:419.62px;font-size:7.95px;color:#1c1c1c;right:196.00px;transform:scaleY(1.1);">1.808 V</div>
<div class="t" style="top:419.62px;font-size:7.95px;color:#1c1c1c;right:136.00px;transform:scaleY(1.1);">1.808 V</div>
<div class="t" style="top:419.62px;font-size:7.95px;color:#1c1c1c;right:76.00px;transform:scaleY(1.1);">1.808 V</div>
<div class="t" style="top:419.62px;font-size:7.95px;color:#1c1c1c;right:16.00px;transform:scaleY(1.1);">1.808 V</div>
<svg style="left:1588.00px;top:425.07px" width="8" height="13"><path d="M4.5 0.5L1 6.8H3.6L1.8 12.5L7.2 5.2H4.6L6.5 0.5Z" fill="#ffe04a" stroke="#d88a10" stroke-width="0.8"/></svg>
<div class="t" style="top:432.38px;font-size:7.95px;color:#1c1c1c;left:1598.50px;transform:scaleY(1.1);">VIN9</div>
<div class="t" style="top:432.38px;font-size:7.95px;color:#1c1c1c;right:196.00px;transform:scaleY(1.1);">0.968 V</div>
<div class="t" style="top:432.38px;font-size:7.95px;color:#1c1c1c;right:136.00px;transform:scaleY(1.1);">0.968 V</div>
<div class="t" style="top:432.38px;font-size:7.95px;color:#1c1c1c;right:76.00px;transform:scaleY(1.1);">0.968 V</div>
<div class="t" style="top:432.38px;font-size:7.95px;color:#1c1c1c;right:16.00px;transform:scaleY(1.1);">0.968 V</div>
<div class="a" style="left:1587.00px;top:437.85px;width:321.40px;height:12.75px;background:#f0f0f0;"></div>
<svg style="left:1588.00px;top:437.82px" width="8" height="13"><path d="M4.5 0.5L1 6.8H3.6L1.8 12.5L7.2 5.2H4.6L6.5 0.5Z" fill="#ffe04a" stroke="#d88a10" stroke-width="0.8"/></svg>
<div class="t" style="top:445.12px;font-size:7.95px;color:#1c1c1c;left:1598.50px;transform:scaleY(1.1);">VHIF</div>
<div class="t" style="top:445.12px;font-size:7.95px;color:#1c1c1c;right:196.00px;transform:scaleY(1.1);">3.392 V</div>
<div class="t" style="top:445.12px;font-size:7.95px;color:#1c1c1c;right:136.00px;transform:scaleY(1.1);">3.392 V</div>
<div class="t" style="top:445.12px;font-size:7.95px;color:#1c1c1c;right:76.00px;transform:scaleY(1.1);">3.392 V</div>
<div class="t" style="top:445.12px;font-size:7.95px;color:#1c1c1c;right:16.00px;transform:scaleY(1.1);">3.392 V</div>
<svg style="left:1588.00px;top:452.07px" width="10" height="10"><rect x="0.5" y="0.5" width="9" height="9" fill="#555"/><rect x="1.5" y="1.5" width="3" height="3" fill="#bbb"/><rect x="5.5" y="1.5" width="3" height="3" fill="#bbb"/><rect x="1.5" y="5.5" width="3" height="3" fill="#bbb"/><rect x="5.5" y="5.5" width="3" height="3" fill="#bbb"/></svg>
<div class="t" style="top:457.88px;font-size:7.95px;color:#1c1c1c;left:1598.50px;transform:scaleY(1.1);">Chassis 1</div>
<div class="t" style="top:457.88px;font-size:7.95px;color:#1c1c1c;right:196.00px;transform:scaleY(1.1);">873 RPM</div>
<div class="t" style="top:457.88px;font-size:7.95px;color:#1c1c1c;right:136.00px;transform:scaleY(1.1);">872 RPM</div>
<div class="t" style="top:457.88px;font-size:7.95px;color:#1c1c1c;right:76.00px;transform:scaleY(1.1);">930 RPM</div>
<div class="t" style="top:457.88px;font-size:7.95px;color:#1c1c1c;right:16.00px;transform:scaleY(1.1);">887 RPM</div>
<div class="a" style="left:1587.00px;top:463.35px;width:321.40px;height:12.75px;background:#f0f0f0;"></div>
<svg style="left:1588.00px;top:464.82px" width="10" height="10"><rect x="0.5" y="0.5" width="9" height="9" fill="#555"/><rect x="1.5" y="1.5" width="3" height="3" fill="#bbb"/><rect x="5.5" y="1.5" width="3" height="3" fill="#bbb"/><rect x="1.5" y="5.5" width="3" height="3" fill="#bbb"/><rect x="5.5" y="5.5" width="3" height="3" fill="#bbb"/></svg>
<div class="t" style="top:470.62px;font-size:7.95px;color:#1c1c1c;left:1598.50px;transform:scaleY(1.1);">CPU</div>
<div class="t" style="top:470.62px;font-size:7.95px;color:#1c1c1c;right:196.00px;transform:scaleY(1.1);">949 RPM</div>
<div class="t" style="top:470.62px;font-size:7.95px;color:#1c1c1c;right:136.00px;transform:scaleY(1.1);">936 RPM</div>
<div class="t" style="top:470.62px;font-size:7.95px;color:#1c1c1c;right:76.00px;transform:scaleY(1.1);">963 RPM</div>
<div class="t" style="top:470.62px;font-size:7.95px;color:#1c1c1c;right:16.00px;transform:scaleY(1.1);">949 RPM</div>
<svg style="left:1588.00px;top:477.57px" width="10" height="10"><rect x="0.5" y="0.5" width="9" height="9" fill="#555"/><rect x="1.5" y="1.5" width="3" height="3" fill="#bbb"/><rect x="5.5" y="1.5" width="3" height="3" fill="#bbb"/><rect x="1.5" y="5.5" width="3" height="3" fill="#bbb"/><rect x="5.5" y="5.5" width="3" height="3" fill="#bbb"/></svg>
<div class="t" style="top:483.38px;font-size:7.95px;color:#1c1c1c;left:1598.50px;transform:scaleY(1.1);">Chassis 2</div>
<div class="t" style="top:483.38px;font-size:7.95px;color:#1c1c1c;right:196.00px;transform:scaleY(1.1);">1,378 RPM</div>
<div class="t" style="top:483.38px;font-size:7.95px;color:#1c1c1c;right:136.00px;transform:scaleY(1.1);">1,335 RPM</div>
<div class="t" style="top:483.38px;font-size:7.95px;color:#1c1c1c;right:76.00px;transform:scaleY(1.1);">1,386 RPM</div>
<div class="t" style="top:483.38px;font-size:7.95px;color:#1c1c1c;right:16.00px;transform:scaleY(1.1);">1,357 RPM</div>
<div class="a" style="left:1587.00px;top:488.85px;width:321.40px;height:12.75px;background:#f0f0f0;"></div>
<svg style="left:1588.00px;top:490.32px" width="10" height="10"><rect x="0.5" y="0.5" width="9" height="9" fill="#555"/><rect x="1.5" y="1.5" width="3" height="3" fill="#bbb"/><rect x="5.5" y="1.5" width="3" height="3" fill="#bbb"/><rect x="1.5" y="5.5" width="3" height="3" fill="#bbb"/><rect x="5.5" y="5.5" width="3" height="3" fill="#bbb"/></svg>
<div class="t" style="top:496.12px;font-size:7.95px;color:#1c1c1c;left:1598.50px;transform:scaleY(1.1);">HAMP fan</div>
<div class="t" style="top:496.12px;font-size:7.95px;color:#1c1c1c;right:196.00px;transform:scaleY(1.1);">809 RPM</div>
<div class="t" style="top:496.12px;font-size:7.95px;color:#1c1c1c;right:136.00px;transform:scaleY(1.1);">805 RPM</div>
<div class="t" style="top:496.12px;font-size:7.95px;color:#1c1c1c;right:76.00px;transform:scaleY(1.1);">838 RPM</div>
<div class="t" style="top:496.12px;font-size:7.95px;color:#1c1c1c;right:16.00px;transform:scaleY(1.1);">820 RPM</div>
<svg style="left:1588.00px;top:503.07px" width="10" height="10"><rect x="0.5" y="0.5" width="9" height="9" fill="#555"/><rect x="1.5" y="1.5" width="3" height="3" fill="#bbb"/><rect x="5.5" y="1.5" width="3" height="3" fill="#bbb"/><rect x="1.5" y="5.5" width="3" height="3" fill="#bbb"/><rect x="5.5" y="5.5" width="3" height="3" fill="#bbb"/></svg>
<div class="t" style="top:508.88px;font-size:7.95px;color:#1c1c1c;left:1598.50px;transform:scaleY(1.1);">W_PUMP+</div>
<div class="t" style="top:508.88px;font-size:7.95px;color:#1c1c1c;right:196.00px;transform:scaleY(1.1);">759 RPM</div>
<div class="t" style="top:508.88px;font-size:7.95px;color:#1c1c1c;right:136.00px;transform:scaleY(1.1);">754 RPM</div>
<div class="t" style="top:508.88px;font-size:7.95px;color:#1c1c1c;right:76.00px;transform:scaleY(1.1);">764 RPM</div>
<div class="t" style="top:508.88px;font-size:7.95px;color:#1c1c1c;right:16.00px;transform:scaleY(1.1);">760 RPM</div>
<div class="a" style="left:1587.00px;top:514.35px;width:321.40px;height:12.75px;background:#f0f0f0;"></div>
<svg style="left:1588.00px;top:515.83px" width="10" height="10"><rect x="0.5" y="0.5" width="9" height="9" fill="#555"/><rect x="1.5" y="1.5" width="3" height="3" fill="#bbb"/><rect x="5.5" y="1.5" width="3" height="3" fill="#bbb"/><rect x="1.5" y="5.5" width="3" height="3" fill="#bbb"/><rect x="5.5" y="5.5" width="3" height="3" fill="#bbb"/></svg>
<div class="t" style="top:521.62px;font-size:7.95px;color:#1c1c1c;left:1598.50px;transform:scaleY(1.1);">AIO Pump</div>
<div class="t" style="top:521.62px;font-size:7.95px;color:#1c1c1c;right:196.00px;transform:scaleY(1.1);">1,028 RPM</div>
<div class="t" style="top:521.62px;font-size:7.95px;color:#1c1c1c;right:136.00px;transform:scaleY(1.1);">1,028 RPM</div>
<div class="t" style="top:521.62px;font-size:7.95px;color:#1c1c1c;right:76.00px;transform:scaleY(1.1);">1,046 RPM</div>
<div class="t" style="top:521.62px;font-size:7.95px;color:#1c1c1c;right:16.00px;transform:scaleY(1.1);">1,035 RPM</div>
<div class="a" style="left:1596.50px;top:539.85px;width:311.90px;height:11.25px;background:#dcdcdc;"></div>
<div class="a" style="left:1668.40px;top:539.85px;width:1.20px;height:11.25px;background:#ffffff;"></div>
<div class="a" style="left:1728.40px;top:539.85px;width:1.20px;height:11.25px;background:#ffffff;"></div>
<div class="a" style="left:1788.40px;top:539.85px;width:1.20px;height:11.25px;background:#ffffff;"></div>
<div class="a" style="left:1848.40px;top:539.85px;width:1.20px;height:11.25px;background:#ffffff;"></div>
<svg style="left:1574.50px;top:545.12px" width="7" height="4"><path d="M0.5 0.5L3.5 3.3L6.5 0.5" stroke="#555" fill="none" stroke-width="0.9"/></svg>
<svg style="left:1587.00px;top:540.33px" width="8" height="12"><rect x="1" y="0.5" width="6" height="11" rx="0.6" fill="#3a3a3a"/><rect x="2" y="1.2" width="2" height="9.5" fill="#666"/><path d="M0 2H1M0 4H1M0 6H1M0 8H1M0 10H1M7 2H8M7 4H8M7 6H8M7 8H8M7 10H8" stroke="#555" stroke-width="0.7"/></svg>
<div class="t" style="top:547.12px;font-size:7.95px;color:#333;left:1598.50px;transform:scaleY(1.1);font-style:italic;">ASUS ROG CRO...</div>
<svg style="left:1588.00px;top:552.58px" width="7" height="13"><rect x="2.3" y="0.5" width="2.4" height="9" rx="1.2" fill="#f2f2f2" stroke="#9aa" stroke-width="0.6"/><rect x="2.9" y="4" width="1.2" height="6" fill="#f08040"/><circle cx="3.5" cy="10.3" r="2.2" fill="#f07838" stroke="#8aa0b8" stroke-width="0.6"/></svg>
<div class="t" style="top:559.88px;font-size:7.95px;color:#1c1c1c;left:1598.50px;transform:scaleY(1.1);">Chipset</div>
<div class="t" style="top:559.88px;font-size:7.95px;color:#1c1c1c;right:196.00px;transform:scaleY(1.1);">55.0 °C</div>
<div class="t" style="top:559.88px;font-size:7.95px;color:#1c1c1c;right:136.00px;transform:scaleY(1.1);">55.0 °C</div>
<div class="t" style="top:559.88px;font-size:7.95px;color:#1c1c1c;right:76.00px;transform:scaleY(1.1);">55.0 °C</div>
<div class="t" style="top:559.88px;font-size:7.95px;color:#1c1c1c;right:16.00px;transform:scaleY(1.1);">55.0 °C</div>
<div class="a" style="left:1596.50px;top:565.35px;width:311.90px;height:12.75px;background:#f0f0f0;"></div>
<div class="a" style="left:1596.50px;top:578.10px;width:311.90px;height:11.25px;background:#dcdcdc;"></div>
<div class="a" style="left:1668.40px;top:578.10px;width:1.20px;height:11.25px;background:#ffffff;"></div>
<div class="a" style="left:1728.40px;top:578.10px;width:1.20px;height:11.25px;background:#ffffff;"></div>
<div class="a" style="left:1788.40px;top:578.10px;width:1.20px;height:11.25px;background:#ffffff;"></div>
<div class="a" style="left:1848.40px;top:578.10px;width:1.20px;height:11.25px;background:#ffffff;"></div>
<svg style="left:1574.50px;top:583.38px" width="7" height="4"><path d="M0.5 0.5L3.5 3.3L6.5 0.5" stroke="#555" fill="none" stroke-width="0.9"/></svg>
<svg style="left:1587.00px;top:578.58px" width="8" height="12"><rect x="1" y="0.5" width="6" height="11" rx="0.6" fill="#3a3a3a"/><rect x="2" y="1.2" width="2" height="9.5" fill="#666"/><path d="M0 2H1M0 4H1M0 6H1M0 8H1M0 10H1M7 2H8M7 4H8M7 6H8M7 8H8M7 10H8" stroke="#555" stroke-width="0.7"/></svg>
<div class="t" style="top:585.38px;font-size:7.95px;color:#333;left:1598.50px;transform:scaleY(1.1);font-style:italic;">ASUS EC: ASUS ...</div>
<div class="a" style="left:1587.00px;top:590.85px;width:321.40px;height:12.75px;background:#f0f0f0;"></div>
<svg style="left:1588.00px;top:590.83px" width="7" height="13"><rect x="2.3" y="0.5" width="2.4" height="9" rx="1.2" fill="#f2f2f2" stroke="#9aa" stroke-width="0.6"/><rect x="2.9" y="4" width="1.2" height="6" fill="#f08040"/><circle cx="3.5" cy="10.3" r="2.2" fill="#f07838" stroke="#8aa0b8" stroke-width="0.6"/></svg>
<div class="t" style="top:598.12px;font-size:7.95px;color:#1c1c1c;left:1598.50px;transform:scaleY(1.1);">VRM</div>
<div class="t" style="top:598.12px;font-size:7.95px;color:#1c1c1c;right:196.00px;transform:scaleY(1.1);">21.0 °C</div>
<div class="t" style="top:598.12px;font-size:7.95px;color:#1c1c1c;right:136.00px;transform:scaleY(1.1);">20.0 °C</div>
<div class="t" style="top:598.12px;font-size:7.95px;color:#1c1c1c;right:76.00px;transform:scaleY(1.1);">21.0 °C</div>
<div class="t" style="top:598.12px;font-size:7.95px;color:#1c1c1c;right:16.00px;transform:scaleY(1.1);">20.9 °C</div>
<svg style="left:1588.00px;top:603.58px" width="7" height="13"><rect x="2.3" y="0.5" width="2.4" height="9" rx="1.2" fill="#f2f2f2" stroke="#9aa" stroke-width="0.6"/><rect x="2.9" y="4" width="1.2" height="6" fill="#f08040"/><circle cx="3.5" cy="10.3" r="2.2" fill="#f07838" stroke="#8aa0b8" stroke-width="0.6"/></svg>
<div class="t" style="top:610.88px;font-size:7.95px;color:#1c1c1c;left:1598.50px;transform:scaleY(1.1);">Chipset</div>
<div class="t" style="top:610.88px;font-size:7.95px;color:#1c1c1c;right:196.00px;transform:scaleY(1.1);">55.0 °C</div>
<div class="t" style="top:610.88px;font-size:7.95px;color:#1c1c1c;right:136.00px;transform:scaleY(1.1);">55.0 °C</div>
<div class="t" style="top:610.88px;font-size:7.95px;color:#1c1c1c;right:76.00px;transform:scaleY(1.1);">55.0 °C</div>
<div class="t" style="top:610.88px;font-size:7.95px;color:#1c1c1c;right:16.00px;transform:scaleY(1.1);">55.0 °C</div>
<div class="a" style="left:1587.00px;top:616.35px;width:321.40px;height:12.75px;background:#f0f0f0;"></div>
<svg style="left:1588.00px;top:616.33px" width="8" height="13"><path d="M4.5 0.5L1 6.8H3.6L1.8 12.5L7.2 5.2H4.6L6.5 0.5Z" fill="#ffe04a" stroke="#d88a10" stroke-width="0.8"/></svg>
<div class="t" style="top:623.62px;font-size:7.95px;color:#1c1c1c;left:1598.50px;transform:scaleY(1.1);">1.00V SB Voltage</div>
<div class="t" style="top:623.62px;font-size:7.95px;color:#1c1c1c;right:196.00px;transform:scaleY(1.1);">1.001 V</div>
<div class="t" style="top:623.62px;font-size:7.95px;color:#1c1c1c;right:136.00px;transform:scaleY(1.1);">1.001 V</div>
<div class="t" style="top:623.62px;font-size:7.95px;color:#1c1c1c;right:76.00px;transform:scaleY(1.1);">1.007 V</div>
<div class="t" style="top:623.62px;font-size:7.95px;color:#1c1c1c;right:16.00px;transform:scaleY(1.1);">1.006 V</div>
<svg style="left:1588.00px;top:629.08px" width="8" height="13"><path d="M4.5 0.5L1 6.8H3.6L1.8 12.5L7.2 5.2H4.6L6.5 0.5Z" fill="#ffe04a" stroke="#d88a10" stroke-width="0.8"/></svg>
<div class="t" style="top:636.38px;font-size:7.95px;color:#1c1c1c;left:1598.50px;transform:scaleY(1.1);">CPU Core Current</div>
<div class="t" style="top:636.38px;font-size:7.95px;color:#b0b0b0;right:196.00px;transform:scaleY(1.1);">1 A</div>
<div class="t" style="top:636.38px;font-size:7.95px;color:#b0b0b0;right:136.00px;transform:scaleY(1.1);">1 A</div>
<div class="t" style="top:636.38px;font-size:7.95px;color:#b0b0b0;right:76.00px;transform:scaleY(1.1);">29 A</div>
<div class="t" style="top:636.38px;font-size:7.95px;color:#b0b0b0;right:16.00px;transform:scaleY(1.1);">8 A</div>
<div class="a" style="left:1587.00px;top:641.85px;width:321.40px;height:12.75px;background:#f0f0f0;"></div>
<svg style="left:1588.00px;top:641.83px" width="8" height="13"><path d="M4.5 0.5L1 6.8H3.6L1.8 12.5L7.2 5.2H4.6L6.5 0.5Z" fill="#ffe04a" stroke="#d88a10" stroke-width="0.8"/></svg>
<div class="t" style="top:649.12px;font-size:7.95px;color:#1c1c1c;left:1598.50px;transform:scaleY(1.1);">CPU Core Power</div>
<div class="t" style="top:649.12px;font-size:7.95px;color:#1c1c1c;right:196.00px;transform:scaleY(1.1);">0.744 W</div>
<div class="t" style="top:649.12px;font-size:7.95px;color:#1c1c1c;right:136.00px;transform:scaleY(1.1);">0.312 W</div>
<div class="t" style="top:649.12px;font-size:7.95px;color:#1c1c1c;right:76.00px;transform:scaleY(1.1);">42.688 W</div>
<div class="t" style="top:649.12px;font-size:7.95px;color:#1c1c1c;right:16.00px;transform:scaleY(1.1);">7.093 W</div>
<svg style="left:1588.00px;top:656.78px" width="9" height="9"><circle cx="4.3" cy="4.3" r="3.7" fill="#f4f4f4" stroke="#5a5a5a" stroke-width="1"/><path d="M2.6 3.6L4.3 4.6" stroke="#777" stroke-width="0.8"/></svg>
<div class="t" style="top:661.88px;font-size:7.95px;color:#1c1c1c;left:1598.50px;transform:scaleY(1.1);">Flow Rate</div>
<div class="t" style="top:661.88px;font-size:7.95px;color:#1c1c1c;right:196.00px;transform:scaleY(1.1);">27.792 l/m</div>
<div class="t" style="top:661.88px;font-size:7.95px;color:#1c1c1c;right:136.00px;transform:scaleY(1.1);">27.720 l/m</div>
<div class="t" style="top:661.88px;font-size:7.95px;color:#1c1c1c;right:76.00px;transform:scaleY(1.1);">27.816 l/m</div>
<div class="t" style="top:661.88px;font-size:7.95px;color:#1c1c1c;right:16.00px;transform:scaleY(1.1);">27.772 l/m</div>
<div class="a" style="left:1596.50px;top:667.35px;width:311.90px;height:12.75px;background:#f0f0f0;"></div>
<div class="a" style="left:1596.50px;top:680.10px;width:311.90px;height:11.25px;background:#dcdcdc;"></div>
<div class="a" style="left:1668.40px;top:680.10px;width:1.20px;height:11.25px;background:#ffffff;"></div>
<div class="a" style="left:1728.40px;top:680.10px;width:1.20px;height:11.25px;background:#ffffff;"></div>
<div class="a" style="left:1788.40px;top:680.10px;width:1.20px;height:11.25px;background:#ffffff;"></div>
<div class="a" style="left:1848.40px;top:680.10px;width:1.20px;height:11.25px;background:#ffffff;"></div>
<svg style="left:1574.50px;top:685.38px" width="7" height="4"><path d="M0.5 0.5L3.5 3.3L6.5 0.5" stroke="#555" fill="none" stroke-width="0.9"/></svg>
<svg style="left:1587.00px;top:680.58px" width="8" height="12"><rect x="1" y="0.5" width="6" height="11" rx="0.6" fill="#3a3a3a"/><rect x="2" y="1.2" width="2" height="9.5" fill="#666"/><path d="M0 2H1M0 4H1M0 6H1M0 8H1M0 10H1M7 2H8M7 4H8M7 6H8M7 8H8M7 10H8" stroke="#555" stroke-width="0.7"/></svg>
<div class="t" style="top:687.38px;font-size:7.95px;color:#333;left:1598.50px;transform:scaleY(1.1);font-style:italic;">DIMM Temperat...</div>
<div class="a" style="left:1587.00px;top:692.85px;width:321.40px;height:12.75px;background:#f0f0f0;"></div>
<svg style="left:1588.00px;top:692.83px" width="7" height="13"><rect x="2.3" y="0.5" width="2.4" height="9" rx="1.2" fill="#f2f2f2" stroke="#9aa" stroke-width="0.6"/><rect x="2.9" y="4" width="1.2" height="6" fill="#f08040"/><circle cx="3.5" cy="10.3" r="2.2" fill="#f07838" stroke="#8aa0b8" stroke-width="0.6"/></svg>
<div class="t" style="top:700.12px;font-size:7.95px;color:#1c1c1c;left:1598.50px;transform:scaleY(1.1);">DIMM[0] Tempe...</div>
<div class="t" style="top:700.12px;font-size:7.95px;color:#1c1c1c;right:196.00px;transform:scaleY(1.1);">28.9 °C</div>
<div class="t" style="top:700.12px;font-size:7.95px;color:#1c1c1c;right:136.00px;transform:scaleY(1.1);">28.9 °C</div>
<div class="t" style="top:700.12px;font-size:7.95px;color:#1c1c1c;right:76.00px;transform:scaleY(1.1);">29.3 °C</div>
<div class="t" style="top:700.12px;font-size:7.95px;color:#1c1c1c;right:16.00px;transform:scaleY(1.1);">29.1 °C</div>
<svg style="left:1588.00px;top:705.58px" width="7" height="13"><rect x="2.3" y="0.5" width="2.4" height="9" rx="1.2" fill="#f2f2f2" stroke="#9aa" stroke-width="0.6"/><rect x="2.9" y="4" width="1.2" height="6" fill="#f08040"/><circle cx="3.5" cy="10.3" r="2.2" fill="#f07838" stroke="#8aa0b8" stroke-width="0.6"/></svg>
<div class="t" style="top:712.88px;font-size:7.95px;color:#1c1c1c;left:1598.50px;transform:scaleY(1.1);">DIMM[1] Tempe...</div>
<div class="t" style="top:712.88px;font-size:7.95px;color:#1c1c1c;right:196.00px;transform:scaleY(1.1);">27.1 °C</div>
<div class="t" style="top:712.88px;font-size:7.95px;color:#1c1c1c;right:136.00px;transform:scaleY(1.1);">27.1 °C</div>
<div class="t" style="top:712.88px;font-size:7.95px;color:#1c1c1c;right:76.00px;transform:scaleY(1.1);">27.3 °C</div>
<div class="t" style="top:712.88px;font-size:7.95px;color:#1c1c1c;right:16.00px;transform:scaleY(1.1);">27.1 °C</div>
<div class="a" style="left:1587.00px;top:718.35px;width:321.40px;height:12.75px;background:#f0f0f0;"></div>
<svg style="left:1588.00px;top:718.33px" width="7" height="13"><rect x="2.3" y="0.5" width="2.4" height="9" rx="1.2" fill="#f2f2f2" stroke="#9aa" stroke-width="0.6"/><rect x="2.9" y="4" width="1.2" height="6" fill="#f08040"/><circle cx="3.5" cy="10.3" r="2.2" fill="#f07838" stroke="#8aa0b8" stroke-width="0.6"/></svg>
<div class="t" style="top:725.62px;font-size:7.95px;color:#1c1c1c;left:1598.50px;transform:scaleY(1.1);">DIMM[2] Tempe...</div>
<div class="t" style="top:725.62px;font-size:7.95px;color:#1c1c1c;right:196.00px;transform:scaleY(1.1);">29.7 °C</div>
<div class="t" style="top:725.62px;font-size:7.95px;color:#1c1c1c;right:136.00px;transform:scaleY(1.1);">29.7 °C</div>
<div class="t" style="top:725.62px;font-size:7.95px;color:#1c1c1c;right:76.00px;transform:scaleY(1.1);">29.9 °C</div>
<div class="t" style="top:725.62px;font-size:7.95px;color:#1c1c1c;right:16.00px;transform:scaleY(1.1);">29.8 °C</div>
<svg style="left:1588.00px;top:731.08px" width="7" height="13"><rect x="2.3" y="0.5" width="2.4" height="9" rx="1.2" fill="#f2f2f2" stroke="#9aa" stroke-width="0.6"/><rect x="2.9" y="4" width="1.2" height="6" fill="#f08040"/><circle cx="3.5" cy="10.3" r="2.2" fill="#f07838" stroke="#8aa0b8" stroke-width="0.6"/></svg>
<div class="t" style="top:738.38px;font-size:7.95px;color:#1c1c1c;left:1598.50px;transform:scaleY(1.1);">DIMM[3] Tempe...</div>
<div class="t" style="top:738.38px;font-size:7.95px;color:#1c1c1c;right:196.00px;transform:scaleY(1.1);">27.9 °C</div>
<div class="t" style="top:738.38px;font-size:7.95px;color:#1c1c1c;right:136.00px;transform:scaleY(1.1);">27.9 °C</div>
<div class="t" style="top:738.38px;font-size:7.95px;color:#1c1c1c;right:76.00px;transform:scaleY(1.1);">28.1 °C</div>
<div class="t" style="top:738.38px;font-size:7.95px;color:#1c1c1c;right:16.00px;transform:scaleY(1.1);">28.0 °C</div>
<div class="a" style="left:1596.50px;top:743.85px;width:311.90px;height:12.75px;background:#f0f0f0;"></div>
<div class="a" style="left:1596.50px;top:756.60px;width:311.90px;height:11.25px;background:#dcdcdc;"></div>
<div class="a" style="left:1668.40px;top:756.60px;width:1.20px;height:11.25px;background:#ffffff;"></div>
<div class="a" style="left:1728.40px;top:756.60px;width:1.20px;height:11.25px;background:#ffffff;"></div>
<div class="a" style="left:1788.40px;top:756.60px;width:1.20px;height:11.25px;background:#ffffff;"></div>
<div class="a" style="left:1848.40px;top:756.60px;width:1.20px;height:11.25px;background:#ffffff;"></div>
<svg style="left:1576.30px;top:760.38px" width="4" height="7"><path d="M0.5 0.5L3.3 3.5L0.5 6.5" stroke="#555" fill="none" stroke-width="0.9"/></svg>
<svg style="left:1587.00px;top:757.08px" width="8" height="12"><rect x="1" y="0.5" width="6" height="11" rx="0.6" fill="#3a3a3a"/><rect x="2" y="1.2" width="2" height="9.5" fill="#666"/><path d="M0 2H1M0 4H1M0 6H1M0 8H1M0 10H1M7 2H8M7 4H8M7 6H8M7 8H8M7 10H8" stroke="#555" stroke-width="0.7"/></svg>
<div class="t" style="top:763.88px;font-size:7.95px;color:#333;left:1598.50px;transform:scaleY(1.1);font-style:italic;">GPU [#0]: NVID...</div>
<div class="a" style="left:1596.50px;top:769.35px;width:311.90px;height:12.75px;background:#f0f0f0;"></div>
<div class="a" style="left:1596.50px;top:782.10px;width:311.90px;height:11.25px;background:#dcdcdc;"></div>
<div class="a" style="left:1668.40px;top:782.10px;width:1.20px;height:11.25px;background:#ffffff;"></div>
<div class="a" style="left:1728.40px;top:782.10px;width:1.20px;height:11.25px;background:#ffffff;"></div>
<div class="a" style="left:1788.40px;top:782.10px;width:1.20px;height:11.25px;background:#ffffff;"></div>
<div class="a" style="left:1848.40px;top:782.10px;width:1.20px;height:11.25px;background:#ffffff;"></div>
<svg style="left:1574.50px;top:787.38px" width="7" height="4"><path d="M0.5 0.5L3.5 3.3L6.5 0.5" stroke="#555" fill="none" stroke-width="0.9"/></svg>
<svg style="left:1587.00px;top:782.58px" width="8" height="12"><rect x="1" y="0.5" width="6" height="11" rx="0.6" fill="#3a3a3a"/><rect x="2" y="1.2" width="2" height="9.5" fill="#666"/><path d="M0 2H1M0 4H1M0 6H1M0 8H1M0 10H1M7 2H8M7 4H8M7 6H8M7 8H8M7 10H8" stroke="#555" stroke-width="0.7"/></svg>
<div class="t" style="top:789.38px;font-size:7.95px;color:#333;left:1598.50px;transform:scaleY(1.1);font-style:italic;">Windows Hardw...</div>
<div class="a" style="left:1587.00px;top:794.85px;width:321.40px;height:12.75px;background:#f0f0f0;"></div>
<svg style="left:1588.00px;top:797.03px" width="9" height="9"><circle cx="4.3" cy="4.3" r="3.7" fill="#f4f4f4" stroke="#5a5a5a" stroke-width="1"/><path d="M2.6 3.6L4.3 4.6" stroke="#777" stroke-width="0.8"/></svg>
<div class="t" style="top:802.12px;font-size:7.95px;color:#1c1c1c;left:1598.50px;transform:scaleY(1.1);">Total Errors</div>
<div class="t" style="top:802.12px;font-size:7.95px;color:#1c1c1c;right:196.00px;transform:scaleY(1.1);">0</div>
<div class="t" style="top:802.12px;font-size:7.95px;color:#1c1c1c;right:136.00px;transform:scaleY(1.1);">0</div>
<div class="t" style="top:802.12px;font-size:7.95px;color:#1c1c1c;right:76.00px;transform:scaleY(1.1);">0</div>
<div class="a" style="left:1217.20px;top:1009.60px;width:31.30px;height:26.00px;background:linear-gradient(#f4f4f4,#e2e2e2);border:1px solid #c4c4c4;"></div>
<div class="a" style="left:1250.50px;top:1009.60px;width:31.00px;height:26.00px;background:linear-gradient(#f4f4f4,#e2e2e2);border:1px solid #c4c4c4;"></div>
<svg style="left:1221px;top:1017px" width="24" height="10"><path d="M0 5L4.5 0.8V3.2H10V6.8H4.5V9.2Z" fill="#2f8ee0"/><path d="M24 5L19.5 0.8V3.2H14V6.8H19.5V9.2Z" fill="#2f8ee0"/></svg>
<svg style="left:1254px;top:1017px" width="24" height="10"><path d="M10 5L5.5 0.8V3.2H0V6.8H5.5V9.2Z" fill="#2f8ee0"/><path d="M14 5L18.5 0.8V3.2H24V6.8H18.5V9.2Z" fill="#2f8ee0"/></svg>
<div class="a" style="left:1653.75px;top:1009.40px;width:31.50px;height:26.30px;background:linear-gradient(#f4f4f4,#e2e2e2);border:1px solid #c4c4c4;"></div>
<div class="a" style="left:1693.00px;top:1009.40px;width:31.50px;height:26.30px;background:linear-gradient(#f4f4f4,#e2e2e2);border:1px solid #c4c4c4;"></div>
<div class="a" style="left:1777.00px;top:1009.40px;width:31.50px;height:26.30px;background:linear-gradient(#f4f4f4,#e2e2e2);border:1px solid #c4c4c4;"></div>
<div class="a" style="left:1810.70px;top:1009.40px;width:31.50px;height:26.30px;background:linear-gradient(#f4f4f4,#e2e2e2);border:1px solid #c4c4c4;"></div>
<div class="a" style="left:1845.00px;top:1009.40px;width:31.50px;height:26.30px;background:linear-gradient(#f4f4f4,#e2e2e2);border:1px solid #c4c4c4;"></div>
<div class="a" style="left:1880.00px;top:1009.40px;width:31.50px;height:26.30px;background:linear-gradient(#f4f4f4,#e2e2e2);border:1px solid #c4c4c4;"></div>
<div class="t" style="top:1021.90px;font-size:8.6px;color:#222;left:1743.75px;transform:scaleY(1.1);">0:00:34</div>
<svg style="left:1657px;top:1012px" width="25" height="21"><path d="M6 2L22 5V17L6 14Z" fill="#2d6fd0"/><path d="M8 4L20 6V15L8 13Z" fill="#6ab0f0"/><circle cx="9" cy="13" r="4.5" fill="#cfe6ff" stroke="#6a88a8" stroke-width="1.2"/><path d="M12 16L16 20" stroke="#8a5a30" stroke-width="2"/></svg>
<svg style="left:1697px;top:1012px" width="25" height="21"><path d="M2 2L12 4V10L2 8Z" fill="#2a8ad8"/><path d="M10 11L22 13V19L10 17Z" fill="#2a8ad8"/><path d="M12 6H17V11" stroke="#999" fill="none"/></svg>
<svg style="left:1780px;top:1010.5px" width="25" height="24"><circle cx="12.5" cy="12" r="10.5" fill="#fff" stroke="#333" stroke-width="1.3"/><path d="M12.5 5V12H17" stroke="#111" stroke-width="1.4" fill="none"/><path d="M12.5 2V4M12.5 20V22M2 12H4M21 12H23" stroke="#333"/></svg>
<svg style="left:1815px;top:1011px" width="24" height="23"><path d="M4 2H14L17 5V20H4Z" fill="#f6f6f6" stroke="#ccc"/><path d="M7 4V19M10 4V19" stroke="#ddd"/><path d="M15 12V21M10.5 16.5H19.5" stroke="#8fd04a" stroke-width="3"/></svg>
<svg style="left:1849px;top:1011px" width="24" height="23"><circle cx="12" cy="11.5" r="8" fill="none" stroke="#aaa" stroke-width="4" stroke-dasharray="3 1.6"/><circle cx="12" cy="11.5" r="5" fill="none" stroke="#bbb" stroke-width="2.5"/></svg>
<svg style="left:1884px;top:1011px" width="24" height="23"><path d="M4 3L20 20M20 3L4 20" stroke="#2a8ad8" stroke-width="4.5"/></svg>
<div class="a" style="left:1567.20px;top:24.00px;width:1.00px;height:980.00px;background:#333;"></div>
<div class="a" style="left:1216.40px;top:1043.70px;width:703.60px;height:6.30px;background:linear-gradient(#0a58b0,#0a68c8);"></div>
<div class="a" style="left:0.00px;top:1050.50px;width:1920.00px;height:29.50px;background:#1f2d3b;"></div>
<svg style="left:11.75px;top:1058.7px" width="12.5" height="12.5"><path d="M0 1.8L5.2 1.1V6H0Z M6 1L12.5 0V6H6Z M0 6.8H5.2V11.7L0 11Z M6 6.8H12.5V12.5L6 11.8Z" fill="#ffffff"/></svg>
<svg style="left:47.5px;top:1058.5px" width="13" height="13"><circle cx="8" cy="5" r="4.2" stroke="#fff" stroke-width="1.1" fill="none"/><path d="M5 8L0.6 12.4" stroke="#fff" stroke-width="1.2"/></svg>
<svg style="left:83.7px;top:1057px" width="18" height="16"><path d="M5 0.5L17.5 3.5V11.5L5 9Z" fill="#4cb4f0"/><path d="M0.5 12.5L9 10.5L15 13L6 15.5Z" fill="#d8d8d8"/></svg>
<svg style="left:119.25px;top:1056.80px" width="16.5" height="16.5" viewBox="0 0 16 16"><circle cx="8" cy="8" r="8" fill="#db4437"/><path d="M8 8L0.9 12.1A8 8 0 0 0 8 16Z M8 8L8 16A8 8 0 0 0 15.1 12.1" fill="#0f9d58"/><path d="M8 8L0.9 12.1A8 8 0 0 1 0.9 3.9L4.5 10Z" fill="#0f9d58"/><path d="M8 4H15A8 8 0 0 1 11.5 14.9L8 8Z" fill="#ffcd40"/><circle cx="8" cy="8" r="3.6" fill="#fff"/><circle cx="8" cy="8" r="2.8" fill="#4285f4"/></svg>
<div class="t" style="top:1065.30px;font-size:9.0px;color:#ffffff;left:139.50px;transform:scaleY(1.08);">CPUs and Overcloc...</div>
<svg style="left:239.25px;top:1056.80px" width="16.5" height="16.5" viewBox="0 0 16 16"><circle cx="8" cy="8" r="8" fill="#db4437"/><path d="M8 8L0.9 12.1A8 8 0 0 0 8 16Z M8 8L8 16A8 8 0 0 0 15.1 12.1" fill="#0f9d58"/><path d="M8 8L0.9 12.1A8 8 0 0 1 0.9 3.9L4.5 10Z" fill="#0f9d58"/><path d="M8 4H15A8 8 0 0 1 11.5 14.9L8 8Z" fill="#ffcd40"/><circle cx="8" cy="8" r="3.6" fill="#fff"/><circle cx="8" cy="8" r="2.8" fill="#4285f4"/></svg>
<div class="t" style="top:1065.30px;font-size:9.0px;color:#ffffff;left:259.50px;transform:scaleY(1.08);">[Official] AMD Ryze...</div>
<svg style="left:360px;top:1057px" width="15" height="17"><path d="M7.5 0L11 5H9V16H6V5H4Z" fill="#c8a060"/><path d="M1 9L3 12L5 8" stroke="#a08050" fill="none"/><path d="M10 10L12 7L14 11" stroke="#a08050" fill="none"/></svg>
<div class="t" style="top:1065.30px;font-size:9.0px;color:#ffffff;left:380.25px;transform:scaleY(1.08);">DRAM Calculator f...</div>
<div class="a" style="left:472.70px;top:1050.50px;width:119.00px;height:29.50px;background:#3a4a54;"></div>
<svg style="left:480px;top:1058px" width="17" height="14"><rect x="0.5" y="0.5" width="16" height="13" fill="#f0f0f0" stroke="#8a8a8a"/><rect x="2" y="3" width="5" height="9" fill="#3a8a50"/><path d="M9 4H15M9 6H15M9 8H15" stroke="#aaa"/></svg>
<div class="t" style="top:1065.30px;font-size:9.0px;color:#ffffff;left:500.70px;transform:scaleY(1.08);">y-cruncher - Shortc...</div>
<div class="a" style="left:600.00px;top:1057.00px;width:18.30px;height:17.00px;background:#c0101a;"></div>
<div class="t" style="top:1065.80px;font-size:12px;color:#ffffff;left:609.20px;transform:translateX(-50%) scaleY(1.08);font-weight:bold;">64</div>
<div class="t" style="top:1065.30px;font-size:9.0px;color:#ffffff;left:621.70px;transform:scaleY(1.08);">AIDA64 Extreme</div>
<svg style="left:720px;top:1060px" width="18.5" height="10"><rect x="0.5" y="0.5" width="17.5" height="9" fill="#4a7050" stroke="#7ab080"/><path d="M3 2V6M6 2V6M9 2V6M12 2V6M15 2V6" stroke="#b0b0b0" stroke-width="1.5"/><path d="M2 7.5H8M10 7.5H16" stroke="#e0b040" stroke-width="1.5"/></svg>
<div class="t" style="top:1065.30px;font-size:9.0px;color:#ffffff;left:741.70px;transform:scaleY(1.08);">AIDA64 Cache &amp; M...</div>
<div class="a" style="left:841.70px;top:1057.50px;width:16.60px;height:16.00px;background:#037a03;"></div>
<div class="t" style="top:1065.80px;font-size:9.5px;color:#22f022;left:850.00px;transform:translateX(-50%) scaleY(1.08);font-weight:bold;">Z</div>
<div class="t" style="top:1065.30px;font-size:9.0px;color:#ffffff;left:862.30px;transform:scaleY(1.08);">ZenTimings 1.2.2</div>
<svg style="left:962.7px;top:1057px" width="16.5" height="16"><rect x="0" y="0" width="16.5" height="16" rx="2.5" fill="#e8f2fa"/><rect x="1" y="1" width="14.5" height="7" rx="1.5" fill="#2e88d8"/><path d="M4 2.5V7.5M7 2.5V6.5M10 3V7.5M13 3.5V7" stroke="#fff" stroke-width="1.3"/><path d="M4 10V14M7 10V14M10 10V14M13 10V14" stroke="#1b2b3a" stroke-width="1.6"/></svg>
<div class="t" style="top:1065.30px;font-size:9.0px;color:#ffffff;left:983.30px;transform:scaleY(1.08);">HWiNFO64 v7.02-4...</div>
<div class="a" style="left:114.40px;top:1077.80px;width:113.10px;height:2.20px;background:#8cc8f0;"></div>
<div class="a" style="left:234.00px;top:1077.80px;width:113.50px;height:2.20px;background:#8cc8f0;"></div>
<div class="a" style="left:355.00px;top:1077.80px;width:113.75px;height:2.20px;background:#8cc8f0;"></div>
<div class="a" style="left:473.30px;top:1077.80px;width:118.40px;height:2.20px;background:#8cc8f0;"></div>
<div class="a" style="left:596.70px;top:1077.80px;width:113.30px;height:2.20px;background:#8cc8f0;"></div>
<div class="a" style="left:716.00px;top:1077.80px;width:114.00px;height:2.20px;background:#8cc8f0;"></div>
<div class="a" style="left:836.70px;top:1077.80px;width:101.60px;height:2.20px;background:#8cc8f0;"></div>
<div class="a" style="left:957.70px;top:1077.80px;width:114.00px;height:2.20px;background:#8cc8f0;"></div>
<svg style="left:1737px;top:1062.5px" width="8" height="5"><path d="M0.5 4.5L4 1L7.5 4.5" stroke="#fff" fill="none" stroke-width="1"/></svg>
<svg style="left:1754px;top:1058px" width="11" height="12"><rect x="0" y="0" width="11" height="12" rx="1.5" fill="#e8f2fa"/><rect x="0.8" y="0.8" width="9.4" height="5" fill="#2e88d8"/><path d="M3 7.5V11M5.5 7.5V11M8 7.5V11" stroke="#1b2b3a" stroke-width="1.2"/></svg>
<svg style="left:1771px;top:1058px" width="13" height="13"><rect x="3" y="0.5" width="9.5" height="7" fill="none" stroke="#fff" stroke-width="1"/><path d="M0.5 3V11M0.5 11H6M6 8V12" stroke="#fff" stroke-width="1"/></svg>
<svg style="left:1789px;top:1058.5px" width="12" height="12"><path d="M0.5 4H3L6.5 1V11L3 8H0.5Z" fill="none" stroke="#fff" stroke-width="1"/><path d="M8.3 3.5Q10 6 8.3 8.5M10 2Q12.5 6 10 10" stroke="#fff" fill="none" stroke-width="0.9"/></svg>
<div class="t" style="top:1065.30px;font-size:9px;color:#ffffff;left:1807.80px;transform:scaleY(1.08);">NOB</div>
<div class="t" style="top:1058.30px;font-size:8.6px;color:#ffffff;left:1855.20px;transform:translateX(-50%) scaleY(1.08);">15:59</div>
<div class="t" style="top:1071.50px;font-size:8.6px;color:#ffffff;left:1855.20px;transform:translateX(-50%) scaleY(1.08);">18.05.2021</div>
<svg style="left:1888.5px;top:1058px" width="14" height="13"><path d="M0.5 0.5H13.5V9.5H6L2.5 12.5V9.5H0.5Z" fill="none" stroke="#fff" stroke-width="1"/></svg>
<div class="a" style="left:1913.00px;top:1050.50px;width:1.00px;height:29.50px;background:#5a6870;"></div>
</body></html>
